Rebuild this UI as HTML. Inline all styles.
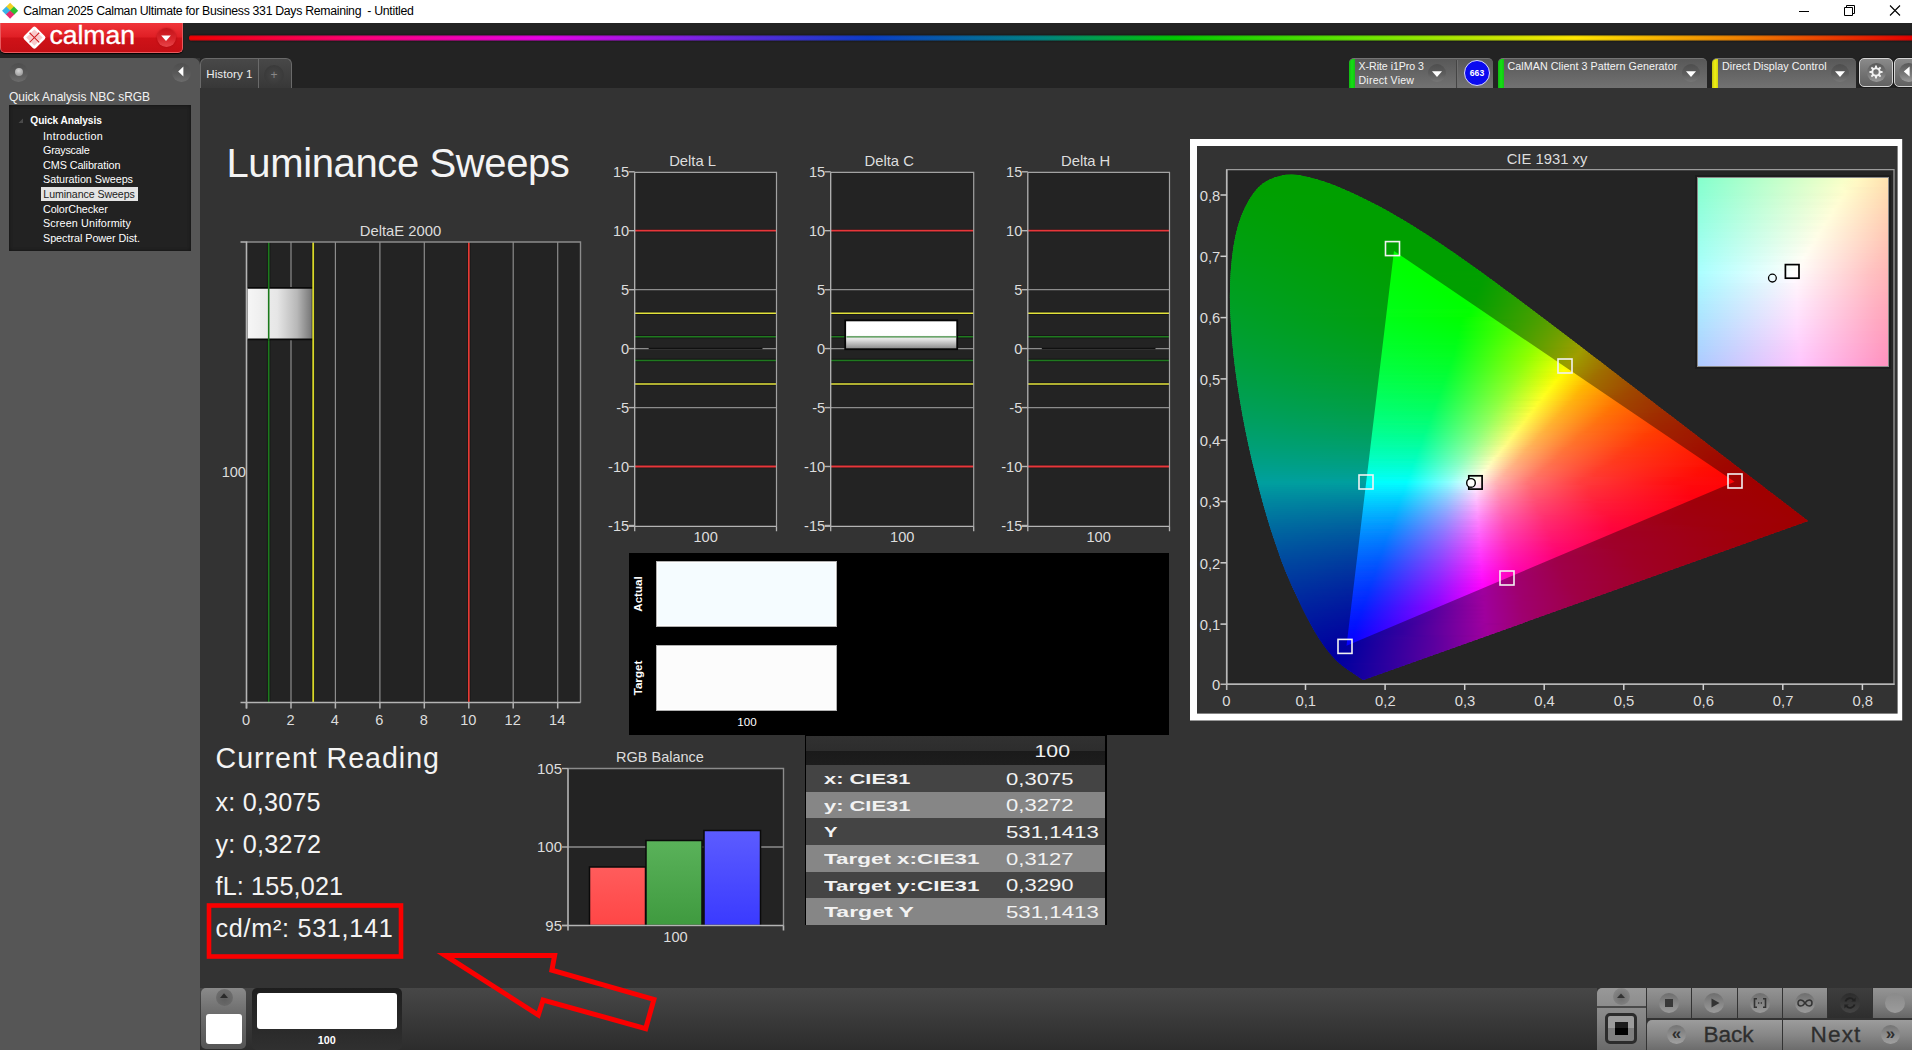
<!DOCTYPE html><html><head><meta charset="utf-8"><title>Calman</title><style>html,body{margin:0;padding:0;background:#333;overflow:hidden}
body{width:1912px;height:1050px;position:relative;font-family:"Liberation Sans",sans-serif;color:#eee}
.abs{position:absolute;box-sizing:border-box}
.t{position:absolute;white-space:pre;font-family:"Liberation Sans",sans-serif}
.ct{font-family:"Liberation Sans",sans-serif;font-size:14.8px;fill:#ddd}
svg text{font-family:"Liberation Sans",sans-serif}
</style></head><body>
<div class="abs" style="left:0px;top:23px;width:1912px;height:35px;background:#232323"></div><div class="abs" style="left:0px;top:0px;width:1912px;height:23px;background:#fff"></div><svg class="abs" style="left:0px;top:1px" width="20" height="20" viewBox="0 0 20 20"><g transform="translate(10.1 9.8) rotate(45)"><rect x="-5.7" y="-5.7" width="6" height="6" fill="#f2d024"/><rect x="-0.3" y="-5.7" width="6" height="6" fill="#30c030"/><rect x="-5.7" y="-0.3" width="6" height="6" fill="#3ab4e8"/><rect x="-0.3" y="-0.3" width="6" height="6" fill="#e82a6e"/></g></svg><div class="t" style="left:23.3px;top:4.2px;font-size:12.3px;line-height:15px;color:#000;letter-spacing:-0.309px;">Calman 2025 Calman Ultimate for Business 331 Days Remaining  - Untitled</div><svg class="abs" style="left:1790px;top:0" width="122" height="23" viewBox="0 0 122 23"><path d="M9 11.5H19" stroke="#000" stroke-width="1"/><path d="M54.5 7.5H62.5V15.5H54.5Z M56.5 7.5V5.5H64.5V13.5H62.5" fill="none" stroke="#000" stroke-width="1"/><path d="M100 5.5L110 15.5M110 5.5L100 15.5" stroke="#000" stroke-width="1.1"/></svg><div class="abs" style="left:189px;top:35px;width:1723px;height:6px;border-radius:3px 0 0 3px;background:linear-gradient(90deg,#f00000 0,#ff0078 172px,#e600e6 353px,#8220e6 498px,#0a3cc8 679px,#008282 851px,#00c800 987px,#64e600 1168px,#ffe600 1386px,#f08200 1549px,#e60000 1723px);box-shadow:0 0 2px rgba(0,0,0,.6)"></div><div class="abs" style="left:189px;top:35px;width:1723px;height:6px;border-radius:3px 0 0 3px;background:linear-gradient(180deg,rgba(30,30,30,.75) 0,rgba(30,30,30,0) 28%,rgba(30,30,30,0) 72%,rgba(30,30,30,.75) 100%)"></div><div class="abs" style="left:0px;top:23px;width:183px;height:29.7px;border-radius:0 0 5px 5px;background:linear-gradient(180deg,#f0353a 0,#e01f25 48%,#cf1218 52%,#c40f15 100%);border:1px solid #e85a5e;border-top:none;box-shadow:0 1px 1px #000"></div><svg class="abs" style="left:20px;top:23px" width="30" height="30" viewBox="0 0 30 30"><g transform="translate(14.4 14.6) rotate(45)"><rect x="-8.4" y="-8.4" width="16.8" height="16.8" rx="2.2" fill="#fff"/><g fill="#f9c9cb"><rect x="-5.8" y="-5.8" width="4.9" height="4.9"/><rect x="0.9" y="-5.8" width="4.9" height="4.9"/><rect x="-5.8" y="0.9" width="4.9" height="4.9"/><rect x="0.9" y="0.9" width="4.9" height="4.9"/></g><path d="M0 -6.8V6.8M-6.800 0H6.800" stroke="#d4262b" stroke-width="1.3"/></g></svg><div class="t" style="left:49.4px;top:19.2px;font-size:26.6px;line-height:32px;color:#fff;letter-spacing:-0.025px;-webkit-text-stroke:0.35px #fff;">calman</div><div class="abs" style="left:156.5px;top:28px;width:19px;height:19px;border-radius:50%;background:linear-gradient(180deg,#c4141a 0,#d8242a 55%,#e8454a 100%);box-shadow:0 0 2px rgba(120,0,0,.5)"></div><svg class="abs" style="left:160px;top:34px" width="12" height="8"><path d="M1.2 1.5H10.8L6 7Z" fill="#fff"/></svg><div class="abs" style="left:0px;top:58px;width:200px;height:992px;background:#565656;border-radius:0 7px 0 0"></div><div class="abs" style="left:9px;top:63px;width:19px;height:19px;border-radius:50%;background:linear-gradient(180deg,#4e4e4e,#595959 55%,#6c6c6c)"></div><div class="abs" style="left:14.5px;top:67.5px;width:8px;height:8px;border-radius:50%;background:radial-gradient(circle at 45% 35%,#d4d4d4,#8a8a8a)"></div><div class="abs" style="left:171.5px;top:62.5px;width:19px;height:19px;border-radius:50%;background:linear-gradient(180deg,#4e4e4e,#595959 55%,#6c6c6c)"></div><svg class="abs" style="left:177px;top:66px" width="8" height="11"><path d="M6.4 0.5V10.5L1.2 5.5Z" fill="#fff"/></svg><div class="t" style="left:9.0px;top:89.9px;font-size:12px;line-height:14px;color:#f2f2f2;letter-spacing:-0.045px;">Quick Analysis NBC sRGB</div><div class="abs" style="left:9px;top:105px;width:182px;height:146px;background:#222;box-shadow:inset 0 0 3px 1px #171717"></div><svg class="abs" style="left:17px;top:117px" width="8" height="8"><path d="M6 1.5V6H1.5Z" fill="#4a4a4a"/></svg><div class="t" style="left:30.3px;top:114.9px;font-size:10.2px;line-height:12px;color:#fff;font-weight:bold;letter-spacing:-0.090px;">Quick Analysis</div><div class="t" style="left:43.0px;top:129.6px;font-size:10.8px;line-height:13px;color:#fff;letter-spacing:0.314px;">Introduction</div><div class="t" style="left:43.0px;top:144.1px;font-size:10.8px;line-height:13px;color:#fff;letter-spacing:-0.246px;">Grayscale</div><div class="t" style="left:43.0px;top:158.6px;font-size:10.8px;line-height:13px;color:#fff;letter-spacing:-0.082px;">CMS Calibration</div><div class="t" style="left:43.0px;top:173.1px;font-size:10.8px;line-height:13px;color:#fff;letter-spacing:-0.039px;">Saturation Sweeps</div><div class="abs" style="left:41px;top:187px;width:97px;height:14px;background:#e4e4e4"></div><div class="t" style="left:43.3px;top:187.6px;font-size:10.6px;line-height:13px;color:#222;letter-spacing:-0.063px;">Luminance Sweeps</div><div class="t" style="left:43.0px;top:202.6px;font-size:10.8px;line-height:13px;color:#fff;letter-spacing:-0.110px;">ColorChecker</div><div class="t" style="left:43.0px;top:216.6px;font-size:10.8px;line-height:13px;color:#fff;letter-spacing:0.128px;">Screen Uniformity</div><div class="t" style="left:43.0px;top:231.6px;font-size:10.8px;line-height:13px;color:#fff;letter-spacing:-0.042px;">Spectral Power Dist.</div><div class="abs" style="left:200px;top:58px;width:1712px;height:30px;background:#232323"></div><div class="abs" style="left:200px;top:58px;width:92px;height:30px;background:linear-gradient(180deg,#484848,#383838);border:1px solid #6a6a6a;border-bottom:none;border-radius:6px 6px 0 0"></div><div class="abs" style="left:258px;top:59px;width:1px;height:29px;background:#6a6a6a"></div><div class="t" style="left:206.3px;top:66.9px;font-size:11.6px;line-height:14px;color:#eee;letter-spacing:0.059px;">History 1</div><div class="abs" style="left:264px;top:65px;width:20px;height:20px;border-radius:50%;background:radial-gradient(circle,#464646 0,#3a3a3a 70%,rgba(60,60,60,0) 100%)"></div><div class="t" style="left:74.0px;width:400px;top:68.1px;font-size:12px;line-height:14px;color:#888;text-align:center;">+</div><div class="abs" style="left:1349px;top:58px;width:144px;height:30px;background:linear-gradient(180deg,#585858,#727272);border-radius:5px 5px 0 0;border-top:1px solid #747474;overflow:hidden"><div style="position:absolute;left:0;top:-1px;width:6px;height:31px;background:linear-gradient(90deg,#12b812,#14e014 50%,#12c412)"></div></div><div class="abs" style="left:1456px;top:60px;width:1px;height:28px;background:#444;box-shadow:1px 0 0 #6e6e6e"></div><div class="t" style="left:1358.5px;top:59.9px;font-size:10.6px;line-height:13px;color:#f4f4f4;letter-spacing:-0.035px;">X-Rite i1Pro 3</div><div class="t" style="left:1358.5px;top:73.8px;font-size:10.6px;line-height:13px;color:#f4f4f4;letter-spacing:0.208px;">Direct View</div><div class="abs" style="left:1428px;top:64px;width:18px;height:18px;border-radius:50%;background:linear-gradient(180deg,#4c4c4c 0,#5c5c5c 55%,#787878 100%);opacity:.9"></div><svg class="abs" style="left:1431px;top:70.3px" width="12" height="8"><path d="M1 1.2H11L6 7Z" fill="#fff"/></svg><div class="abs" style="left:1464px;top:60px;width:26px;height:26px;border-radius:50%;background:#0a0af0;border:1.3px solid #d8d8ff"></div><div class="t" style="left:1277.0px;width:400px;top:68.3px;font-size:8.6px;line-height:10px;color:#fff;text-align:center;font-weight:bold;">663</div><div class="abs" style="left:1498px;top:58px;width:209px;height:30px;background:linear-gradient(180deg,#585858,#727272);border-radius:5px 5px 0 0;border-top:1px solid #747474;overflow:hidden"><div style="position:absolute;left:0;top:-1px;width:6px;height:31px;background:linear-gradient(90deg,#12b812,#14e014 50%,#12c412)"></div></div><div class="t" style="left:1507.5px;top:59.9px;font-size:10.7px;line-height:13px;color:#f4f4f4;letter-spacing:0.069px;">CalMAN Client 3 Pattern Generator</div><div class="abs" style="left:1681.5px;top:64px;width:18px;height:18px;border-radius:50%;background:linear-gradient(180deg,#4c4c4c 0,#5c5c5c 55%,#787878 100%);opacity:.9"></div><svg class="abs" style="left:1684.5px;top:70.3px" width="12" height="8"><path d="M1 1.2H11L6 7Z" fill="#fff"/></svg><div class="abs" style="left:1712px;top:58px;width:144px;height:30px;background:linear-gradient(180deg,#585858,#727272);border-radius:5px 5px 0 0;border-top:1px solid #747474;overflow:hidden"><div style="position:absolute;left:0;top:-1px;width:6px;height:31px;background:linear-gradient(90deg,#c8c810,#f0f014 50%,#d4d412)"></div></div><div class="t" style="left:1722.0px;top:59.9px;font-size:10.7px;line-height:13px;color:#f4f4f4;letter-spacing:0.056px;">Direct Display Control</div><div class="abs" style="left:1831px;top:64px;width:18px;height:18px;border-radius:50%;background:linear-gradient(180deg,#4c4c4c 0,#5c5c5c 55%,#787878 100%);opacity:.9"></div><svg class="abs" style="left:1834px;top:70.3px" width="12" height="8"><path d="M1 1.2H11L6 7Z" fill="#fff"/></svg><div class="abs" style="left:1859px;top:58px;width:33.5px;height:28.5px;border-radius:5px;background:linear-gradient(180deg,#8a8a8a,#747474 50%,#626262);border:1.2px solid #d4d4d4;box-shadow:0 0 0 1px #1a1a1a"></div><div class="abs" style="left:1866.5px;top:62.5px;width:19px;height:19px;border-radius:50%;background:linear-gradient(180deg,#585858,#7a7a7a 60%,#9a9a9a)"></div><svg class="abs" style="left:1866px;top:62px" width="20" height="20" viewBox="-10 -10 20 20"><path d="M-0.88 -6.54 L0.88 -6.54 L1.10 -4.57 L2.46 -4.01 L4.00 -5.25 L5.25 -4.00 L4.01 -2.46 L4.57 -1.10 L6.54 -0.88 L6.54 0.88 L4.57 1.10 L4.01 2.46 L5.25 4.00 L4.00 5.25 L2.46 4.01 L1.10 4.57 L0.88 6.54 L-0.88 6.54 L-1.10 4.57 L-2.46 4.01 L-4.00 5.25 L-5.25 4.00 L-4.01 2.46 L-4.57 1.10 L-6.54 0.88 L-6.54 -0.88 L-4.57 -1.10 L-4.01 -2.46 L-5.25 -4.00 L-4.00 -5.25 L-2.46 -4.01 L-1.10 -4.57Z M2.70 0 A2.70 2.70 0 1 0 -2.70 0 A2.70 2.70 0 1 0 2.70 0Z" fill="#f0f0f0" fill-rule="evenodd"/></svg><div class="abs" style="left:1894px;top:58px;width:33.5px;height:28.5px;border-radius:5px;background:linear-gradient(180deg,#8a8a8a,#747474 50%,#626262);border:1.2px solid #d4d4d4;box-shadow:0 0 0 1px #1a1a1a"></div><div class="abs" style="left:1898.5px;top:62.5px;width:19px;height:19px;border-radius:50%;background:linear-gradient(180deg,#585858,#7a7a7a 60%,#9a9a9a)"></div><svg class="abs" style="left:1903px;top:66px" width="8" height="11"><path d="M6.6 0.6V10.4L0.8 5.5Z" fill="#fff"/></svg><div class="abs" style="left:200px;top:988px;width:1397px;height:62px;background:linear-gradient(180deg,#474747,#2c2c2c)"></div><div class="abs" style="left:201px;top:988px;width:45px;height:61px;border-radius:5px;background:linear-gradient(180deg,#8a8a8a 0,#6a6a6a 45%,#555 100%)"></div><div class="abs" style="left:215.5px;top:989px;width:17px;height:17px;border-radius:50%;background:radial-gradient(circle at 50% 60%,#5e5e5e,#6c6c6c 70%,rgba(120,120,120,0))"></div><svg class="abs" style="left:219px;top:992px" width="10" height="7"><path d="M1 6L5 1.2L9 6Z" fill="#2a2a2a"/></svg><div class="abs" style="left:206px;top:1014px;width:35.5px;height:30px;background:#fff;border-radius:3px"></div><div class="abs" style="left:251.5px;top:988px;width:150.5px;height:62px;border-radius:5px;background:linear-gradient(180deg,#1e1e1e,#303030)"></div><div class="abs" style="left:257px;top:993px;width:140px;height:36px;background:#fff;border-radius:3px"></div><div class="t" style="left:126.8px;width:400px;top:1033.8px;font-size:10.8px;line-height:13px;color:#fff;text-align:center;font-weight:bold;">100</div>
<svg class="abs" style="left:0;top:0" width="1190" height="1050" viewBox="0 0 1190 1050"><defs><linearGradient id="gde" x1="0" x2="1" y1="0" y2="0"><stop offset="0" stop-color="#f6f6f6"/><stop offset=".45" stop-color="#e6e6e6"/><stop offset=".75" stop-color="#b8b8b8"/><stop offset="1" stop-color="#6e6e6e"/></linearGradient><linearGradient id="gdc" x1="0" x2="0" y1="0" y2="1"><stop offset="0" stop-color="#fff"/><stop offset=".5" stop-color="#fefefe"/><stop offset=".68" stop-color="#dedede"/><stop offset="1" stop-color="#858585"/></linearGradient><linearGradient id="gr" x1="0" x2="0" y1="0" y2="1"><stop offset="0" stop-color="#ff5c5c"/><stop offset="1" stop-color="#ff4646"/></linearGradient><linearGradient id="gg" x1="0" x2="0" y1="0" y2="1"><stop offset="0" stop-color="#5ab25a"/><stop offset="1" stop-color="#3f9a3f"/></linearGradient><linearGradient id="gb" x1="0" x2="0" y1="0" y2="1"><stop offset="0" stop-color="#5c5cff"/><stop offset="1" stop-color="#3a3aff"/></linearGradient></defs><rect x="246.5" y="242" width="334" height="460.5" fill="#232323"/><path d="M291.0 242 V702.5" stroke="#8c8c8c" stroke-width="1.2"/><path d="M335.4 242 V702.5" stroke="#8c8c8c" stroke-width="1.2"/><path d="M379.9 242 V702.5" stroke="#8c8c8c" stroke-width="1.2"/><path d="M424.3 242 V702.5" stroke="#8c8c8c" stroke-width="1.2"/><path d="M513.2 242 V702.5" stroke="#8c8c8c" stroke-width="1.2"/><path d="M557.7 242 V702.5" stroke="#8c8c8c" stroke-width="1.2"/><path d="M268.7 242 V702.5" stroke="#000" stroke-opacity=".3" stroke-width="3.6"/><path d="M468.8 242 V702.5" stroke="#000" stroke-opacity=".3" stroke-width="3.6"/><path d="M268.7 242 V702.5" stroke="#1c7a1c" stroke-width="1.6"/><path d="M468.8 242 V702.5" stroke="#e83a34" stroke-width="1.7"/><rect x="247.5" y="287.8" width="66" height="51.6" fill="url(#gde)"/><path d="M247.5 287.8 H313.5 M247.5 339.400 H313.5" stroke="#080808" stroke-width="1.7"/><path d="M268.7 287 V340.2" stroke="#1c7a1c" stroke-width="1.6"/><path d="M313.2 242 V702.5" stroke="#000" stroke-opacity=".3" stroke-width="3.6"/><path d="M313.2 242 V702.5" stroke="#d8d828" stroke-width="1.8"/><path d="M246.5 242 H580.5 V702.5" fill="none" stroke="#8c8c8c" stroke-width="1.4"/><path d="M240.5 242 H246.5 V708.5 H246.5 M240.5 702.5 H580.5" fill="none" stroke="#b4b4b4" stroke-width="1.6"/><path d="M246.5 702.5 V708.5" stroke="#b4b4b4" stroke-width="1.5"/><text x="246.0" y="724.5" text-anchor="middle" font-size="14.6" fill="#ddd">0</text><path d="M291.0 702.5 V708.5" stroke="#b4b4b4" stroke-width="1.5"/><text x="290.5" y="724.5" text-anchor="middle" font-size="14.6" fill="#ddd">2</text><path d="M335.4 702.5 V708.5" stroke="#b4b4b4" stroke-width="1.5"/><text x="334.9" y="724.5" text-anchor="middle" font-size="14.6" fill="#ddd">4</text><path d="M379.9 702.5 V708.5" stroke="#b4b4b4" stroke-width="1.5"/><text x="379.4" y="724.5" text-anchor="middle" font-size="14.6" fill="#ddd">6</text><path d="M424.3 702.5 V708.5" stroke="#b4b4b4" stroke-width="1.5"/><text x="423.8" y="724.5" text-anchor="middle" font-size="14.6" fill="#ddd">8</text><path d="M468.8 702.5 V708.5" stroke="#b4b4b4" stroke-width="1.5"/><text x="468.3" y="724.5" text-anchor="middle" font-size="14.6" fill="#ddd">10</text><path d="M513.2 702.5 V708.5" stroke="#b4b4b4" stroke-width="1.5"/><text x="512.7" y="724.5" text-anchor="middle" font-size="14.6" fill="#ddd">12</text><path d="M557.7 702.5 V708.5" stroke="#b4b4b4" stroke-width="1.5"/><text x="557.2" y="724.5" text-anchor="middle" font-size="14.6" fill="#ddd">14</text><text x="400.5" y="235.7" text-anchor="middle" font-size="14.8" fill="#ddd">DeltaE 2000</text><text x="246" y="477" text-anchor="end" font-size="14.6" fill="#ddd">100</text><rect x="634.7" y="172.3" width="141.8" height="354" fill="#232323"/><path d="M634.7 289.7 H776.5" stroke="#8c8c8c" stroke-width="1.3"/><path d="M634.7 348.6 H776.5" stroke="#8c8c8c" stroke-width="1.3"/><path d="M634.7 407.6 H776.5" stroke="#8c8c8c" stroke-width="1.3"/><path d="M634.7 230.7 H776.5" stroke="#000" stroke-opacity=".3" stroke-width="3.6"/><path d="M634.7 466.5 H776.5" stroke="#000" stroke-opacity=".3" stroke-width="3.6"/><path d="M634.7 313.2 H776.5" stroke="#000" stroke-opacity=".3" stroke-width="3.6"/><path d="M634.7 384.0 H776.5" stroke="#000" stroke-opacity=".3" stroke-width="3.6"/><path d="M634.7 336.8 H776.5" stroke="#000" stroke-opacity=".3" stroke-width="3.6"/><path d="M634.7 360.4 H776.5" stroke="#000" stroke-opacity=".3" stroke-width="3.6"/><path d="M634.7 230.7 H776.5" stroke="#e8363a" stroke-width="1.8"/><path d="M634.7 466.5 H776.5" stroke="#e8363a" stroke-width="1.8"/><path d="M634.7 313.2 H776.5" stroke="#e2e23a" stroke-width="1.5"/><path d="M634.7 384.0 H776.5" stroke="#e2e23a" stroke-width="1.5"/><path d="M634.7 336.8 H776.5" stroke="#1f7a1f" stroke-width="1.5"/><path d="M634.7 360.4 H776.5" stroke="#1f7a1f" stroke-width="1.5"/><path d="M648.7 348.6 H762.5" stroke="#101010" stroke-width="1.5"/><path d="M634.7 172.3 H776.5 V526.3" fill="none" stroke="#a2a2a2" stroke-width="1.2"/><path d="M634.7 172.3 V531.3 M628.7 526.3 H776.5 M776.5 526.3 V531.3" fill="none" stroke="#b4b4b4" stroke-width="1.3"/><path d="M628.7 171.8 H634.7" stroke="#b4b4b4" stroke-width="1.4"/><text x="629.2" y="176.8" text-anchor="end" font-size="14.6" fill="#ddd">15</text><path d="M628.7 230.7 H634.7" stroke="#b4b4b4" stroke-width="1.4"/><text x="629.2" y="235.7" text-anchor="end" font-size="14.6" fill="#ddd">10</text><path d="M628.7 289.7 H634.7" stroke="#b4b4b4" stroke-width="1.4"/><text x="629.2" y="294.7" text-anchor="end" font-size="14.6" fill="#ddd">5</text><path d="M628.7 348.6 H634.7" stroke="#b4b4b4" stroke-width="1.4"/><text x="629.2" y="353.6" text-anchor="end" font-size="14.6" fill="#ddd">0</text><path d="M628.7 407.6 H634.7" stroke="#b4b4b4" stroke-width="1.4"/><text x="629.2" y="412.6" text-anchor="end" font-size="14.6" fill="#ddd">-5</text><path d="M628.7 466.5 H634.7" stroke="#b4b4b4" stroke-width="1.4"/><text x="629.2" y="471.5" text-anchor="end" font-size="14.6" fill="#ddd">-10</text><path d="M628.7 525.5 H634.7" stroke="#b4b4b4" stroke-width="1.4"/><text x="629.2" y="530.5" text-anchor="end" font-size="14.6" fill="#ddd">-15</text><text x="692.6" y="166" text-anchor="middle" font-size="14.8" fill="#ddd">Delta L</text><text x="705.6" y="542" text-anchor="middle" font-size="14.6" fill="#ddd">100</text><rect x="830.7" y="172.3" width="143" height="354" fill="#232323"/><path d="M830.7 289.7 H973.7" stroke="#8c8c8c" stroke-width="1.3"/><path d="M830.7 348.6 H973.7" stroke="#8c8c8c" stroke-width="1.3"/><path d="M830.7 407.6 H973.7" stroke="#8c8c8c" stroke-width="1.3"/><path d="M830.7 230.7 H973.7" stroke="#000" stroke-opacity=".3" stroke-width="3.6"/><path d="M830.7 466.5 H973.7" stroke="#000" stroke-opacity=".3" stroke-width="3.6"/><path d="M830.7 313.2 H973.7" stroke="#000" stroke-opacity=".3" stroke-width="3.6"/><path d="M830.7 384.0 H973.7" stroke="#000" stroke-opacity=".3" stroke-width="3.6"/><path d="M830.7 336.8 H973.7" stroke="#000" stroke-opacity=".3" stroke-width="3.6"/><path d="M830.7 360.4 H973.7" stroke="#000" stroke-opacity=".3" stroke-width="3.6"/><path d="M830.7 230.7 H973.7" stroke="#e8363a" stroke-width="1.8"/><path d="M830.7 466.5 H973.7" stroke="#e8363a" stroke-width="1.8"/><path d="M830.7 313.2 H973.7" stroke="#e2e23a" stroke-width="1.5"/><path d="M830.7 384.0 H973.7" stroke="#e2e23a" stroke-width="1.5"/><path d="M830.7 336.8 H973.7" stroke="#1f7a1f" stroke-width="1.5"/><path d="M830.7 360.4 H973.7" stroke="#1f7a1f" stroke-width="1.5"/><rect x="845.2" y="320.4" width="112" height="28.8" fill="url(#gdc)" stroke="#060606" stroke-width="1.8"/><path d="M846.5 336.8 H957" stroke="#1f7a1f" stroke-width="1.2" opacity=".85"/><path d="M830.7 172.3 H973.7 V526.3" fill="none" stroke="#a2a2a2" stroke-width="1.2"/><path d="M830.7 172.3 V531.3 M824.7 526.3 H973.7 M973.7 526.3 V531.3" fill="none" stroke="#b4b4b4" stroke-width="1.3"/><path d="M824.7 171.8 H830.7" stroke="#b4b4b4" stroke-width="1.4"/><text x="825.2" y="176.8" text-anchor="end" font-size="14.6" fill="#ddd">15</text><path d="M824.7 230.7 H830.7" stroke="#b4b4b4" stroke-width="1.4"/><text x="825.2" y="235.7" text-anchor="end" font-size="14.6" fill="#ddd">10</text><path d="M824.7 289.7 H830.7" stroke="#b4b4b4" stroke-width="1.4"/><text x="825.2" y="294.7" text-anchor="end" font-size="14.6" fill="#ddd">5</text><path d="M824.7 348.6 H830.7" stroke="#b4b4b4" stroke-width="1.4"/><text x="825.2" y="353.6" text-anchor="end" font-size="14.6" fill="#ddd">0</text><path d="M824.7 407.6 H830.7" stroke="#b4b4b4" stroke-width="1.4"/><text x="825.2" y="412.6" text-anchor="end" font-size="14.6" fill="#ddd">-5</text><path d="M824.7 466.5 H830.7" stroke="#b4b4b4" stroke-width="1.4"/><text x="825.2" y="471.5" text-anchor="end" font-size="14.6" fill="#ddd">-10</text><path d="M824.7 525.5 H830.7" stroke="#b4b4b4" stroke-width="1.4"/><text x="825.2" y="530.5" text-anchor="end" font-size="14.6" fill="#ddd">-15</text><text x="889.2" y="166" text-anchor="middle" font-size="14.8" fill="#ddd">Delta C</text><text x="902.2" y="542" text-anchor="middle" font-size="14.6" fill="#ddd">100</text><rect x="1027.8" y="172.3" width="141.7" height="354" fill="#232323"/><path d="M1027.8 289.7 H1169.5" stroke="#8c8c8c" stroke-width="1.3"/><path d="M1027.8 348.6 H1169.5" stroke="#8c8c8c" stroke-width="1.3"/><path d="M1027.8 407.6 H1169.5" stroke="#8c8c8c" stroke-width="1.3"/><path d="M1027.8 230.7 H1169.5" stroke="#000" stroke-opacity=".3" stroke-width="3.6"/><path d="M1027.8 466.5 H1169.5" stroke="#000" stroke-opacity=".3" stroke-width="3.6"/><path d="M1027.8 313.2 H1169.5" stroke="#000" stroke-opacity=".3" stroke-width="3.6"/><path d="M1027.8 384.0 H1169.5" stroke="#000" stroke-opacity=".3" stroke-width="3.6"/><path d="M1027.8 336.8 H1169.5" stroke="#000" stroke-opacity=".3" stroke-width="3.6"/><path d="M1027.8 360.4 H1169.5" stroke="#000" stroke-opacity=".3" stroke-width="3.6"/><path d="M1027.8 230.7 H1169.5" stroke="#e8363a" stroke-width="1.8"/><path d="M1027.8 466.5 H1169.5" stroke="#e8363a" stroke-width="1.8"/><path d="M1027.8 313.2 H1169.5" stroke="#e2e23a" stroke-width="1.5"/><path d="M1027.8 384.0 H1169.5" stroke="#e2e23a" stroke-width="1.5"/><path d="M1027.8 336.8 H1169.5" stroke="#1f7a1f" stroke-width="1.5"/><path d="M1027.8 360.4 H1169.5" stroke="#1f7a1f" stroke-width="1.5"/><path d="M1041.8 348.6 H1155.5" stroke="#101010" stroke-width="1.5"/><path d="M1027.8 172.3 H1169.5 V526.3" fill="none" stroke="#a2a2a2" stroke-width="1.2"/><path d="M1027.8 172.3 V531.3 M1021.8 526.3 H1169.5 M1169.5 526.3 V531.3" fill="none" stroke="#b4b4b4" stroke-width="1.3"/><path d="M1021.8 171.8 H1027.8" stroke="#b4b4b4" stroke-width="1.4"/><text x="1022.3" y="176.8" text-anchor="end" font-size="14.6" fill="#ddd">15</text><path d="M1021.8 230.7 H1027.8" stroke="#b4b4b4" stroke-width="1.4"/><text x="1022.3" y="235.7" text-anchor="end" font-size="14.6" fill="#ddd">10</text><path d="M1021.8 289.7 H1027.8" stroke="#b4b4b4" stroke-width="1.4"/><text x="1022.3" y="294.7" text-anchor="end" font-size="14.6" fill="#ddd">5</text><path d="M1021.8 348.6 H1027.8" stroke="#b4b4b4" stroke-width="1.4"/><text x="1022.3" y="353.6" text-anchor="end" font-size="14.6" fill="#ddd">0</text><path d="M1021.8 407.6 H1027.8" stroke="#b4b4b4" stroke-width="1.4"/><text x="1022.3" y="412.6" text-anchor="end" font-size="14.6" fill="#ddd">-5</text><path d="M1021.8 466.5 H1027.8" stroke="#b4b4b4" stroke-width="1.4"/><text x="1022.3" y="471.5" text-anchor="end" font-size="14.6" fill="#ddd">-10</text><path d="M1021.8 525.5 H1027.8" stroke="#b4b4b4" stroke-width="1.4"/><text x="1022.3" y="530.5" text-anchor="end" font-size="14.6" fill="#ddd">-15</text><text x="1085.65" y="166" text-anchor="middle" font-size="14.8" fill="#ddd">Delta H</text><text x="1098.65" y="542" text-anchor="middle" font-size="14.6" fill="#ddd">100</text><rect x="568" y="768.5" width="215.5" height="157" fill="#232323"/><path d="M568 847 H783.5" stroke="#8c8c8c" stroke-width="1.3"/><rect x="589.5" y="867" width="56" height="58.5" fill="url(#gr)" stroke="#0a0a0a" stroke-width="1.5"/><rect x="646" y="840.5" width="56" height="85" fill="url(#gg)" stroke="#0a0a0a" stroke-width="1.5"/><rect x="704" y="830.5" width="56.5" height="95" fill="url(#gb)" stroke="#0a0a0a" stroke-width="1.5"/><path d="M568 768.5 H783.5 V925.5" fill="none" stroke="#8c8c8c" stroke-width="1.4"/><path d="M568 768.5 V930.5 M562 925.5 H783.5 M783.5 925.5 V930.5" fill="none" stroke="#b4b4b4" stroke-width="1.6"/><path d="M562 768.5 H568" stroke="#b4b4b4" stroke-width="1.4"/><text x="562" y="773.7" text-anchor="end" font-size="15" fill="#ddd">105</text><path d="M562 847.0 H568" stroke="#b4b4b4" stroke-width="1.4"/><text x="562" y="852.2" text-anchor="end" font-size="15" fill="#ddd">100</text><path d="M562 925.5 H568" stroke="#b4b4b4" stroke-width="1.4"/><text x="562" y="930.7" text-anchor="end" font-size="15" fill="#ddd">95</text><text x="660" y="761.5" text-anchor="middle" font-size="14.5" fill="#ddd">RGB Balance</text><text x="675.5" y="942" text-anchor="middle" font-size="14.6" fill="#ddd">100</text></svg><div class="t" style="left:226.5px;top:139.2px;font-size:40px;line-height:48px;color:#f4f4f4;letter-spacing:-0.382px;">Luminance Sweeps</div><div class="abs" style="left:629px;top:553px;width:540px;height:181.5px;background:#000"></div><div class="abs" style="left:656px;top:561px;width:181px;height:66px;background:#f5fcff;border:1px solid #b0b0b0;box-shadow:inset 0 0 0 1px #fff"></div><div class="abs" style="left:656px;top:644.5px;width:181px;height:66.5px;background:#fcfcfc;border:1px solid #b0b0b0;box-shadow:inset 0 0 0 1px #fff"></div><div class="t" style="left:587.5px;top:587px;width:100px;height:14px;line-height:14px;font-size:11.6px;font-weight:bold;color:#fff;text-align:center;transform:rotate(-90deg)">Actual</div><div class="t" style="left:587.5px;top:670.5px;width:100px;height:14px;line-height:14px;font-size:11.6px;font-weight:bold;color:#fff;text-align:center;transform:rotate(-90deg)">Target</div><div class="t" style="left:547.0px;width:400px;top:715.1px;font-size:11.6px;line-height:14px;color:#fff;text-align:center;">100</div><div class="t" style="left:215.5px;top:740.7px;font-size:28.6px;line-height:34px;color:#f4f4f4;letter-spacing:0.976px;">Current Reading</div><div class="t" style="left:215.5px;top:786.9px;font-size:25.2px;line-height:30px;color:#f4f4f4;letter-spacing:0.180px;">x: 0,3075</div><div class="t" style="left:215.5px;top:828.7px;font-size:25.2px;line-height:30px;color:#f4f4f4;letter-spacing:0.236px;">y: 0,3272</div><div class="t" style="left:215.5px;top:870.7px;font-size:25.2px;line-height:30px;color:#f4f4f4;letter-spacing:0.153px;">fL: 155,021</div><div class="t" style="left:215.5px;top:912.7px;font-size:25.2px;line-height:30px;color:#f4f4f4;letter-spacing:0.707px;">cd/m²: 531,141</div><div class="abs" style="left:804.5px;top:735px;width:302.5px;height:190px;background:#000"></div><div class="abs" style="left:806px;top:736px;width:299px;height:29px;background:linear-gradient(180deg,#313131 0,#2d2d2d 50%,#1a1a1a 50%,#1d1d1d 100%)"></div><div class="t" style="right:841.5px;top:741.7px;font-size:15.6px;line-height:19px;color:#f0f0f0;text-align:right;transform:scaleX(1.364);transform-origin:right center;">100</div><div class="abs" style="left:806px;top:765px;width:299px;height:27px;background:#444"></div><div class="t" style="left:824.0px;top:770.4px;font-size:15.4px;line-height:18px;color:#f2f2f2;font-weight:bold;transform:scaleX(1.423);transform-origin:left center;">x: CIE31</div><div class="t" style="left:1005.5px;top:769.9px;font-size:15.6px;line-height:19px;color:#f2f2f2;transform:scaleX(1.413);transform-origin:left center;">0,3075</div><div class="abs" style="left:806px;top:792px;width:299px;height:26px;background:#868686"></div><div class="t" style="left:824.0px;top:796.9px;font-size:15.4px;line-height:18px;color:#f2f2f2;font-weight:bold;transform:scaleX(1.423);transform-origin:left center;">y: CIE31</div><div class="t" style="left:1005.5px;top:796.4px;font-size:15.6px;line-height:19px;color:#f2f2f2;transform:scaleX(1.413);transform-origin:left center;">0,3272</div><div class="abs" style="left:806px;top:818px;width:299px;height:27px;background:#444"></div><div class="t" style="left:824.0px;top:823.4px;font-size:15.4px;line-height:18px;color:#f2f2f2;font-weight:bold;transform:scaleX(1.314);transform-origin:left center;">Y</div><div class="t" style="left:1005.5px;top:822.9px;font-size:15.6px;line-height:19px;color:#f2f2f2;transform:scaleX(1.426);transform-origin:left center;">531,1413</div><div class="abs" style="left:806px;top:845px;width:299px;height:27px;background:#868686"></div><div class="t" style="left:824.0px;top:850.4px;font-size:15.4px;line-height:18px;color:#f2f2f2;font-weight:bold;transform:scaleX(1.457);transform-origin:left center;">Target x:CIE31</div><div class="t" style="left:1005.5px;top:849.9px;font-size:15.6px;line-height:19px;color:#f2f2f2;transform:scaleX(1.413);transform-origin:left center;">0,3127</div><div class="abs" style="left:806px;top:872px;width:299px;height:26px;background:#444"></div><div class="t" style="left:824.0px;top:876.9px;font-size:15.4px;line-height:18px;color:#f2f2f2;font-weight:bold;transform:scaleX(1.457);transform-origin:left center;">Target y:CIE31</div><div class="t" style="left:1005.5px;top:876.4px;font-size:15.6px;line-height:19px;color:#f2f2f2;transform:scaleX(1.413);transform-origin:left center;">0,3290</div><div class="abs" style="left:806px;top:898px;width:299px;height:27px;background:#868686"></div><div class="t" style="left:824.0px;top:903.4px;font-size:15.4px;line-height:18px;color:#f2f2f2;font-weight:bold;transform:scaleX(1.495);transform-origin:left center;">Target Y</div><div class="t" style="left:1005.5px;top:902.9px;font-size:15.6px;line-height:19px;color:#f2f2f2;transform:scaleX(1.426);transform-origin:left center;">531,1413</div>
<svg class="abs" style="left:0;top:0" width="1912" height="1050" viewBox="0 0 1912 1050"><defs><clipPath id="loc"><polygon points="1364.7,679.6 1364.7,679.6 1364.6,679.6 1364.6,679.6 1364.5,679.6 1364.5,679.6 1364.4,679.6 1364.3,679.6 1364.3,679.7 1364.2,679.7 1364.1,679.7 1364.0,679.7 1363.9,679.7 1363.8,679.7 1363.7,679.7 1363.5,679.7 1363.4,679.7 1363.2,679.6 1363.0,679.6 1362.8,679.5 1362.6,679.5 1362.4,679.4 1362.2,679.4 1362.1,679.3 1361.9,679.2 1361.7,679.1 1361.5,679.0 1361.3,678.8 1361.1,678.7 1360.9,678.6 1360.6,678.4 1360.3,678.2 1360.0,678.0 1359.7,677.8 1359.4,677.6 1359.0,677.4 1358.7,677.1 1358.3,676.8 1357.9,676.6 1357.5,676.3 1357.0,676.0 1356.6,675.6 1356.1,675.3 1355.6,675.0 1355.0,674.6 1354.4,674.2 1353.8,673.8 1353.1,673.3 1352.4,672.8 1351.7,672.3 1350.9,671.8 1350.1,671.3 1349.2,670.7 1348.3,670.1 1347.4,669.5 1346.4,668.8 1345.4,668.0 1344.4,667.3 1343.3,666.4 1342.1,665.5 1340.9,664.5 1339.7,663.5 1338.4,662.4 1337.1,661.2 1335.7,659.9 1334.2,658.3 1332.6,656.5 1330.9,654.6 1329.1,652.5 1327.2,650.1 1325.2,647.4 1323.1,644.5 1320.9,641.3 1318.6,637.9 1316.2,634.0 1313.7,629.7 1311.0,625.0 1308.3,619.9 1305.4,614.4 1302.4,608.4 1299.2,601.8 1295.9,594.6 1292.3,587.0 1288.7,578.7 1285.0,569.9 1281.3,560.4 1277.7,550.1 1274.0,539.2 1270.2,527.7 1266.5,515.6 1262.9,502.9 1259.3,489.6 1255.7,475.5 1252.1,461.0 1248.7,446.1 1245.6,431.3 1242.7,416.2 1240.0,400.7 1237.5,385.2 1235.3,369.7 1233.5,354.7 1232.1,340.0 1231.0,325.3 1230.2,311.0 1229.9,297.1 1230.1,283.8 1230.8,271.1 1231.9,258.7 1233.4,246.9 1235.5,235.8 1238.0,225.7 1241.1,216.5 1244.7,208.0 1248.7,200.4 1253.1,193.7 1257.8,188.1 1262.8,183.6 1268.2,180.2 1273.9,177.7 1279.8,175.9 1285.8,174.8 1291.8,174.5 1298.1,175.0 1304.5,176.2 1310.9,177.7 1317.3,179.4 1323.7,181.4 1330.2,183.7 1336.7,186.3 1343.1,189.1 1349.4,191.8 1355.5,194.6 1361.6,197.5 1367.7,200.4 1373.6,203.5 1379.6,206.6 1385.5,209.8 1391.3,213.0 1397.1,216.4 1402.9,219.8 1408.6,223.2 1414.4,226.8 1420.1,230.4 1425.8,234.0 1431.5,237.7 1437.2,241.5 1442.9,245.3 1448.6,249.2 1454.3,253.1 1459.9,257.0 1465.6,261.0 1471.2,265.0 1476.9,269.0 1482.5,273.1 1488.2,277.2 1493.8,281.3 1499.5,285.5 1505.1,289.7 1510.8,293.8 1516.5,298.1 1522.1,302.3 1527.8,306.5 1533.4,310.8 1539.0,315.0 1544.7,319.3 1550.3,323.5 1555.9,327.8 1561.5,332.0 1567.1,336.3 1572.7,340.6 1578.3,344.8 1583.8,349.0 1589.3,353.2 1594.8,357.4 1600.3,361.6 1605.7,365.8 1611.1,369.9 1616.5,374.1 1621.8,378.2 1627.1,382.2 1632.4,386.3 1637.6,390.3 1642.8,394.2 1647.9,398.2 1652.9,402.0 1657.9,405.9 1662.9,409.7 1667.8,413.4 1672.6,417.1 1677.3,420.7 1682.0,424.3 1686.5,427.8 1691.0,431.2 1695.4,434.6 1699.7,437.9 1703.9,441.1 1707.9,444.2 1711.8,447.2 1715.6,450.1 1719.3,453.0 1723.0,455.7 1726.5,458.5 1730.0,461.1 1733.3,463.7 1736.6,466.2 1739.7,468.6 1742.7,470.9 1745.6,473.1 1748.4,475.2 1751.1,477.2 1753.6,479.2 1756.1,481.1 1758.5,482.9 1760.7,484.6 1762.9,486.3 1765.0,487.9 1766.9,489.4 1768.8,490.9 1770.6,492.3 1772.3,493.6 1774.0,494.8 1775.6,496.1 1777.1,497.2 1778.5,498.3 1779.9,499.3 1781.2,500.3 1782.4,501.3 1783.6,502.2 1784.8,503.1 1785.9,503.9 1786.9,504.8 1788.0,505.6 1789.0,506.3 1790.0,507.1 1790.9,507.8 1791.8,508.5 1792.6,509.1 1793.5,509.8 1794.2,510.4 1795.0,511.0 1795.7,511.5 1796.4,512.1 1797.1,512.6 1797.7,513.0 1798.3,513.5 1798.9,513.9 1799.4,514.3 1799.9,514.7 1800.4,515.1 1800.8,515.4 1801.3,515.7 1801.7,516.0 1802.1,516.3 1802.4,516.6 1802.8,516.9 1803.1,517.1 1803.3,517.3 1803.5,517.5 1803.7,517.6 1804.0,517.9 1804.4,518.2 1805.1,518.7 1805.9,519.3 1806.8,520.0 1807.6,520.6 1808.1,521.0"/></clipPath><linearGradient id="c0" gradientUnits="userSpaceOnUse" x1="1283" x2="1300" y1="0" y2="0"><stop offset="0" stop-color="#00ff00"/><stop offset="1" stop-color="#00ff00"/></linearGradient><linearGradient id="c1" gradientUnits="userSpaceOnUse" x1="1275" x2="1309" y1="0" y2="0"><stop offset="0" stop-color="#00ff00"/><stop offset="1" stop-color="#00ff00"/></linearGradient><linearGradient id="c2" gradientUnits="userSpaceOnUse" x1="1269" x2="1317" y1="0" y2="0"><stop offset="0" stop-color="#00ff00"/><stop offset="1" stop-color="#00ff00"/></linearGradient><linearGradient id="c3" gradientUnits="userSpaceOnUse" x1="1265" x2="1324" y1="0" y2="0"><stop offset="0" stop-color="#00ff00"/><stop offset="1" stop-color="#00ff00"/></linearGradient><linearGradient id="c4" gradientUnits="userSpaceOnUse" x1="1262" x2="1330" y1="0" y2="0"><stop offset="0" stop-color="#00ff00"/><stop offset="1" stop-color="#00ff00"/></linearGradient><linearGradient id="c5" gradientUnits="userSpaceOnUse" x1="1260" x2="1335" y1="0" y2="0"><stop offset="0" stop-color="#00ff00"/><stop offset="1" stop-color="#00ff00"/></linearGradient><linearGradient id="c6" gradientUnits="userSpaceOnUse" x1="1257" x2="1340" y1="0" y2="0"><stop offset="0" stop-color="#00ff00"/><stop offset="1" stop-color="#00ff00"/></linearGradient><linearGradient id="c7" gradientUnits="userSpaceOnUse" x1="1256" x2="1344" y1="0" y2="0"><stop offset="0" stop-color="#00ff00"/><stop offset="1" stop-color="#00ff00"/></linearGradient><linearGradient id="c8" gradientUnits="userSpaceOnUse" x1="1254" x2="1349" y1="0" y2="0"><stop offset="0" stop-color="#00ff00"/><stop offset="1" stop-color="#00ff00"/></linearGradient><linearGradient id="c9" gradientUnits="userSpaceOnUse" x1="1252" x2="1354" y1="0" y2="0"><stop offset="0" stop-color="#00ff01"/><stop offset="1" stop-color="#00ff00"/></linearGradient><linearGradient id="c10" gradientUnits="userSpaceOnUse" x1="1251" x2="1358" y1="0" y2="0"><stop offset="0" stop-color="#00ff02"/><stop offset="1" stop-color="#00ff00"/></linearGradient><linearGradient id="c11" gradientUnits="userSpaceOnUse" x1="1249" x2="1362" y1="0" y2="0"><stop offset="0" stop-color="#00ff04"/><stop offset="1" stop-color="#00ff00"/></linearGradient><linearGradient id="c12" gradientUnits="userSpaceOnUse" x1="1248" x2="1366" y1="0" y2="0"><stop offset="0" stop-color="#00ff05"/><stop offset="1" stop-color="#00ff00"/></linearGradient><linearGradient id="c13" gradientUnits="userSpaceOnUse" x1="1247" x2="1370" y1="0" y2="0"><stop offset="0" stop-color="#00ff05"/><stop offset="1" stop-color="#00ff00"/></linearGradient><linearGradient id="c14" gradientUnits="userSpaceOnUse" x1="1246" x2="1374" y1="0" y2="0"><stop offset="0" stop-color="#00ff06"/><stop offset="1" stop-color="#00ff00"/></linearGradient><linearGradient id="c15" gradientUnits="userSpaceOnUse" x1="1245" x2="1378" y1="0" y2="0"><stop offset="0" stop-color="#00ff07"/><stop offset="0.782" stop-color="#00ff00"/><stop offset="1" stop-color="#00ff00"/></linearGradient><linearGradient id="c16" gradientUnits="userSpaceOnUse" x1="1244" x2="1382" y1="0" y2="0"><stop offset="0" stop-color="#00ff08"/><stop offset="0.681" stop-color="#00ff00"/><stop offset="1" stop-color="#00ff00"/></linearGradient><linearGradient id="c17" gradientUnits="userSpaceOnUse" x1="1243" x2="1386" y1="0" y2="0"><stop offset="0" stop-color="#00ff09"/><stop offset="0.629" stop-color="#00ff00"/><stop offset="1" stop-color="#00ff00"/></linearGradient><linearGradient id="c18" gradientUnits="userSpaceOnUse" x1="1242" x2="1389" y1="0" y2="0"><stop offset="0" stop-color="#00ff0a"/><stop offset="0.612" stop-color="#00ff00"/><stop offset="1" stop-color="#00ff00"/></linearGradient><linearGradient id="c19" gradientUnits="userSpaceOnUse" x1="1241" x2="1393" y1="0" y2="0"><stop offset="0" stop-color="#00ff0b"/><stop offset="0.592" stop-color="#00ff00"/><stop offset="1" stop-color="#00ff00"/></linearGradient><linearGradient id="c20" gradientUnits="userSpaceOnUse" x1="1240" x2="1396" y1="0" y2="0"><stop offset="0" stop-color="#00ff0c"/><stop offset="0.59" stop-color="#00ff00"/><stop offset="1" stop-color="#00ff00"/></linearGradient><linearGradient id="c21" gradientUnits="userSpaceOnUse" x1="1239" x2="1400" y1="0" y2="0"><stop offset="0" stop-color="#00ff0d"/><stop offset="0.596" stop-color="#00ff00"/><stop offset="1" stop-color="#00ff00"/></linearGradient><linearGradient id="c22" gradientUnits="userSpaceOnUse" x1="1239" x2="1403" y1="0" y2="0"><stop offset="0" stop-color="#00ff0e"/><stop offset="0.585" stop-color="#00ff00"/><stop offset="1" stop-color="#00ff00"/></linearGradient><linearGradient id="c23" gradientUnits="userSpaceOnUse" x1="1238" x2="1406" y1="0" y2="0"><stop offset="0" stop-color="#00ff0f"/><stop offset="0.595" stop-color="#00ff00"/><stop offset="1" stop-color="#00ff00"/></linearGradient><linearGradient id="c24" gradientUnits="userSpaceOnUse" x1="1237" x2="1410" y1="0" y2="0"><stop offset="0" stop-color="#00ff10"/><stop offset="0.59" stop-color="#00ff00"/><stop offset="1" stop-color="#00ff00"/></linearGradient><linearGradient id="c25" gradientUnits="userSpaceOnUse" x1="1237" x2="1413" y1="0" y2="0"><stop offset="0" stop-color="#00ff11"/><stop offset="0.591" stop-color="#00ff00"/><stop offset="1" stop-color="#00ff00"/></linearGradient><linearGradient id="c26" gradientUnits="userSpaceOnUse" x1="1236" x2="1416" y1="0" y2="0"><stop offset="0" stop-color="#00ff12"/><stop offset="0.6" stop-color="#00ff00"/><stop offset="1" stop-color="#00ff00"/></linearGradient><linearGradient id="c27" gradientUnits="userSpaceOnUse" x1="1236" x2="1419" y1="0" y2="0"><stop offset="0" stop-color="#00ff13"/><stop offset="0.601" stop-color="#00ff00"/><stop offset="1" stop-color="#00ff00"/></linearGradient><linearGradient id="c28" gradientUnits="userSpaceOnUse" x1="1235" x2="1423" y1="0" y2="0"><stop offset="0" stop-color="#00ff14"/><stop offset="0.606" stop-color="#00ff00"/><stop offset="1" stop-color="#00ff00"/></linearGradient><linearGradient id="c29" gradientUnits="userSpaceOnUse" x1="1235" x2="1426" y1="0" y2="0"><stop offset="0" stop-color="#00ff15"/><stop offset="0.618" stop-color="#00ff00"/><stop offset="1" stop-color="#00ff00"/></linearGradient><linearGradient id="c30" gradientUnits="userSpaceOnUse" x1="1234" x2="1429" y1="0" y2="0"><stop offset="0" stop-color="#00ff16"/><stop offset="0.615" stop-color="#00ff00"/><stop offset="1" stop-color="#00ff00"/></linearGradient><linearGradient id="c31" gradientUnits="userSpaceOnUse" x1="1234" x2="1432" y1="0" y2="0"><stop offset="0" stop-color="#00ff17"/><stop offset="0.626" stop-color="#00ff00"/><stop offset="1" stop-color="#00ff00"/></linearGradient><linearGradient id="c32" gradientUnits="userSpaceOnUse" x1="1233" x2="1435" y1="0" y2="0"><stop offset="0" stop-color="#00ff18"/><stop offset="0.634" stop-color="#00ff00"/><stop offset="1" stop-color="#00ff00"/></linearGradient><linearGradient id="c33" gradientUnits="userSpaceOnUse" x1="1233" x2="1438" y1="0" y2="0"><stop offset="0" stop-color="#00ff19"/><stop offset="0.634" stop-color="#00ff00"/><stop offset="1" stop-color="#00ff00"/></linearGradient><linearGradient id="c34" gradientUnits="userSpaceOnUse" x1="1233" x2="1441" y1="0" y2="0"><stop offset="0" stop-color="#00ff1a"/><stop offset="0.644" stop-color="#00ff00"/><stop offset="1" stop-color="#00ff00"/></linearGradient><linearGradient id="c35" gradientUnits="userSpaceOnUse" x1="1232" x2="1444" y1="0" y2="0"><stop offset="0" stop-color="#00ff1b"/><stop offset="0.651" stop-color="#00ff00"/><stop offset="1" stop-color="#00ff00"/></linearGradient><linearGradient id="c36" gradientUnits="userSpaceOnUse" x1="1232" x2="1447" y1="0" y2="0"><stop offset="0" stop-color="#00ff1c"/><stop offset="0.651" stop-color="#00ff00"/><stop offset="1" stop-color="#00ff00"/></linearGradient><linearGradient id="c37" gradientUnits="userSpaceOnUse" x1="1232" x2="1450" y1="0" y2="0"><stop offset="0" stop-color="#00ff1c"/><stop offset="0.661" stop-color="#00ff00"/><stop offset="1" stop-color="#00ff00"/></linearGradient><linearGradient id="c38" gradientUnits="userSpaceOnUse" x1="1231" x2="1453" y1="0" y2="0"><stop offset="0" stop-color="#00ff1e"/><stop offset="0.667" stop-color="#00ff00"/><stop offset="1" stop-color="#00ff00"/></linearGradient><linearGradient id="c39" gradientUnits="userSpaceOnUse" x1="1231" x2="1456" y1="0" y2="0"><stop offset="0" stop-color="#00ff1e"/><stop offset="0.667" stop-color="#00ff00"/><stop offset="1" stop-color="#00ff00"/></linearGradient><linearGradient id="c40" gradientUnits="userSpaceOnUse" x1="1231" x2="1459" y1="0" y2="0"><stop offset="0" stop-color="#00ff1f"/><stop offset="0.675" stop-color="#00ff00"/><stop offset="1" stop-color="#00ff00"/></linearGradient><linearGradient id="c41" gradientUnits="userSpaceOnUse" x1="1231" x2="1461" y1="0" y2="0"><stop offset="0" stop-color="#00ff20"/><stop offset="0.678" stop-color="#00ff00"/><stop offset="1" stop-color="#00ff00"/></linearGradient><linearGradient id="c42" gradientUnits="userSpaceOnUse" x1="1230" x2="1464" y1="0" y2="0"><stop offset="0" stop-color="#00ff22"/><stop offset="0.684" stop-color="#00ff00"/><stop offset="1" stop-color="#00ff00"/></linearGradient><linearGradient id="c43" gradientUnits="userSpaceOnUse" x1="1230" x2="1467" y1="0" y2="0"><stop offset="0" stop-color="#00ff22"/><stop offset="0.692" stop-color="#00ff00"/><stop offset="1" stop-color="#00ff00"/></linearGradient><linearGradient id="c44" gradientUnits="userSpaceOnUse" x1="1230" x2="1470" y1="0" y2="0"><stop offset="0" stop-color="#00ff23"/><stop offset="0.692" stop-color="#00ff00"/><stop offset="1" stop-color="#00ff00"/></linearGradient><linearGradient id="c45" gradientUnits="userSpaceOnUse" x1="1230" x2="1473" y1="0" y2="0"><stop offset="0" stop-color="#00ff24"/><stop offset="0.7" stop-color="#00ff00"/><stop offset="1" stop-color="#00ff00"/></linearGradient><linearGradient id="c46" gradientUnits="userSpaceOnUse" x1="1230" x2="1476" y1="0" y2="0"><stop offset="0" stop-color="#00ff25"/><stop offset="0.699" stop-color="#00ff00"/><stop offset="1" stop-color="#00ff00"/></linearGradient><linearGradient id="c47" gradientUnits="userSpaceOnUse" x1="1229" x2="1478" y1="0" y2="0"><stop offset="0" stop-color="#00ff27"/><stop offset="0.707" stop-color="#00ff00"/><stop offset="1" stop-color="#00ff00"/></linearGradient><linearGradient id="c48" gradientUnits="userSpaceOnUse" x1="1229" x2="1481" y1="0" y2="0"><stop offset="0" stop-color="#00ff28"/><stop offset="0.714" stop-color="#00ff00"/><stop offset="1" stop-color="#00ff00"/></linearGradient><linearGradient id="c49" gradientUnits="userSpaceOnUse" x1="1229" x2="1484" y1="0" y2="0"><stop offset="0" stop-color="#00ff29"/><stop offset="0.722" stop-color="#00ff00"/><stop offset="1" stop-color="#03ff00"/></linearGradient><linearGradient id="c50" gradientUnits="userSpaceOnUse" x1="1229" x2="1487" y1="0" y2="0"><stop offset="0" stop-color="#00ff2a"/><stop offset="0.721" stop-color="#00ff00"/><stop offset="0.992" stop-color="#05ff00"/><stop offset="1" stop-color="#07ff00"/></linearGradient><linearGradient id="c51" gradientUnits="userSpaceOnUse" x1="1229" x2="1489" y1="0" y2="0"><stop offset="0" stop-color="#00ff2b"/><stop offset="0.731" stop-color="#00ff00"/><stop offset="0.977" stop-color="#03ff00"/><stop offset="1" stop-color="#0bff00"/></linearGradient><linearGradient id="c52" gradientUnits="userSpaceOnUse" x1="1229" x2="1492" y1="0" y2="0"><stop offset="0" stop-color="#00ff2c"/><stop offset="0.73" stop-color="#00ff00"/><stop offset="0.966" stop-color="#04ff00"/><stop offset="1" stop-color="#10ff00"/></linearGradient><linearGradient id="c53" gradientUnits="userSpaceOnUse" x1="1229" x2="1495" y1="0" y2="0"><stop offset="0" stop-color="#00ff2d"/><stop offset="0.737" stop-color="#00ff00"/><stop offset="0.955" stop-color="#05ff00"/><stop offset="1" stop-color="#15ff00"/></linearGradient><linearGradient id="c54" gradientUnits="userSpaceOnUse" x1="1229" x2="1498" y1="0" y2="0"><stop offset="0" stop-color="#00ff2e"/><stop offset="0.736" stop-color="#00ff00"/><stop offset="0.937" stop-color="#04ff00"/><stop offset="1" stop-color="#1aff00"/></linearGradient><linearGradient id="c55" gradientUnits="userSpaceOnUse" x1="1229" x2="1500" y1="0" y2="0"><stop offset="0" stop-color="#00ff2f"/><stop offset="0.745" stop-color="#00ff00"/><stop offset="0.93" stop-color="#04ff00"/><stop offset="1" stop-color="#1eff00"/></linearGradient><linearGradient id="c56" gradientUnits="userSpaceOnUse" x1="1229" x2="1503" y1="0" y2="0"><stop offset="0" stop-color="#00ff30"/><stop offset="0.745" stop-color="#00ff00"/><stop offset="0.92" stop-color="#05ff00"/><stop offset="1" stop-color="#24ff00"/></linearGradient><linearGradient id="c57" gradientUnits="userSpaceOnUse" x1="1229" x2="1506" y1="0" y2="0"><stop offset="0" stop-color="#00ff31"/><stop offset="0.751" stop-color="#00ff00"/><stop offset="0.903" stop-color="#04ff00"/><stop offset="1" stop-color="#29ff00"/></linearGradient><linearGradient id="c58" gradientUnits="userSpaceOnUse" x1="1228" x2="1508" y1="0" y2="0"><stop offset="0" stop-color="#00ff32"/><stop offset="0.757" stop-color="#00ff00"/><stop offset="0.893" stop-color="#03ff00"/><stop offset="1" stop-color="#2dff00"/></linearGradient><linearGradient id="c59" gradientUnits="userSpaceOnUse" x1="1228" x2="1511" y1="0" y2="0"><stop offset="0" stop-color="#00ff34"/><stop offset="0.763" stop-color="#00ff00"/><stop offset="0.883" stop-color="#04ff00"/><stop offset="1" stop-color="#33ff00"/></linearGradient><linearGradient id="c60" gradientUnits="userSpaceOnUse" x1="1228" x2="1514" y1="0" y2="0"><stop offset="0" stop-color="#00ff35"/><stop offset="0.762" stop-color="#00ff00"/><stop offset="0.874" stop-color="#05ff00"/><stop offset="1" stop-color="#39ff00"/></linearGradient><linearGradient id="c61" gradientUnits="userSpaceOnUse" x1="1228" x2="1517" y1="0" y2="0"><stop offset="0" stop-color="#00ff36"/><stop offset="0.768" stop-color="#00ff00"/><stop offset="0.858" stop-color="#04ff00"/><stop offset="1" stop-color="#3fff00"/></linearGradient><linearGradient id="c62" gradientUnits="userSpaceOnUse" x1="1228" x2="1519" y1="0" y2="0"><stop offset="0" stop-color="#00ff37"/><stop offset="0.77" stop-color="#00ff00"/><stop offset="0.852" stop-color="#05ff00"/><stop offset="1" stop-color="#43ff00"/></linearGradient><linearGradient id="c63" gradientUnits="userSpaceOnUse" x1="1228" x2="1522" y1="0" y2="0"><stop offset="0" stop-color="#00ff38"/><stop offset="0.776" stop-color="#00ff00"/><stop offset="0.844" stop-color="#06ff00"/><stop offset="1" stop-color="#4aff00"/></linearGradient><linearGradient id="c64" gradientUnits="userSpaceOnUse" x1="1228" x2="1525" y1="0" y2="0"><stop offset="0" stop-color="#00ff39"/><stop offset="0.781" stop-color="#00ff00"/><stop offset="0.835" stop-color="#07ff00"/><stop offset="1" stop-color="#50ff00"/></linearGradient><linearGradient id="c65" gradientUnits="userSpaceOnUse" x1="1229" x2="1527" y1="0" y2="0"><stop offset="0" stop-color="#00ff3a"/><stop offset="0.785" stop-color="#00ff00"/><stop offset="0.832" stop-color="#09ff00"/><stop offset="1" stop-color="#55ff00"/></linearGradient><linearGradient id="c66" gradientUnits="userSpaceOnUse" x1="1229" x2="1530" y1="0" y2="0"><stop offset="0" stop-color="#00ff3b"/><stop offset="0.784" stop-color="#00ff00"/><stop offset="0.864" stop-color="#1cff00"/><stop offset="1" stop-color="#5cff00"/></linearGradient><linearGradient id="c67" gradientUnits="userSpaceOnUse" x1="1229" x2="1533" y1="0" y2="0"><stop offset="0" stop-color="#00ff3d"/><stop offset="0.789" stop-color="#00ff00"/><stop offset="1" stop-color="#63ff00"/></linearGradient><linearGradient id="c68" gradientUnits="userSpaceOnUse" x1="1229" x2="1535" y1="0" y2="0"><stop offset="0" stop-color="#00ff3e"/><stop offset="0.791" stop-color="#04ff00"/><stop offset="1" stop-color="#68ff00"/></linearGradient><linearGradient id="c69" gradientUnits="userSpaceOnUse" x1="1229" x2="1538" y1="0" y2="0"><stop offset="0" stop-color="#00ff3f"/><stop offset="0.783" stop-color="#05ff00"/><stop offset="1" stop-color="#6fff00"/></linearGradient><linearGradient id="c70" gradientUnits="userSpaceOnUse" x1="1229" x2="1541" y1="0" y2="0"><stop offset="0" stop-color="#00ff40"/><stop offset="0.769" stop-color="#03ff00"/><stop offset="1" stop-color="#77ff00"/></linearGradient><linearGradient id="c71" gradientUnits="userSpaceOnUse" x1="1229" x2="1543" y1="0" y2="0"><stop offset="0" stop-color="#00ff42"/><stop offset="0.764" stop-color="#04ff00"/><stop offset="1" stop-color="#7cff00"/></linearGradient><linearGradient id="c72" gradientUnits="userSpaceOnUse" x1="1229" x2="1546" y1="0" y2="0"><stop offset="0" stop-color="#00ff43"/><stop offset="0.738" stop-color="#00ff01"/><stop offset="0.959" stop-color="#6cff00"/><stop offset="1" stop-color="#84ff00"/></linearGradient><linearGradient id="c73" gradientUnits="userSpaceOnUse" x1="1229" x2="1548" y1="0" y2="0"><stop offset="0" stop-color="#00ff44"/><stop offset="0.727" stop-color="#00ff03"/><stop offset="0.865" stop-color="#3eff00"/><stop offset="1" stop-color="#8aff00"/></linearGradient><linearGradient id="c74" gradientUnits="userSpaceOnUse" x1="1229" x2="1551" y1="0" y2="0"><stop offset="0" stop-color="#00ff46"/><stop offset="0.72" stop-color="#00ff04"/><stop offset="0.913" stop-color="#5fff00"/><stop offset="1" stop-color="#92ff00"/></linearGradient><linearGradient id="c75" gradientUnits="userSpaceOnUse" x1="1229" x2="1554" y1="0" y2="0"><stop offset="0" stop-color="#00ff47"/><stop offset="0.714" stop-color="#00ff06"/><stop offset="0.929" stop-color="#6fff00"/><stop offset="1" stop-color="#9bff00"/></linearGradient><linearGradient id="c76" gradientUnits="userSpaceOnUse" x1="1229" x2="1556" y1="0" y2="0"><stop offset="0" stop-color="#00ff48"/><stop offset="0.703" stop-color="#00ff08"/><stop offset="0.856" stop-color="#4aff00"/><stop offset="1" stop-color="#a1ff00"/></linearGradient><linearGradient id="c77" gradientUnits="userSpaceOnUse" x1="1230" x2="1559" y1="0" y2="0"><stop offset="0" stop-color="#00ff49"/><stop offset="0.699" stop-color="#00ff09"/><stop offset="0.857" stop-color="#51ff00"/><stop offset="1" stop-color="#aaff00"/></linearGradient><linearGradient id="c78" gradientUnits="userSpaceOnUse" x1="1230" x2="1562" y1="0" y2="0"><stop offset="0" stop-color="#00ff4b"/><stop offset="0.693" stop-color="#00ff0a"/><stop offset="0.843" stop-color="#4fff00"/><stop offset="1" stop-color="#b3ff00"/></linearGradient><linearGradient id="c79" gradientUnits="userSpaceOnUse" x1="1230" x2="1564" y1="0" y2="0"><stop offset="0" stop-color="#00ff4c"/><stop offset="0.683" stop-color="#00ff0c"/><stop offset="0.838" stop-color="#51ff00"/><stop offset="1" stop-color="#bbff00"/></linearGradient><linearGradient id="c80" gradientUnits="userSpaceOnUse" x1="1230" x2="1567" y1="0" y2="0"><stop offset="0" stop-color="#00ff4d"/><stop offset="0.677" stop-color="#00ff0e"/><stop offset="0.831" stop-color="#53ff00"/><stop offset="1" stop-color="#c4ff00"/></linearGradient><linearGradient id="c81" gradientUnits="userSpaceOnUse" x1="1230" x2="1570" y1="0" y2="0"><stop offset="0" stop-color="#00ff4f"/><stop offset="0.671" stop-color="#00ff0f"/><stop offset="0.835" stop-color="#5cff00"/><stop offset="1" stop-color="#ceff00"/></linearGradient><linearGradient id="c82" gradientUnits="userSpaceOnUse" x1="1230" x2="1572" y1="0" y2="0"><stop offset="0" stop-color="#00ff50"/><stop offset="0.667" stop-color="#00ff11"/><stop offset="0.836" stop-color="#62ff00"/><stop offset="1" stop-color="#d6ff00"/></linearGradient><linearGradient id="c83" gradientUnits="userSpaceOnUse" x1="1230" x2="1575" y1="0" y2="0"><stop offset="0" stop-color="#00ff52"/><stop offset="0.655" stop-color="#00ff13"/><stop offset="0.835" stop-color="#68ff00"/><stop offset="1" stop-color="#e0ff00"/></linearGradient><linearGradient id="c84" gradientUnits="userSpaceOnUse" x1="1231" x2="1577" y1="0" y2="0"><stop offset="0" stop-color="#00ff53"/><stop offset="0.653" stop-color="#01ff14"/><stop offset="0.838" stop-color="#70ff00"/><stop offset="1" stop-color="#e9ff00"/></linearGradient><linearGradient id="c85" gradientUnits="userSpaceOnUse" x1="1231" x2="1580" y1="0" y2="0"><stop offset="0" stop-color="#00ff54"/><stop offset="0.648" stop-color="#02ff16"/><stop offset="0.837" stop-color="#76ff00"/><stop offset="1" stop-color="#f4ff00"/></linearGradient><linearGradient id="c86" gradientUnits="userSpaceOnUse" x1="1231" x2="1583" y1="0" y2="0"><stop offset="0" stop-color="#00ff56"/><stop offset="0.636" stop-color="#00ff18"/><stop offset="0.841" stop-color="#80ff00"/><stop offset="1" stop-color="#ffff00"/></linearGradient><linearGradient id="c87" gradientUnits="userSpaceOnUse" x1="1231" x2="1585" y1="0" y2="0"><stop offset="0" stop-color="#00ff57"/><stop offset="0.633" stop-color="#01ff19"/><stop offset="0.842" stop-color="#87ff00"/><stop offset="0.994" stop-color="#fffb00"/><stop offset="1" stop-color="#fff600"/></linearGradient><linearGradient id="c88" gradientUnits="userSpaceOnUse" x1="1231" x2="1588" y1="0" y2="0"><stop offset="0" stop-color="#00ff59"/><stop offset="0.627" stop-color="#02ff1b"/><stop offset="0.84" stop-color="#8eff00"/><stop offset="0.98" stop-color="#fffc00"/><stop offset="1" stop-color="#ffeb00"/></linearGradient><linearGradient id="c89" gradientUnits="userSpaceOnUse" x1="1232" x2="1591" y1="0" y2="0"><stop offset="0" stop-color="#00ff5a"/><stop offset="0.618" stop-color="#02ff1d"/><stop offset="0.83" stop-color="#8eff00"/><stop offset="0.969" stop-color="#fffb00"/><stop offset="1" stop-color="#ffe100"/></linearGradient><linearGradient id="c90" gradientUnits="userSpaceOnUse" x1="1232" x2="1593" y1="0" y2="0"><stop offset="0" stop-color="#00ff5c"/><stop offset="0.615" stop-color="#03ff1f"/><stop offset="0.825" stop-color="#91ff00"/><stop offset="0.958" stop-color="#fffc00"/><stop offset="1" stop-color="#ffd900"/></linearGradient><linearGradient id="c91" gradientUnits="userSpaceOnUse" x1="1232" x2="1596" y1="0" y2="0"><stop offset="0" stop-color="#00ff5d"/><stop offset="0.61" stop-color="#04ff20"/><stop offset="0.813" stop-color="#8fff00"/><stop offset="0.945" stop-color="#fffd00"/><stop offset="1" stop-color="#ffd000"/></linearGradient><linearGradient id="c92" gradientUnits="userSpaceOnUse" x1="1232" x2="1598" y1="0" y2="0"><stop offset="0" stop-color="#00ff5f"/><stop offset="0.601" stop-color="#02ff23"/><stop offset="0.803" stop-color="#8eff03"/><stop offset="0.934" stop-color="#fffe00"/><stop offset="1" stop-color="#ffc900"/></linearGradient><linearGradient id="c93" gradientUnits="userSpaceOnUse" x1="1232" x2="1601" y1="0" y2="0"><stop offset="0" stop-color="#00ff61"/><stop offset="0.596" stop-color="#03ff25"/><stop offset="0.797" stop-color="#90ff04"/><stop offset="0.927" stop-color="#fffa00"/><stop offset="1" stop-color="#ffc100"/></linearGradient><linearGradient id="c94" gradientUnits="userSpaceOnUse" x1="1233" x2="1604" y1="0" y2="0"><stop offset="0" stop-color="#00ff62"/><stop offset="0.588" stop-color="#03ff27"/><stop offset="0.787" stop-color="#91ff07"/><stop offset="0.911" stop-color="#fffd00"/><stop offset="1" stop-color="#ffb900"/></linearGradient><linearGradient id="c95" gradientUnits="userSpaceOnUse" x1="1233" x2="1606" y1="0" y2="0"><stop offset="0" stop-color="#00ff64"/><stop offset="0.584" stop-color="#04ff29"/><stop offset="0.777" stop-color="#8fff09"/><stop offset="0.879" stop-color="#eaff00"/><stop offset="0.906" stop-color="#fff900"/><stop offset="1" stop-color="#ffb200"/></linearGradient><linearGradient id="c96" gradientUnits="userSpaceOnUse" x1="1233" x2="1609" y1="0" y2="0"><stop offset="0" stop-color="#00ff65"/><stop offset="0.574" stop-color="#02ff2b"/><stop offset="0.766" stop-color="#8dff0c"/><stop offset="0.872" stop-color="#eeff00"/><stop offset="0.894" stop-color="#fffa00"/><stop offset="0.989" stop-color="#ffb100"/><stop offset="1" stop-color="#ffab00"/></linearGradient><linearGradient id="c97" gradientUnits="userSpaceOnUse" x1="1233" x2="1611" y1="0" y2="0"><stop offset="0" stop-color="#00ff67"/><stop offset="0.571" stop-color="#03ff2d"/><stop offset="0.762" stop-color="#90ff0e"/><stop offset="0.873" stop-color="#f8ff00"/><stop offset="0.905" stop-color="#ffe700"/><stop offset="1" stop-color="#ffa500"/></linearGradient><linearGradient id="c98" gradientUnits="userSpaceOnUse" x1="1234" x2="1614" y1="0" y2="0"><stop offset="0" stop-color="#00ff69"/><stop offset="0.563" stop-color="#03ff2f"/><stop offset="0.753" stop-color="#91ff10"/><stop offset="0.868" stop-color="#ffff00"/><stop offset="0.963" stop-color="#ffb300"/><stop offset="1" stop-color="#ff9e00"/></linearGradient><linearGradient id="c99" gradientUnits="userSpaceOnUse" x1="1234" x2="1617" y1="0" y2="0"><stop offset="0" stop-color="#00ff6a"/><stop offset="0.559" stop-color="#04ff31"/><stop offset="0.742" stop-color="#8fff13"/><stop offset="0.862" stop-color="#fffb00"/><stop offset="0.956" stop-color="#ffb000"/><stop offset="1" stop-color="#ff9800"/></linearGradient><linearGradient id="c100" gradientUnits="userSpaceOnUse" x1="1234" x2="1619" y1="0" y2="0"><stop offset="0" stop-color="#00ff6c"/><stop offset="0.551" stop-color="#02ff34"/><stop offset="0.732" stop-color="#8dff16"/><stop offset="0.852" stop-color="#fffc00"/><stop offset="0.94" stop-color="#ffb400"/><stop offset="1" stop-color="#ff9300"/></linearGradient><linearGradient id="c101" gradientUnits="userSpaceOnUse" x1="1235" x2="1622" y1="0" y2="0"><stop offset="0" stop-color="#00ff6e"/><stop offset="0.548" stop-color="#05ff36"/><stop offset="0.729" stop-color="#93ff18"/><stop offset="0.842" stop-color="#fffa00"/><stop offset="0.93" stop-color="#ffb200"/><stop offset="1" stop-color="#ff8d00"/></linearGradient><linearGradient id="c102" gradientUnits="userSpaceOnUse" x1="1235" x2="1624" y1="0" y2="0"><stop offset="0" stop-color="#00ff70"/><stop offset="0.54" stop-color="#03ff38"/><stop offset="0.72" stop-color="#91ff1b"/><stop offset="0.833" stop-color="#fffb03"/><stop offset="0.92" stop-color="#ffb300"/><stop offset="1" stop-color="#ff8800"/></linearGradient><linearGradient id="c103" gradientUnits="userSpaceOnUse" x1="1235" x2="1627" y1="0" y2="0"><stop offset="0" stop-color="#00ff71"/><stop offset="0.536" stop-color="#04ff3a"/><stop offset="0.709" stop-color="#8fff1e"/><stop offset="0.821" stop-color="#fffd06"/><stop offset="0.908" stop-color="#ffb300"/><stop offset="1" stop-color="#ff8200"/></linearGradient><linearGradient id="c104" gradientUnits="userSpaceOnUse" x1="1235" x2="1630" y1="0" y2="0"><stop offset="0" stop-color="#00ff73"/><stop offset="0.527" stop-color="#02ff3d"/><stop offset="0.699" stop-color="#8dff21"/><stop offset="0.81" stop-color="#fffe0a"/><stop offset="0.891" stop-color="#ffb700"/><stop offset="1" stop-color="#ff7d00"/></linearGradient><linearGradient id="c105" gradientUnits="userSpaceOnUse" x1="1236" x2="1632" y1="0" y2="0"><stop offset="0" stop-color="#00ff75"/><stop offset="0.525" stop-color="#05ff3f"/><stop offset="0.697" stop-color="#93ff23"/><stop offset="0.803" stop-color="#fffc0c"/><stop offset="0.889" stop-color="#ffb200"/><stop offset="1" stop-color="#ff7900"/></linearGradient><linearGradient id="c106" gradientUnits="userSpaceOnUse" x1="1236" x2="1635" y1="0" y2="0"><stop offset="0" stop-color="#00ff77"/><stop offset="0.516" stop-color="#03ff42"/><stop offset="0.687" stop-color="#91ff26"/><stop offset="0.792" stop-color="#fffd10"/><stop offset="0.872" stop-color="#ffb500"/><stop offset="1" stop-color="#ff7400"/></linearGradient><linearGradient id="c107" gradientUnits="userSpaceOnUse" x1="1236" x2="1637" y1="0" y2="0"><stop offset="0" stop-color="#00ff79"/><stop offset="0.514" stop-color="#04ff44"/><stop offset="0.678" stop-color="#8fff29"/><stop offset="0.783" stop-color="#ffff13"/><stop offset="0.863" stop-color="#ffb600"/><stop offset="0.988" stop-color="#ff7400"/><stop offset="1" stop-color="#ff7000"/></linearGradient><linearGradient id="c108" gradientUnits="userSpaceOnUse" x1="1237" x2="1640" y1="0" y2="0"><stop offset="0" stop-color="#00ff7b"/><stop offset="0.506" stop-color="#03ff47"/><stop offset="0.67" stop-color="#90ff2c"/><stop offset="0.774" stop-color="#fffd16"/><stop offset="0.854" stop-color="#ffb401"/><stop offset="0.978" stop-color="#ff7300"/><stop offset="1" stop-color="#ff6b00"/></linearGradient><linearGradient id="c109" gradientUnits="userSpaceOnUse" x1="1237" x2="1643" y1="0" y2="0"><stop offset="0" stop-color="#00ff7d"/><stop offset="0.502" stop-color="#05ff49"/><stop offset="0.665" stop-color="#93ff2e"/><stop offset="0.764" stop-color="#fffe19"/><stop offset="0.842" stop-color="#ffb504"/><stop offset="0.966" stop-color="#ff7300"/><stop offset="1" stop-color="#ff6600"/></linearGradient><linearGradient id="c110" gradientUnits="userSpaceOnUse" x1="1237" x2="1645" y1="0" y2="0"><stop offset="0" stop-color="#00ff7f"/><stop offset="0.495" stop-color="#02ff4c"/><stop offset="0.652" stop-color="#8cff32"/><stop offset="0.755" stop-color="#ffff1d"/><stop offset="0.833" stop-color="#ffb507"/><stop offset="0.951" stop-color="#ff7500"/><stop offset="1" stop-color="#ff6300"/></linearGradient><linearGradient id="c111" gradientUnits="userSpaceOnUse" x1="1238" x2="1648" y1="0" y2="0"><stop offset="0" stop-color="#00ff80"/><stop offset="0.488" stop-color="#02ff4f"/><stop offset="0.644" stop-color="#8dff35"/><stop offset="0.746" stop-color="#fffe20"/><stop offset="0.824" stop-color="#ffb309"/><stop offset="0.922" stop-color="#ff7c00"/><stop offset="1" stop-color="#ff5f00"/></linearGradient><linearGradient id="c112" gradientUnits="userSpaceOnUse" x1="1238" x2="1650" y1="0" y2="0"><stop offset="0" stop-color="#00ff83"/><stop offset="0.485" stop-color="#03ff51"/><stop offset="0.641" stop-color="#90ff38"/><stop offset="0.738" stop-color="#ffff24"/><stop offset="0.816" stop-color="#ffb40b"/><stop offset="0.917" stop-color="#ff7a00"/><stop offset="1" stop-color="#ff5b00"/></linearGradient><linearGradient id="c113" gradientUnits="userSpaceOnUse" x1="1238" x2="1653" y1="0" y2="0"><stop offset="0" stop-color="#00ff85"/><stop offset="0.482" stop-color="#05ff54"/><stop offset="0.636" stop-color="#93ff3a"/><stop offset="0.733" stop-color="#fffa25"/><stop offset="0.81" stop-color="#ffb00d"/><stop offset="0.911" stop-color="#ff7700"/><stop offset="1" stop-color="#ff5700"/></linearGradient><linearGradient id="c114" gradientUnits="userSpaceOnUse" x1="1239" x2="1656" y1="0" y2="0"><stop offset="0" stop-color="#00ff87"/><stop offset="0.475" stop-color="#04ff57"/><stop offset="0.624" stop-color="#8fff3e"/><stop offset="0.719" stop-color="#fffe2a"/><stop offset="0.791" stop-color="#ffb612"/><stop offset="0.902" stop-color="#ff7600"/><stop offset="1" stop-color="#ff5300"/></linearGradient><linearGradient id="c115" gradientUnits="userSpaceOnUse" x1="1239" x2="1658" y1="0" y2="0"><stop offset="0" stop-color="#00ff89"/><stop offset="0.468" stop-color="#02ff5a"/><stop offset="0.616" stop-color="#8dff42"/><stop offset="0.711" stop-color="#feff2e"/><stop offset="0.788" stop-color="#ffb313"/><stop offset="0.902" stop-color="#ff7200"/><stop offset="1" stop-color="#ff5000"/></linearGradient><linearGradient id="c116" gradientUnits="userSpaceOnUse" x1="1239" x2="1661" y1="0" y2="0"><stop offset="0" stop-color="#00ff8b"/><stop offset="0.464" stop-color="#03ff5c"/><stop offset="0.611" stop-color="#90ff45"/><stop offset="0.706" stop-color="#fffb30"/><stop offset="0.777" stop-color="#ffb316"/><stop offset="0.886" stop-color="#ff7400"/><stop offset="1" stop-color="#ff4d00"/></linearGradient><linearGradient id="c117" gradientUnits="userSpaceOnUse" x1="1240" x2="1664" y1="0" y2="0"><stop offset="0" stop-color="#00ff8d"/><stop offset="0.458" stop-color="#03ff5f"/><stop offset="0.604" stop-color="#91ff48"/><stop offset="0.693" stop-color="#ffff36"/><stop offset="0.764" stop-color="#ffb51a"/><stop offset="0.873" stop-color="#ff7401"/><stop offset="1" stop-color="#ff4900"/></linearGradient><linearGradient id="c118" gradientUnits="userSpaceOnUse" x1="1240" x2="1666" y1="0" y2="0"><stop offset="0" stop-color="#00ff8f"/><stop offset="0.455" stop-color="#04ff62"/><stop offset="0.596" stop-color="#8fff4c"/><stop offset="0.69" stop-color="#fffa37"/><stop offset="0.761" stop-color="#ffb21b"/><stop offset="0.869" stop-color="#ff7203"/><stop offset="1" stop-color="#ff4600"/></linearGradient><linearGradient id="c119" gradientUnits="userSpaceOnUse" x1="1240" x2="1669" y1="0" y2="0"><stop offset="0" stop-color="#00ff92"/><stop offset="0.448" stop-color="#02ff66"/><stop offset="0.587" stop-color="#8dff4f"/><stop offset="0.681" stop-color="#fffb3c"/><stop offset="0.751" stop-color="#ffb21e"/><stop offset="0.858" stop-color="#ff7205"/><stop offset="1" stop-color="#ff4300"/></linearGradient><linearGradient id="c120" gradientUnits="userSpaceOnUse" x1="1241" x2="1671" y1="0" y2="0"><stop offset="0" stop-color="#00ff94"/><stop offset="0.442" stop-color="#01ff69"/><stop offset="0.581" stop-color="#8dff53"/><stop offset="0.67" stop-color="#feff41"/><stop offset="0.74" stop-color="#ffb422"/><stop offset="0.842" stop-color="#ff7508"/><stop offset="0.967" stop-color="#ff4800"/><stop offset="1" stop-color="#ff4000"/></linearGradient><linearGradient id="c121" gradientUnits="userSpaceOnUse" x1="1241" x2="1674" y1="0" y2="0"><stop offset="0" stop-color="#00ff96"/><stop offset="0.439" stop-color="#03ff6c"/><stop offset="0.577" stop-color="#91ff56"/><stop offset="0.665" stop-color="#fffb43"/><stop offset="0.734" stop-color="#ffb124"/><stop offset="0.841" stop-color="#ff7008"/><stop offset="0.961" stop-color="#ff4700"/><stop offset="1" stop-color="#ff3d00"/></linearGradient><linearGradient id="c122" gradientUnits="userSpaceOnUse" x1="1241" x2="1677" y1="0" y2="0"><stop offset="0" stop-color="#00ff98"/><stop offset="0.436" stop-color="#04ff6f"/><stop offset="0.569" stop-color="#8fff5a"/><stop offset="0.656" stop-color="#fffc48"/><stop offset="0.72" stop-color="#ffb529"/><stop offset="0.821" stop-color="#ff740c"/><stop offset="0.94" stop-color="#ff4900"/><stop offset="1" stop-color="#ff3a00"/></linearGradient><linearGradient id="c123" gradientUnits="userSpaceOnUse" x1="1242" x2="1679" y1="0" y2="0"><stop offset="0" stop-color="#00ff9b"/><stop offset="0.43" stop-color="#04ff72"/><stop offset="0.563" stop-color="#8fff5d"/><stop offset="0.65" stop-color="#fffa4b"/><stop offset="0.714" stop-color="#ffb32b"/><stop offset="0.815" stop-color="#ff730e"/><stop offset="0.938" stop-color="#ff4700"/><stop offset="1" stop-color="#ff3800"/></linearGradient><linearGradient id="c124" gradientUnits="userSpaceOnUse" x1="1242" x2="1682" y1="0" y2="0"><stop offset="0" stop-color="#00ff9d"/><stop offset="0.423" stop-color="#01ff76"/><stop offset="0.555" stop-color="#8dff61"/><stop offset="0.641" stop-color="#fffc50"/><stop offset="0.705" stop-color="#ffb42e"/><stop offset="0.805" stop-color="#ff7310"/><stop offset="0.936" stop-color="#ff4400"/><stop offset="1" stop-color="#ff3500"/></linearGradient><linearGradient id="c125" gradientUnits="userSpaceOnUse" x1="1243" x2="1684" y1="0" y2="0"><stop offset="0" stop-color="#00ffa0"/><stop offset="0.422" stop-color="#05ff78"/><stop offset="0.549" stop-color="#8eff65"/><stop offset="0.635" stop-color="#fffa53"/><stop offset="0.698" stop-color="#ffb231"/><stop offset="0.798" stop-color="#ff7112"/><stop offset="0.934" stop-color="#ff4100"/><stop offset="1" stop-color="#ff3200"/></linearGradient><linearGradient id="c126" gradientUnits="userSpaceOnUse" x1="1243" x2="1687" y1="0" y2="0"><stop offset="0" stop-color="#00ffa2"/><stop offset="0.414" stop-color="#02ff7c"/><stop offset="0.541" stop-color="#8cff69"/><stop offset="0.626" stop-color="#fffb58"/><stop offset="0.689" stop-color="#ffb234"/><stop offset="0.788" stop-color="#ff7115"/><stop offset="0.937" stop-color="#ff3d00"/><stop offset="1" stop-color="#ff2f00"/></linearGradient><linearGradient id="c127" gradientUnits="userSpaceOnUse" x1="1243" x2="1690" y1="0" y2="0"><stop offset="0" stop-color="#00ffa5"/><stop offset="0.412" stop-color="#03ff7f"/><stop offset="0.537" stop-color="#8fff6d"/><stop offset="0.617" stop-color="#fffd5d"/><stop offset="0.68" stop-color="#ffb338"/><stop offset="0.774" stop-color="#ff7318"/><stop offset="0.931" stop-color="#ff3c00"/><stop offset="1" stop-color="#ff2d00"/></linearGradient><linearGradient id="c128" gradientUnits="userSpaceOnUse" x1="1244" x2="1692" y1="0" y2="0"><stop offset="0" stop-color="#00ffa7"/><stop offset="0.406" stop-color="#03ff83"/><stop offset="0.531" stop-color="#90ff71"/><stop offset="0.612" stop-color="#fffb60"/><stop offset="0.674" stop-color="#ffb13a"/><stop offset="0.768" stop-color="#ff721a"/><stop offset="0.924" stop-color="#ff3b00"/><stop offset="1" stop-color="#ff2b00"/></linearGradient><linearGradient id="c129" gradientUnits="userSpaceOnUse" x1="1244" x2="1695" y1="0" y2="0"><stop offset="0" stop-color="#00ffaa"/><stop offset="0.404" stop-color="#05ff86"/><stop offset="0.523" stop-color="#8eff75"/><stop offset="0.603" stop-color="#fffc66"/><stop offset="0.665" stop-color="#ffb13e"/><stop offset="0.758" stop-color="#ff711c"/><stop offset="0.914" stop-color="#ff3a00"/><stop offset="1" stop-color="#ff2800"/></linearGradient><linearGradient id="c130" gradientUnits="userSpaceOnUse" x1="1244" x2="1697" y1="0" y2="0"><stop offset="0" stop-color="#00ffad"/><stop offset="0.397" stop-color="#02ff8a"/><stop offset="0.517" stop-color="#8cff7a"/><stop offset="0.596" stop-color="#fffd6b"/><stop offset="0.653" stop-color="#ffb644"/><stop offset="0.742" stop-color="#ff7621"/><stop offset="0.887" stop-color="#ff3e03"/><stop offset="1" stop-color="#ff2600"/></linearGradient><linearGradient id="c131" gradientUnits="userSpaceOnUse" x1="1245" x2="1700" y1="0" y2="0"><stop offset="0" stop-color="#00ffaf"/><stop offset="0.391" stop-color="#01ff8e"/><stop offset="0.51" stop-color="#8cff7e"/><stop offset="0.589" stop-color="#fffb6f"/><stop offset="0.646" stop-color="#ffb447"/><stop offset="0.734" stop-color="#ff7423"/><stop offset="0.879" stop-color="#ff3d04"/><stop offset="1" stop-color="#ff2400"/></linearGradient><linearGradient id="c132" gradientUnits="userSpaceOnUse" x1="1245" x2="1703" y1="0" y2="0"><stop offset="0" stop-color="#00ffb2"/><stop offset="0.389" stop-color="#03ff92"/><stop offset="0.507" stop-color="#90ff82"/><stop offset="0.581" stop-color="#fffd74"/><stop offset="0.638" stop-color="#ffb44b"/><stop offset="0.725" stop-color="#ff7426"/><stop offset="0.869" stop-color="#ff3d06"/><stop offset="1" stop-color="#ff2100"/></linearGradient><linearGradient id="c133" gradientUnits="userSpaceOnUse" x1="1246" x2="1705" y1="0" y2="0"><stop offset="0" stop-color="#00ffb5"/><stop offset="0.383" stop-color="#02ff96"/><stop offset="0.497" stop-color="#8bff87"/><stop offset="0.575" stop-color="#fffb78"/><stop offset="0.632" stop-color="#ffb24d"/><stop offset="0.719" stop-color="#ff7328"/><stop offset="0.863" stop-color="#ff3c07"/><stop offset="1" stop-color="#ff1f00"/></linearGradient><linearGradient id="c134" gradientUnits="userSpaceOnUse" x1="1246" x2="1708" y1="0" y2="0"><stop offset="0" stop-color="#00ffb8"/><stop offset="0.381" stop-color="#04ff9a"/><stop offset="0.494" stop-color="#8fff8b"/><stop offset="0.567" stop-color="#fffc7e"/><stop offset="0.623" stop-color="#ffb351"/><stop offset="0.71" stop-color="#ff722a"/><stop offset="0.853" stop-color="#ff3b09"/><stop offset="0.996" stop-color="#ff1e00"/><stop offset="1" stop-color="#ff1d00"/></linearGradient><linearGradient id="c135" gradientUnits="userSpaceOnUse" x1="1247" x2="1710" y1="0" y2="0"><stop offset="0" stop-color="#00ffba"/><stop offset="0.376" stop-color="#03ff9e"/><stop offset="0.488" stop-color="#8fff90"/><stop offset="0.562" stop-color="#fffa81"/><stop offset="0.618" stop-color="#ffb154"/><stop offset="0.704" stop-color="#ff712c"/><stop offset="0.847" stop-color="#ff3a0a"/><stop offset="0.985" stop-color="#ff1d00"/><stop offset="1" stop-color="#ff1b00"/></linearGradient><linearGradient id="c136" gradientUnits="userSpaceOnUse" x1="1247" x2="1713" y1="0" y2="0"><stop offset="0" stop-color="#00ffbd"/><stop offset="0.373" stop-color="#05ffa2"/><stop offset="0.485" stop-color="#93ff94"/><stop offset="0.554" stop-color="#fffc88"/><stop offset="0.609" stop-color="#ffb158"/><stop offset="0.695" stop-color="#ff712f"/><stop offset="0.837" stop-color="#ff3a0c"/><stop offset="0.979" stop-color="#ff1c00"/><stop offset="1" stop-color="#ff1900"/></linearGradient><linearGradient id="c137" gradientUnits="userSpaceOnUse" x1="1247" x2="1716" y1="0" y2="0"><stop offset="0" stop-color="#00ffc0"/><stop offset="0.367" stop-color="#02ffa6"/><stop offset="0.473" stop-color="#8bff9a"/><stop offset="0.546" stop-color="#fffd8e"/><stop offset="0.597" stop-color="#ffb660"/><stop offset="0.678" stop-color="#ff7535"/><stop offset="0.81" stop-color="#ff3e11"/><stop offset="0.964" stop-color="#ff1c00"/><stop offset="1" stop-color="#ff1700"/></linearGradient><linearGradient id="c138" gradientUnits="userSpaceOnUse" x1="1248" x2="1718" y1="0" y2="0"><stop offset="0" stop-color="#00ffc3"/><stop offset="0.362" stop-color="#01ffab"/><stop offset="0.468" stop-color="#8cff9f"/><stop offset="0.54" stop-color="#fffb92"/><stop offset="0.591" stop-color="#ffb462"/><stop offset="0.672" stop-color="#ff7437"/><stop offset="0.804" stop-color="#ff3d13"/><stop offset="0.966" stop-color="#ff1a00"/><stop offset="1" stop-color="#ff1500"/></linearGradient><linearGradient id="c139" gradientUnits="userSpaceOnUse" x1="1248" x2="1721" y1="0" y2="0"><stop offset="0" stop-color="#00ffc7"/><stop offset="0.359" stop-color="#03ffaf"/><stop offset="0.465" stop-color="#90ffa3"/><stop offset="0.533" stop-color="#fffc98"/><stop offset="0.584" stop-color="#ffb567"/><stop offset="0.664" stop-color="#ff733a"/><stop offset="0.795" stop-color="#ff3c14"/><stop offset="0.964" stop-color="#ff1800"/><stop offset="1" stop-color="#ff1300"/></linearGradient><linearGradient id="c140" gradientUnits="userSpaceOnUse" x1="1249" x2="1723" y1="0" y2="0"><stop offset="0" stop-color="#00ffca"/><stop offset="0.354" stop-color="#03ffb3"/><stop offset="0.46" stop-color="#90ffa8"/><stop offset="0.527" stop-color="#fffa9c"/><stop offset="0.578" stop-color="#ffb36a"/><stop offset="0.658" stop-color="#ff723c"/><stop offset="0.789" stop-color="#ff3b16"/><stop offset="0.966" stop-color="#ff1600"/><stop offset="1" stop-color="#ff1100"/></linearGradient><linearGradient id="c141" gradientUnits="userSpaceOnUse" x1="1249" x2="1726" y1="0" y2="0"><stop offset="0" stop-color="#00ffcd"/><stop offset="0.352" stop-color="#04ffb8"/><stop offset="0.453" stop-color="#8effae"/><stop offset="0.52" stop-color="#fffca3"/><stop offset="0.57" stop-color="#ffb36f"/><stop offset="0.646" stop-color="#ff7441"/><stop offset="0.771" stop-color="#ff3d1a"/><stop offset="0.964" stop-color="#ff1400"/><stop offset="1" stop-color="#ff0f00"/></linearGradient><linearGradient id="c142" gradientUnits="userSpaceOnUse" x1="1250" x2="1729" y1="0" y2="0"><stop offset="0" stop-color="#00ffd0"/><stop offset="0.347" stop-color="#04ffbc"/><stop offset="0.447" stop-color="#8fffb3"/><stop offset="0.509" stop-color="#fcffac"/><stop offset="0.564" stop-color="#ffb172"/><stop offset="0.643" stop-color="#ff7042"/><stop offset="0.772" stop-color="#ff3919"/><stop offset="0.965" stop-color="#ff1200"/><stop offset="1" stop-color="#ff0e00"/></linearGradient><linearGradient id="c143" gradientUnits="userSpaceOnUse" x1="1250" x2="1731" y1="0" y2="0"><stop offset="0" stop-color="#00ffd4"/><stop offset="0.341" stop-color="#00ffc1"/><stop offset="0.441" stop-color="#8cffb9"/><stop offset="0.507" stop-color="#fffbaf"/><stop offset="0.557" stop-color="#ffb177"/><stop offset="0.632" stop-color="#ff7247"/><stop offset="0.757" stop-color="#ff3b1d"/><stop offset="0.96" stop-color="#ff1100"/><stop offset="1" stop-color="#ff0c00"/></linearGradient><linearGradient id="c144" gradientUnits="userSpaceOnUse" x1="1251" x2="1734" y1="0" y2="0"><stop offset="0" stop-color="#00ffd7"/><stop offset="0.34" stop-color="#05ffc6"/><stop offset="0.435" stop-color="#8dffbe"/><stop offset="0.497" stop-color="#fdffb8"/><stop offset="0.551" stop-color="#ffaf7a"/><stop offset="0.625" stop-color="#ff7149"/><stop offset="0.749" stop-color="#ff3a1e"/><stop offset="0.961" stop-color="#ff0f00"/><stop offset="1" stop-color="#ff0a00"/></linearGradient><linearGradient id="c145" gradientUnits="userSpaceOnUse" x1="1251" x2="1737" y1="0" y2="0"><stop offset="0" stop-color="#00ffda"/><stop offset="0.333" stop-color="#02ffcb"/><stop offset="0.428" stop-color="#8affc4"/><stop offset="0.494" stop-color="#fffaba"/><stop offset="0.543" stop-color="#ffb07f"/><stop offset="0.617" stop-color="#ff704c"/><stop offset="0.741" stop-color="#ff3a20"/><stop offset="0.959" stop-color="#ff0e00"/><stop offset="1" stop-color="#ff0800"/></linearGradient><linearGradient id="c146" gradientUnits="userSpaceOnUse" x1="1252" x2="1739" y1="0" y2="0"><stop offset="0" stop-color="#00ffde"/><stop offset="0.329" stop-color="#01ffd0"/><stop offset="0.423" stop-color="#8bffca"/><stop offset="0.485" stop-color="#feffc4"/><stop offset="0.534" stop-color="#ffb386"/><stop offset="0.608" stop-color="#ff7151"/><stop offset="0.727" stop-color="#ff3b24"/><stop offset="0.945" stop-color="#ff0e00"/><stop offset="1" stop-color="#ff0700"/></linearGradient><linearGradient id="c147" gradientUnits="userSpaceOnUse" x1="1252" x2="1742" y1="0" y2="0"><stop offset="0" stop-color="#00ffe2"/><stop offset="0.327" stop-color="#03ffd5"/><stop offset="0.42" stop-color="#90ffd0"/><stop offset="0.482" stop-color="#fffac6"/><stop offset="0.527" stop-color="#ffb38b"/><stop offset="0.596" stop-color="#ff7456"/><stop offset="0.71" stop-color="#ff3d28"/><stop offset="0.918" stop-color="#ff0f02"/><stop offset="1" stop-color="#ff0500"/></linearGradient><linearGradient id="c148" gradientUnits="userSpaceOnUse" x1="1253" x2="1744" y1="0" y2="0"><stop offset="0" stop-color="#00ffe5"/><stop offset="0.322" stop-color="#02ffdb"/><stop offset="0.415" stop-color="#91ffd6"/><stop offset="0.473" stop-color="#feffd2"/><stop offset="0.517" stop-color="#ffb693"/><stop offset="0.587" stop-color="#ff755b"/><stop offset="0.701" stop-color="#ff3d2b"/><stop offset="0.908" stop-color="#ff0f04"/><stop offset="1" stop-color="#ff0400"/></linearGradient><linearGradient id="c149" gradientUnits="userSpaceOnUse" x1="1253" x2="1747" y1="0" y2="0"><stop offset="0" stop-color="#00ffe9"/><stop offset="0.32" stop-color="#04ffe0"/><stop offset="0.409" stop-color="#8effdc"/><stop offset="0.466" stop-color="#fcffd9"/><stop offset="0.514" stop-color="#ffb194"/><stop offset="0.583" stop-color="#ff725c"/><stop offset="0.696" stop-color="#ff3b2c"/><stop offset="0.903" stop-color="#ff0e05"/><stop offset="1" stop-color="#ff0200"/></linearGradient><linearGradient id="c150" gradientUnits="userSpaceOnUse" x1="1254" x2="1750" y1="0" y2="0"><stop offset="0" stop-color="#00ffed"/><stop offset="0.315" stop-color="#03ffe6"/><stop offset="0.403" stop-color="#8fffe2"/><stop offset="0.46" stop-color="#ffffe0"/><stop offset="0.504" stop-color="#ffb49c"/><stop offset="0.573" stop-color="#ff7361"/><stop offset="0.685" stop-color="#ff3b2f"/><stop offset="0.891" stop-color="#ff0e06"/><stop offset="1" stop-color="#ff0100"/></linearGradient><linearGradient id="c151" gradientUnits="userSpaceOnUse" x1="1254" x2="1752" y1="0" y2="0"><stop offset="0" stop-color="#00fff1"/><stop offset="0.309" stop-color="#00ffeb"/><stop offset="0.398" stop-color="#8cffe9"/><stop offset="0.454" stop-color="#fdffe7"/><stop offset="0.502" stop-color="#ffaf9d"/><stop offset="0.57" stop-color="#ff7062"/><stop offset="0.683" stop-color="#ff3930"/><stop offset="0.888" stop-color="#ff0d07"/><stop offset="1" stop-color="#ff0000"/></linearGradient><linearGradient id="c152" gradientUnits="userSpaceOnUse" x1="1255" x2="1755" y1="0" y2="0"><stop offset="0" stop-color="#00fff5"/><stop offset="0.308" stop-color="#05fff1"/><stop offset="0.392" stop-color="#8dfff0"/><stop offset="0.448" stop-color="#fffeee"/><stop offset="0.488" stop-color="#ffb8ab"/><stop offset="0.552" stop-color="#ff766d"/><stop offset="0.656" stop-color="#ff3f39"/><stop offset="0.844" stop-color="#ff110d"/><stop offset="1" stop-color="#ff0000"/></linearGradient><linearGradient id="c153" gradientUnits="userSpaceOnUse" x1="1255" x2="1758" y1="0" y2="0"><stop offset="0" stop-color="#00fff9"/><stop offset="0.302" stop-color="#01fff7"/><stop offset="0.386" stop-color="#8afff6"/><stop offset="0.441" stop-color="#fefff6"/><stop offset="0.485" stop-color="#ffb3ac"/><stop offset="0.549" stop-color="#ff736e"/><stop offset="0.652" stop-color="#ff3d3a"/><stop offset="0.843" stop-color="#ff0f0d"/><stop offset="1" stop-color="#ff0000"/></linearGradient><linearGradient id="c154" gradientUnits="userSpaceOnUse" x1="1256" x2="1760" y1="0" y2="0"><stop offset="0" stop-color="#00fffd"/><stop offset="0.298" stop-color="#00fffd"/><stop offset="0.381" stop-color="#8bfffd"/><stop offset="0.437" stop-color="#fffefc"/><stop offset="0.476" stop-color="#ffb6b5"/><stop offset="0.54" stop-color="#ff7474"/><stop offset="0.643" stop-color="#ff3d3d"/><stop offset="0.829" stop-color="#ff0f10"/><stop offset="1" stop-color="#ff0000"/></linearGradient><linearGradient id="c155" gradientUnits="userSpaceOnUse" x1="1256" x2="1763" y1="0" y2="0"><stop offset="0" stop-color="#00fdff"/><stop offset="0.296" stop-color="#03faff"/><stop offset="0.379" stop-color="#8df9ff"/><stop offset="0.434" stop-color="#fff6fd"/><stop offset="0.473" stop-color="#ffb1b6"/><stop offset="0.536" stop-color="#ff7175"/><stop offset="0.639" stop-color="#ff3b3e"/><stop offset="0.824" stop-color="#ff0e10"/><stop offset="0.994" stop-color="#ff0000"/><stop offset="1" stop-color="#ff0000"/></linearGradient><linearGradient id="c156" gradientUnits="userSpaceOnUse" x1="1257" x2="1765" y1="0" y2="0"><stop offset="0" stop-color="#00f8ff"/><stop offset="0.291" stop-color="#02f4ff"/><stop offset="0.374" stop-color="#8af3ff"/><stop offset="0.429" stop-color="#fcf1ff"/><stop offset="0.476" stop-color="#ffa4af"/><stop offset="0.543" stop-color="#ff676f"/><stop offset="0.654" stop-color="#ff3338"/><stop offset="0.854" stop-color="#ff080c"/><stop offset="1" stop-color="#ff0000"/></linearGradient><linearGradient id="c157" gradientUnits="userSpaceOnUse" x1="1257" x2="1768" y1="0" y2="0"><stop offset="0" stop-color="#00f4ff"/><stop offset="0.29" stop-color="#04eeff"/><stop offset="0.376" stop-color="#92ecff"/><stop offset="0.427" stop-color="#fceaff"/><stop offset="0.474" stop-color="#ffa0b0"/><stop offset="0.54" stop-color="#ff6470"/><stop offset="0.65" stop-color="#ff3139"/><stop offset="0.849" stop-color="#ff070d"/><stop offset="1" stop-color="#ff0000"/></linearGradient><linearGradient id="c158" gradientUnits="userSpaceOnUse" x1="1258" x2="1770" y1="0" y2="0"><stop offset="0" stop-color="#00f0ff"/><stop offset="0.285" stop-color="#03e9ff"/><stop offset="0.371" stop-color="#8fe5ff"/><stop offset="0.426" stop-color="#ffe2fe"/><stop offset="0.469" stop-color="#ff9db4"/><stop offset="0.535" stop-color="#ff6272"/><stop offset="0.645" stop-color="#ff2f3b"/><stop offset="0.844" stop-color="#ff060e"/><stop offset="1" stop-color="#ff0000"/></linearGradient><linearGradient id="c159" gradientUnits="userSpaceOnUse" x1="1258" x2="1773" y1="0" y2="0"><stop offset="0" stop-color="#00ecff"/><stop offset="0.283" stop-color="#05e3ff"/><stop offset="0.369" stop-color="#90dfff"/><stop offset="0.423" stop-color="#ffdbff"/><stop offset="0.466" stop-color="#ff99b5"/><stop offset="0.532" stop-color="#ff5f73"/><stop offset="0.641" stop-color="#ff2d3c"/><stop offset="0.839" stop-color="#ff050f"/><stop offset="1" stop-color="#ff0000"/></linearGradient><linearGradient id="c160" gradientUnits="userSpaceOnUse" x1="1259" x2="1776" y1="0" y2="0"><stop offset="0" stop-color="#00e8ff"/><stop offset="0.279" stop-color="#04ddff"/><stop offset="0.364" stop-color="#8dd8ff"/><stop offset="0.422" stop-color="#ffd1fb"/><stop offset="0.464" stop-color="#ff92b3"/><stop offset="0.53" stop-color="#ff5b73"/><stop offset="0.638" stop-color="#ff2b3c"/><stop offset="0.836" stop-color="#ff040f"/><stop offset="1" stop-color="#ff0000"/></linearGradient><linearGradient id="c161" gradientUnits="userSpaceOnUse" x1="1259" x2="1778" y1="0" y2="0"><stop offset="0" stop-color="#00e4ff"/><stop offset="0.274" stop-color="#01d8ff"/><stop offset="0.362" stop-color="#8ed2ff"/><stop offset="0.42" stop-color="#ffcbfc"/><stop offset="0.462" stop-color="#ff8eb4"/><stop offset="0.528" stop-color="#ff5874"/><stop offset="0.636" stop-color="#ff293d"/><stop offset="0.832" stop-color="#ff0210"/><stop offset="1" stop-color="#ff0000"/></linearGradient><linearGradient id="c162" gradientUnits="userSpaceOnUse" x1="1260" x2="1781" y1="0" y2="0"><stop offset="0" stop-color="#00e0ff"/><stop offset="0.269" stop-color="#00d3ff"/><stop offset="0.357" stop-color="#8bccff"/><stop offset="0.415" stop-color="#fdc7ff"/><stop offset="0.461" stop-color="#ff87b3"/><stop offset="0.526" stop-color="#ff5374"/><stop offset="0.637" stop-color="#ff253c"/><stop offset="0.837" stop-color="#ff000f"/><stop offset="1" stop-color="#ff0000"/></linearGradient><linearGradient id="c163" gradientUnits="userSpaceOnUse" x1="1260" x2="1784" y1="0" y2="0"><stop offset="0" stop-color="#00dcff"/><stop offset="0.267" stop-color="#02ceff"/><stop offset="0.355" stop-color="#8cc6ff"/><stop offset="0.412" stop-color="#fdc0ff"/><stop offset="0.462" stop-color="#ff7faf"/><stop offset="0.531" stop-color="#ff4c70"/><stop offset="0.645" stop-color="#ff2039"/><stop offset="0.844" stop-color="#ff000e"/><stop offset="1" stop-color="#ff0000"/></linearGradient><linearGradient id="c164" gradientUnits="userSpaceOnUse" x1="1261" x2="1786" y1="0" y2="0"><stop offset="0" stop-color="#00d8ff"/><stop offset="0.263" stop-color="#01c9ff"/><stop offset="0.354" stop-color="#90c0ff"/><stop offset="0.411" stop-color="#ffb8fd"/><stop offset="0.453" stop-color="#ff81b7"/><stop offset="0.518" stop-color="#ff4f77"/><stop offset="0.625" stop-color="#ff2340"/><stop offset="0.819" stop-color="#ff0012"/><stop offset="1" stop-color="#ff0000"/></linearGradient><linearGradient id="c165" gradientUnits="userSpaceOnUse" x1="1261" x2="1789" y1="0" y2="0"><stop offset="0" stop-color="#00d4ff"/><stop offset="0.261" stop-color="#03c4ff"/><stop offset="0.352" stop-color="#90bbff"/><stop offset="0.409" stop-color="#ffb3fe"/><stop offset="0.455" stop-color="#ff79b3"/><stop offset="0.523" stop-color="#ff4873"/><stop offset="0.636" stop-color="#ff1d3c"/><stop offset="0.822" stop-color="#ff0012"/><stop offset="1" stop-color="#ff0000"/></linearGradient><linearGradient id="c166" gradientUnits="userSpaceOnUse" x1="1262" x2="1791" y1="0" y2="0"><stop offset="0" stop-color="#00d1ff"/><stop offset="0.257" stop-color="#02bfff"/><stop offset="0.348" stop-color="#8eb5ff"/><stop offset="0.408" stop-color="#ffaafa"/><stop offset="0.454" stop-color="#ff73b1"/><stop offset="0.522" stop-color="#ff4473"/><stop offset="0.635" stop-color="#ff1b3c"/><stop offset="0.813" stop-color="#ff0013"/><stop offset="1" stop-color="#ff0000"/></linearGradient><linearGradient id="c167" gradientUnits="userSpaceOnUse" x1="1263" x2="1794" y1="0" y2="0"><stop offset="0" stop-color="#00cdff"/><stop offset="0.252" stop-color="#01baff"/><stop offset="0.343" stop-color="#8bb0ff"/><stop offset="0.403" stop-color="#ffa7ff"/><stop offset="0.448" stop-color="#ff71b5"/><stop offset="0.516" stop-color="#ff4275"/><stop offset="0.629" stop-color="#ff1a3e"/><stop offset="0.802" stop-color="#ff0015"/><stop offset="1" stop-color="#ff0000"/></linearGradient><linearGradient id="c168" gradientUnits="userSpaceOnUse" x1="1263" x2="1797" y1="0" y2="0"><stop offset="0" stop-color="#00c9ff"/><stop offset="0.251" stop-color="#03b6ff"/><stop offset="0.345" stop-color="#92aaff"/><stop offset="0.401" stop-color="#ffa2ff"/><stop offset="0.446" stop-color="#ff6db6"/><stop offset="0.513" stop-color="#ff4076"/><stop offset="0.625" stop-color="#ff183e"/><stop offset="0.79" stop-color="#ff0017"/><stop offset="1" stop-color="#ff0000"/></linearGradient><linearGradient id="c169" gradientUnits="userSpaceOnUse" x1="1264" x2="1799" y1="0" y2="0"><stop offset="0" stop-color="#00c5ff"/><stop offset="0.247" stop-color="#03b1ff"/><stop offset="0.34" stop-color="#90a5ff"/><stop offset="0.4" stop-color="#ff9afc"/><stop offset="0.445" stop-color="#ff68b4"/><stop offset="0.516" stop-color="#ff3b73"/><stop offset="0.632" stop-color="#ff143c"/><stop offset="0.781" stop-color="#ff0018"/><stop offset="1" stop-color="#ff0000"/></linearGradient><linearGradient id="c170" gradientUnits="userSpaceOnUse" x1="1264" x2="1802" y1="0" y2="0"><stop offset="0" stop-color="#00c2ff"/><stop offset="0.245" stop-color="#04acff"/><stop offset="0.338" stop-color="#90a0ff"/><stop offset="0.398" stop-color="#ff94fc"/><stop offset="0.442" stop-color="#ff64b5"/><stop offset="0.513" stop-color="#ff3874"/><stop offset="0.628" stop-color="#ff133d"/><stop offset="0.77" stop-color="#ff001a"/><stop offset="1" stop-color="#ff0000"/></linearGradient><linearGradient id="c171" gradientUnits="userSpaceOnUse" x1="1265" x2="1804" y1="0" y2="0"><stop offset="0" stop-color="#00beff"/><stop offset="0.241" stop-color="#04a8ff"/><stop offset="0.334" stop-color="#8e9bff"/><stop offset="0.393" stop-color="#fd91ff"/><stop offset="0.445" stop-color="#ff5caf"/><stop offset="0.519" stop-color="#ff316f"/><stop offset="0.642" stop-color="#ff0e38"/><stop offset="0.768" stop-color="#ff001b"/><stop offset="1" stop-color="#ff0000"/></linearGradient><linearGradient id="c172" gradientUnits="userSpaceOnUse" x1="1265" x2="1807" y1="0" y2="0"><stop offset="0" stop-color="#00bbff"/><stop offset="0.236" stop-color="#00a4ff"/><stop offset="0.332" stop-color="#8e96ff"/><stop offset="0.391" stop-color="#fd8cff"/><stop offset="0.443" stop-color="#ff58b0"/><stop offset="0.517" stop-color="#ff2f70"/><stop offset="0.638" stop-color="#ff0c39"/><stop offset="0.756" stop-color="#ff001d"/><stop offset="1" stop-color="#ff0000"/></linearGradient><linearGradient id="c173" gradientUnits="userSpaceOnUse" x1="1266" x2="1810" y1="0" y2="0"><stop offset="0" stop-color="#00b7ff"/><stop offset="0.235" stop-color="#05a0ff"/><stop offset="0.331" stop-color="#9291ff"/><stop offset="0.39" stop-color="#ff85fe"/><stop offset="0.438" stop-color="#ff56b3"/><stop offset="0.511" stop-color="#ff2d72"/><stop offset="0.632" stop-color="#ff0b3b"/><stop offset="0.746" stop-color="#ff001f"/><stop offset="1" stop-color="#ff0000"/></linearGradient><linearGradient id="c174" gradientUnits="userSpaceOnUse" x1="1267" x2="1810" y1="0" y2="0"><stop offset="0" stop-color="#00b4ff"/><stop offset="0.232" stop-color="#049cff"/><stop offset="0.328" stop-color="#908dff"/><stop offset="0.39" stop-color="#ff7efb"/><stop offset="0.438" stop-color="#ff52b2"/><stop offset="0.512" stop-color="#ff2a72"/><stop offset="0.634" stop-color="#ff093b"/><stop offset="0.751" stop-color="#ff001e"/><stop offset="1" stop-color="#ff0000"/></linearGradient><linearGradient id="c175" gradientUnits="userSpaceOnUse" x1="1267" x2="1804" y1="0" y2="0"><stop offset="0" stop-color="#00b0ff"/><stop offset="0.231" stop-color="#0198ff"/><stop offset="0.328" stop-color="#8a89ff"/><stop offset="0.395" stop-color="#ff79fb"/><stop offset="0.443" stop-color="#ff4eb3"/><stop offset="0.518" stop-color="#ff2873"/><stop offset="0.641" stop-color="#ff073c"/><stop offset="0.775" stop-color="#ff001c"/><stop offset="1" stop-color="#ff0000"/></linearGradient><linearGradient id="c176" gradientUnits="userSpaceOnUse" x1="1268" x2="1799" y1="0" y2="0"><stop offset="0" stop-color="#00adff"/><stop offset="0.234" stop-color="#0593ff"/><stop offset="0.335" stop-color="#9483ff"/><stop offset="0.395" stop-color="#ff77ff"/><stop offset="0.444" stop-color="#ff4cb6"/><stop offset="0.52" stop-color="#ff2675"/><stop offset="0.644" stop-color="#ff063d"/><stop offset="0.829" stop-color="#ff0015"/><stop offset="1" stop-color="#ff0001"/></linearGradient><linearGradient id="c177" gradientUnits="userSpaceOnUse" x1="1269" x2="1793" y1="0" y2="0"><stop offset="0" stop-color="#00a9ff"/><stop offset="0.233" stop-color="#0490ff"/><stop offset="0.336" stop-color="#917fff"/><stop offset="0.401" stop-color="#ff70fc"/><stop offset="0.45" stop-color="#ff48b4"/><stop offset="0.527" stop-color="#ff2474"/><stop offset="0.653" stop-color="#ff043d"/><stop offset="0.882" stop-color="#ff0010"/><stop offset="1" stop-color="#ff0003"/></linearGradient><linearGradient id="c178" gradientUnits="userSpaceOnUse" x1="1269" x2="1787" y1="0" y2="0"><stop offset="0" stop-color="#00a6ff"/><stop offset="0.232" stop-color="#018cff"/><stop offset="0.336" stop-color="#8c7bff"/><stop offset="0.405" stop-color="#ff6cfd"/><stop offset="0.456" stop-color="#ff44b5"/><stop offset="0.533" stop-color="#ff2175"/><stop offset="0.66" stop-color="#ff033e"/><stop offset="0.892" stop-color="#ff0011"/><stop offset="1" stop-color="#ff0005"/></linearGradient><linearGradient id="c179" gradientUnits="userSpaceOnUse" x1="1270" x2="1782" y1="0" y2="0"><stop offset="0" stop-color="#00a3ff"/><stop offset="0.234" stop-color="#0588ff"/><stop offset="0.34" stop-color="#9076ff"/><stop offset="0.406" stop-color="#fd69ff"/><stop offset="0.465" stop-color="#ff3eb0"/><stop offset="0.547" stop-color="#ff1c70"/><stop offset="0.684" stop-color="#ff003a"/><stop offset="0.934" stop-color="#ff000d"/><stop offset="1" stop-color="#ff0006"/></linearGradient><linearGradient id="c180" gradientUnits="userSpaceOnUse" x1="1270" x2="1776" y1="0" y2="0"><stop offset="0" stop-color="#009fff"/><stop offset="0.233" stop-color="#0285ff"/><stop offset="0.344" stop-color="#9072ff"/><stop offset="0.415" stop-color="#ff61fa"/><stop offset="0.47" stop-color="#ff3bb0"/><stop offset="0.553" stop-color="#ff1a71"/><stop offset="0.692" stop-color="#ff003b"/><stop offset="0.945" stop-color="#ff000e"/><stop offset="1" stop-color="#ff0008"/></linearGradient><linearGradient id="c181" gradientUnits="userSpaceOnUse" x1="1271" x2="1771" y1="0" y2="0"><stop offset="0" stop-color="#009cff"/><stop offset="0.232" stop-color="#0281ff"/><stop offset="0.344" stop-color="#8e6eff"/><stop offset="0.416" stop-color="#ff5ffe"/><stop offset="0.472" stop-color="#ff39b3"/><stop offset="0.556" stop-color="#ff1873"/><stop offset="0.696" stop-color="#ff003c"/><stop offset="0.952" stop-color="#ff000f"/><stop offset="1" stop-color="#ff0009"/></linearGradient><linearGradient id="c182" gradientUnits="userSpaceOnUse" x1="1272" x2="1765" y1="0" y2="0"><stop offset="0" stop-color="#0099ff"/><stop offset="0.231" stop-color="#017eff"/><stop offset="0.345" stop-color="#8c6bff"/><stop offset="0.422" stop-color="#ff59fb"/><stop offset="0.479" stop-color="#ff35b2"/><stop offset="0.568" stop-color="#ff1571"/><stop offset="0.698" stop-color="#ff003f"/><stop offset="0.949" stop-color="#ff0011"/><stop offset="1" stop-color="#ff000b"/></linearGradient><linearGradient id="c183" gradientUnits="userSpaceOnUse" x1="1272" x2="1759" y1="0" y2="0"><stop offset="0" stop-color="#0096ff"/><stop offset="0.234" stop-color="#037aff"/><stop offset="0.349" stop-color="#8c67ff"/><stop offset="0.427" stop-color="#ff55fb"/><stop offset="0.485" stop-color="#ff32b3"/><stop offset="0.575" stop-color="#ff1372"/><stop offset="0.698" stop-color="#ff0042"/><stop offset="0.945" stop-color="#ff0013"/><stop offset="1" stop-color="#ff000d"/></linearGradient><linearGradient id="c184" gradientUnits="userSpaceOnUse" x1="1273" x2="1754" y1="0" y2="0"><stop offset="0" stop-color="#0092ff"/><stop offset="0.233" stop-color="#0277ff"/><stop offset="0.353" stop-color="#9062ff"/><stop offset="0.428" stop-color="#ff52ff"/><stop offset="0.486" stop-color="#ff30b5"/><stop offset="0.574" stop-color="#ff1276"/><stop offset="0.694" stop-color="#ff0045"/><stop offset="0.936" stop-color="#ff0016"/><stop offset="1" stop-color="#ff000f"/></linearGradient><linearGradient id="c185" gradientUnits="userSpaceOnUse" x1="1274" x2="1748" y1="0" y2="0"><stop offset="0" stop-color="#008fff"/><stop offset="0.232" stop-color="#0174ff"/><stop offset="0.354" stop-color="#8d5fff"/><stop offset="0.435" stop-color="#ff4dfc"/><stop offset="0.494" stop-color="#ff2cb4"/><stop offset="0.586" stop-color="#ff0e73"/><stop offset="0.7" stop-color="#ff0047"/><stop offset="0.945" stop-color="#ff0017"/><stop offset="1" stop-color="#ff0011"/></linearGradient><linearGradient id="c186" gradientUnits="userSpaceOnUse" x1="1274" x2="1743" y1="0" y2="0"><stop offset="0" stop-color="#008cff"/><stop offset="0.235" stop-color="#0370ff"/><stop offset="0.358" stop-color="#8e5bff"/><stop offset="0.439" stop-color="#ff49fd"/><stop offset="0.499" stop-color="#ff29b5"/><stop offset="0.593" stop-color="#ff0c74"/><stop offset="0.699" stop-color="#ff004a"/><stop offset="0.938" stop-color="#ff001a"/><stop offset="1" stop-color="#ff0012"/></linearGradient><linearGradient id="c187" gradientUnits="userSpaceOnUse" x1="1275" x2="1737" y1="0" y2="0"><stop offset="0" stop-color="#0089ff"/><stop offset="0.234" stop-color="#026dff"/><stop offset="0.364" stop-color="#9157ff"/><stop offset="0.446" stop-color="#ff43fa"/><stop offset="0.511" stop-color="#ff24b0"/><stop offset="0.61" stop-color="#ff0870"/><stop offset="0.727" stop-color="#ff0045"/><stop offset="0.987" stop-color="#ff0016"/><stop offset="1" stop-color="#ff0014"/></linearGradient><linearGradient id="c188" gradientUnits="userSpaceOnUse" x1="1276" x2="1731" y1="0" y2="0"><stop offset="0" stop-color="#0086ff"/><stop offset="0.233" stop-color="#026aff"/><stop offset="0.365" stop-color="#8f53ff"/><stop offset="0.448" stop-color="#ff41fd"/><stop offset="0.514" stop-color="#ff22b3"/><stop offset="0.615" stop-color="#ff0772"/><stop offset="0.765" stop-color="#ff003f"/><stop offset="1" stop-color="#ff0017"/></linearGradient><linearGradient id="c189" gradientUnits="userSpaceOnUse" x1="1276" x2="1726" y1="0" y2="0"><stop offset="0" stop-color="#0083ff"/><stop offset="0.236" stop-color="#0367ff"/><stop offset="0.369" stop-color="#9050ff"/><stop offset="0.453" stop-color="#ff3dfe"/><stop offset="0.52" stop-color="#ff1fb3"/><stop offset="0.622" stop-color="#ff0572"/><stop offset="0.791" stop-color="#ff003b"/><stop offset="1" stop-color="#ff0019"/></linearGradient><linearGradient id="c190" gradientUnits="userSpaceOnUse" x1="1277" x2="1720" y1="0" y2="0"><stop offset="0" stop-color="#0080ff"/><stop offset="0.235" stop-color="#0364ff"/><stop offset="0.37" stop-color="#8d4dff"/><stop offset="0.46" stop-color="#ff38fb"/><stop offset="0.528" stop-color="#ff1cb2"/><stop offset="0.632" stop-color="#ff0372"/><stop offset="0.804" stop-color="#ff003b"/><stop offset="1" stop-color="#ff001b"/></linearGradient><linearGradient id="c191" gradientUnits="userSpaceOnUse" x1="1278" x2="1715" y1="0" y2="0"><stop offset="0" stop-color="#007dff"/><stop offset="0.233" stop-color="#0261ff"/><stop offset="0.375" stop-color="#9149ff"/><stop offset="0.462" stop-color="#ff36ff"/><stop offset="0.531" stop-color="#ff1ab5"/><stop offset="0.636" stop-color="#ff0174"/><stop offset="0.81" stop-color="#ff003d"/><stop offset="1" stop-color="#ff001d"/></linearGradient><linearGradient id="c192" gradientUnits="userSpaceOnUse" x1="1279" x2="1709" y1="0" y2="0"><stop offset="0" stop-color="#007aff"/><stop offset="0.233" stop-color="#015eff"/><stop offset="0.377" stop-color="#8f46ff"/><stop offset="0.47" stop-color="#ff31fc"/><stop offset="0.54" stop-color="#ff16b4"/><stop offset="0.647" stop-color="#ff0074"/><stop offset="0.823" stop-color="#ff003d"/><stop offset="1" stop-color="#ff001f"/></linearGradient><linearGradient id="c193" gradientUnits="userSpaceOnUse" x1="1279" x2="1703" y1="0" y2="0"><stop offset="0" stop-color="#0077ff"/><stop offset="0.236" stop-color="#035bff"/><stop offset="0.382" stop-color="#8f42ff"/><stop offset="0.476" stop-color="#ff2efc"/><stop offset="0.547" stop-color="#ff14b4"/><stop offset="0.656" stop-color="#ff0075"/><stop offset="0.835" stop-color="#ff003e"/><stop offset="1" stop-color="#ff0022"/></linearGradient><linearGradient id="c194" gradientUnits="userSpaceOnUse" x1="1280" x2="1698" y1="0" y2="0"><stop offset="0" stop-color="#0074ff"/><stop offset="0.234" stop-color="#0258ff"/><stop offset="0.383" stop-color="#8d3fff"/><stop offset="0.478" stop-color="#fe2bff"/><stop offset="0.555" stop-color="#ff11b3"/><stop offset="0.665" stop-color="#ff0074"/><stop offset="0.852" stop-color="#ff003d"/><stop offset="1" stop-color="#ff0024"/></linearGradient><linearGradient id="c195" gradientUnits="userSpaceOnUse" x1="1281" x2="1692" y1="0" y2="0"><stop offset="0" stop-color="#0071ff"/><stop offset="0.234" stop-color="#0255ff"/><stop offset="0.389" stop-color="#903bff"/><stop offset="0.487" stop-color="#ff27fd"/><stop offset="0.564" stop-color="#ff0eb2"/><stop offset="0.667" stop-color="#ff0078"/><stop offset="0.852" stop-color="#ff0040"/><stop offset="1" stop-color="#ff0026"/></linearGradient><linearGradient id="c196" gradientUnits="userSpaceOnUse" x1="1282" x2="1687" y1="0" y2="0"><stop offset="0" stop-color="#006eff"/><stop offset="0.237" stop-color="#0552ff"/><stop offset="0.395" stop-color="#9338ff"/><stop offset="0.494" stop-color="#ff22fb"/><stop offset="0.573" stop-color="#ff0bb1"/><stop offset="0.672" stop-color="#ff007a"/><stop offset="0.854" stop-color="#ff0042"/><stop offset="1" stop-color="#ff0029"/></linearGradient><linearGradient id="c197" gradientUnits="userSpaceOnUse" x1="1282" x2="1681" y1="0" y2="0"><stop offset="0" stop-color="#006cff"/><stop offset="0.236" stop-color="#0250ff"/><stop offset="0.396" stop-color="#8f35ff"/><stop offset="0.501" stop-color="#ff1ffb"/><stop offset="0.581" stop-color="#ff08b2"/><stop offset="0.692" stop-color="#ff0077"/><stop offset="0.887" stop-color="#ff003f"/><stop offset="1" stop-color="#ff002c"/></linearGradient><linearGradient id="c198" gradientUnits="userSpaceOnUse" x1="1283" x2="1675" y1="0" y2="0"><stop offset="0" stop-color="#0069ff"/><stop offset="0.235" stop-color="#024dff"/><stop offset="0.398" stop-color="#8d33ff"/><stop offset="0.505" stop-color="#ff1dfe"/><stop offset="0.587" stop-color="#ff06b4"/><stop offset="0.709" stop-color="#ff0074"/><stop offset="0.913" stop-color="#ff003d"/><stop offset="1" stop-color="#ff002e"/></linearGradient><linearGradient id="c199" gradientUnits="userSpaceOnUse" x1="1284" x2="1670" y1="0" y2="0"><stop offset="0" stop-color="#0066ff"/><stop offset="0.238" stop-color="#054aff"/><stop offset="0.409" stop-color="#952eff"/><stop offset="0.513" stop-color="#ff19fc"/><stop offset="0.596" stop-color="#ff03b3"/><stop offset="0.725" stop-color="#ff0072"/><stop offset="0.938" stop-color="#ff003b"/><stop offset="1" stop-color="#ff0031"/></linearGradient><linearGradient id="c200" gradientUnits="userSpaceOnUse" x1="1285" x2="1664" y1="0" y2="0"><stop offset="0" stop-color="#0063ff"/><stop offset="0.237" stop-color="#0547ff"/><stop offset="0.412" stop-color="#922cff"/><stop offset="0.517" stop-color="#ff16ff"/><stop offset="0.602" stop-color="#ff02b5"/><stop offset="0.734" stop-color="#ff0074"/><stop offset="0.95" stop-color="#ff003c"/><stop offset="1" stop-color="#ff0034"/></linearGradient><linearGradient id="c201" gradientUnits="userSpaceOnUse" x1="1286" x2="1659" y1="0" y2="0"><stop offset="0" stop-color="#0060ff"/><stop offset="0.236" stop-color="#0445ff"/><stop offset="0.413" stop-color="#9129ff"/><stop offset="0.525" stop-color="#ff13fc"/><stop offset="0.611" stop-color="#ff00b4"/><stop offset="0.745" stop-color="#ff0074"/><stop offset="0.965" stop-color="#ff003d"/><stop offset="1" stop-color="#ff0037"/></linearGradient><linearGradient id="c202" gradientUnits="userSpaceOnUse" x1="1286" x2="1653" y1="0" y2="0"><stop offset="0" stop-color="#005eff"/><stop offset="0.234" stop-color="#0243ff"/><stop offset="0.414" stop-color="#8c27ff"/><stop offset="0.534" stop-color="#ff0ffd"/><stop offset="0.621" stop-color="#ff00b5"/><stop offset="0.757" stop-color="#ff0074"/><stop offset="0.981" stop-color="#ff003d"/><stop offset="1" stop-color="#ff003a"/></linearGradient><linearGradient id="c203" gradientUnits="userSpaceOnUse" x1="1287" x2="1647" y1="0" y2="0"><stop offset="0" stop-color="#005bff"/><stop offset="0.239" stop-color="#0540ff"/><stop offset="0.428" stop-color="#9423ff"/><stop offset="0.544" stop-color="#ff0cfa"/><stop offset="0.639" stop-color="#ff00b0"/><stop offset="0.783" stop-color="#ff0070"/><stop offset="1" stop-color="#ff003d"/></linearGradient><linearGradient id="c204" gradientUnits="userSpaceOnUse" x1="1288" x2="1642" y1="0" y2="0"><stop offset="0" stop-color="#0058ff"/><stop offset="0.237" stop-color="#043dff"/><stop offset="0.429" stop-color="#9220ff"/><stop offset="0.548" stop-color="#ff09fe"/><stop offset="0.638" stop-color="#ff00b6"/><stop offset="0.78" stop-color="#ff0076"/><stop offset="1" stop-color="#ff0041"/></linearGradient><linearGradient id="c205" gradientUnits="userSpaceOnUse" x1="1289" x2="1636" y1="0" y2="0"><stop offset="0" stop-color="#0055ff"/><stop offset="0.236" stop-color="#043bff"/><stop offset="0.432" stop-color="#901eff"/><stop offset="0.559" stop-color="#ff06fb"/><stop offset="0.657" stop-color="#ff00b2"/><stop offset="0.807" stop-color="#ff0072"/><stop offset="1" stop-color="#ff0044"/></linearGradient><linearGradient id="c206" gradientUnits="userSpaceOnUse" x1="1290" x2="1631" y1="0" y2="0"><stop offset="0" stop-color="#0053ff"/><stop offset="0.235" stop-color="#0339ff"/><stop offset="0.434" stop-color="#8e1bff"/><stop offset="0.563" stop-color="#ff04fe"/><stop offset="0.663" stop-color="#ff00b4"/><stop offset="0.815" stop-color="#ff0073"/><stop offset="1" stop-color="#ff0047"/></linearGradient><linearGradient id="c207" gradientUnits="userSpaceOnUse" x1="1291" x2="1625" y1="0" y2="0"><stop offset="0" stop-color="#0050ff"/><stop offset="0.234" stop-color="#0336ff"/><stop offset="0.443" stop-color="#9118ff"/><stop offset="0.575" stop-color="#ff00fc"/><stop offset="0.677" stop-color="#ff00b3"/><stop offset="0.832" stop-color="#ff0073"/><stop offset="1" stop-color="#ff004b"/></linearGradient><linearGradient id="c208" gradientUnits="userSpaceOnUse" x1="1292" x2="1620" y1="0" y2="0"><stop offset="0" stop-color="#004dff"/><stop offset="0.232" stop-color="#0234ff"/><stop offset="0.445" stop-color="#8f16ff"/><stop offset="0.579" stop-color="#ff00ff"/><stop offset="0.683" stop-color="#ff00b5"/><stop offset="0.841" stop-color="#ff0075"/><stop offset="1" stop-color="#ff004f"/></linearGradient><linearGradient id="c209" gradientUnits="userSpaceOnUse" x1="1293" x2="1614" y1="0" y2="0"><stop offset="0" stop-color="#004bff"/><stop offset="0.237" stop-color="#0531ff"/><stop offset="0.455" stop-color="#9213ff"/><stop offset="0.592" stop-color="#ff00fd"/><stop offset="0.698" stop-color="#ff00b4"/><stop offset="0.866" stop-color="#ff0073"/><stop offset="1" stop-color="#ff0053"/></linearGradient><linearGradient id="c210" gradientUnits="userSpaceOnUse" x1="1294" x2="1608" y1="0" y2="0"><stop offset="0" stop-color="#0048ff"/><stop offset="0.236" stop-color="#052fff"/><stop offset="0.459" stop-color="#9011ff"/><stop offset="0.599" stop-color="#fe00ff"/><stop offset="0.713" stop-color="#ff00b3"/><stop offset="0.885" stop-color="#ff0073"/><stop offset="1" stop-color="#ff0057"/></linearGradient><linearGradient id="c211" gradientUnits="userSpaceOnUse" x1="1295" x2="1603" y1="0" y2="0"><stop offset="0" stop-color="#0045ff"/><stop offset="0.234" stop-color="#042dff"/><stop offset="0.468" stop-color="#930dff"/><stop offset="0.597" stop-color="#f600ff"/><stop offset="0.623" stop-color="#ff00f3"/><stop offset="0.747" stop-color="#ff00a9"/><stop offset="0.935" stop-color="#ff006a"/><stop offset="1" stop-color="#ff005b"/></linearGradient><linearGradient id="c212" gradientUnits="userSpaceOnUse" x1="1295" x2="1597" y1="0" y2="0"><stop offset="0" stop-color="#0043ff"/><stop offset="0.232" stop-color="#022bff"/><stop offset="0.47" stop-color="#8f0cff"/><stop offset="0.596" stop-color="#eb00ff"/><stop offset="0.629" stop-color="#ff00f8"/><stop offset="0.748" stop-color="#ff00b0"/><stop offset="0.934" stop-color="#ff0070"/><stop offset="1" stop-color="#ff0060"/></linearGradient><linearGradient id="c213" gradientUnits="userSpaceOnUse" x1="1296" x2="1592" y1="0" y2="0"><stop offset="0" stop-color="#0041ff"/><stop offset="0.236" stop-color="#0529ff"/><stop offset="0.48" stop-color="#9109ff"/><stop offset="0.615" stop-color="#f300ff"/><stop offset="0.642" stop-color="#ff00f6"/><stop offset="0.77" stop-color="#ff00ac"/><stop offset="0.966" stop-color="#ff006c"/><stop offset="1" stop-color="#ff0064"/></linearGradient><linearGradient id="c214" gradientUnits="userSpaceOnUse" x1="1297" x2="1586" y1="0" y2="0"><stop offset="0" stop-color="#003eff"/><stop offset="0.235" stop-color="#0427ff"/><stop offset="0.484" stop-color="#9007ff"/><stop offset="0.644" stop-color="#ff00fe"/><stop offset="0.768" stop-color="#ff00b4"/><stop offset="0.962" stop-color="#ff0073"/><stop offset="1" stop-color="#ff006a"/></linearGradient><linearGradient id="c215" gradientUnits="userSpaceOnUse" x1="1298" x2="1580" y1="0" y2="0"><stop offset="0" stop-color="#003bff"/><stop offset="0.234" stop-color="#0425ff"/><stop offset="0.496" stop-color="#9204ff"/><stop offset="0.66" stop-color="#ff00fc"/><stop offset="0.787" stop-color="#ff00b3"/><stop offset="0.986" stop-color="#ff0073"/><stop offset="1" stop-color="#ff006f"/></linearGradient><linearGradient id="c216" gradientUnits="userSpaceOnUse" x1="1299" x2="1575" y1="0" y2="0"><stop offset="0" stop-color="#0039ff"/><stop offset="0.232" stop-color="#0323ff"/><stop offset="0.5" stop-color="#9002ff"/><stop offset="0.674" stop-color="#ff00fa"/><stop offset="0.812" stop-color="#ff00af"/><stop offset="1" stop-color="#ff0074"/></linearGradient><linearGradient id="c217" gradientUnits="userSpaceOnUse" x1="1300" x2="1569" y1="0" y2="0"><stop offset="0" stop-color="#0036ff"/><stop offset="0.23" stop-color="#0321ff"/><stop offset="0.506" stop-color="#8f00ff"/><stop offset="0.684" stop-color="#ff00fd"/><stop offset="0.818" stop-color="#ff00b4"/><stop offset="1" stop-color="#ff007a"/></linearGradient><linearGradient id="c218" gradientUnits="userSpaceOnUse" x1="1301" x2="1564" y1="0" y2="0"><stop offset="0" stop-color="#0034ff"/><stop offset="0.228" stop-color="#021fff"/><stop offset="0.517" stop-color="#9100ff"/><stop offset="0.7" stop-color="#ff00fa"/><stop offset="0.844" stop-color="#ff00b0"/><stop offset="1" stop-color="#ff007f"/></linearGradient><linearGradient id="c219" gradientUnits="userSpaceOnUse" x1="1302" x2="1558" y1="0" y2="0"><stop offset="0" stop-color="#0032ff"/><stop offset="0.234" stop-color="#051cff"/><stop offset="0.531" stop-color="#9400ff"/><stop offset="0.711" stop-color="#ff00fd"/><stop offset="0.859" stop-color="#ff00b2"/><stop offset="1" stop-color="#ff0086"/></linearGradient><linearGradient id="c220" gradientUnits="userSpaceOnUse" x1="1303" x2="1552" y1="0" y2="0"><stop offset="0" stop-color="#002fff"/><stop offset="0.233" stop-color="#051aff"/><stop offset="0.53" stop-color="#8e00ff"/><stop offset="0.731" stop-color="#ff00fb"/><stop offset="0.884" stop-color="#ff00b2"/><stop offset="1" stop-color="#ff008d"/></linearGradient><linearGradient id="c221" gradientUnits="userSpaceOnUse" x1="1304" x2="1547" y1="0" y2="0"><stop offset="0" stop-color="#002dff"/><stop offset="0.23" stop-color="#0419ff"/><stop offset="0.519" stop-color="#8400ff"/><stop offset="0.741" stop-color="#ff00fe"/><stop offset="0.897" stop-color="#ff00b4"/><stop offset="1" stop-color="#ff0093"/></linearGradient><linearGradient id="c222" gradientUnits="userSpaceOnUse" x1="1305" x2="1541" y1="0" y2="0"><stop offset="0" stop-color="#002aff"/><stop offset="0.229" stop-color="#0417ff"/><stop offset="0.517" stop-color="#7e00ff"/><stop offset="0.763" stop-color="#ff00fc"/><stop offset="0.924" stop-color="#ff00b3"/><stop offset="1" stop-color="#ff009b"/></linearGradient><linearGradient id="c223" gradientUnits="userSpaceOnUse" x1="1306" x2="1536" y1="0" y2="0"><stop offset="0" stop-color="#0028ff"/><stop offset="0.226" stop-color="#0315ff"/><stop offset="0.504" stop-color="#7500ff"/><stop offset="0.774" stop-color="#ff00ff"/><stop offset="0.939" stop-color="#ff00b5"/><stop offset="1" stop-color="#ff00a1"/></linearGradient><linearGradient id="c224" gradientUnits="userSpaceOnUse" x1="1307" x2="1530" y1="0" y2="0"><stop offset="0" stop-color="#0025ff"/><stop offset="0.224" stop-color="#0313ff"/><stop offset="0.502" stop-color="#6f00ff"/><stop offset="0.798" stop-color="#ff00fc"/><stop offset="0.969" stop-color="#ff00b4"/><stop offset="1" stop-color="#ff00aa"/></linearGradient><linearGradient id="c225" gradientUnits="userSpaceOnUse" x1="1308" x2="1524" y1="0" y2="0"><stop offset="0" stop-color="#0023ff"/><stop offset="0.222" stop-color="#0212ff"/><stop offset="0.491" stop-color="#6600ff"/><stop offset="0.806" stop-color="#fa00ff"/><stop offset="1" stop-color="#ff00b3"/></linearGradient><linearGradient id="c226" gradientUnits="userSpaceOnUse" x1="1310" x2="1519" y1="0" y2="0"><stop offset="0" stop-color="#0020ff"/><stop offset="0.22" stop-color="#0410ff"/><stop offset="0.478" stop-color="#6000ff"/><stop offset="0.813" stop-color="#f500ff"/><stop offset="0.852" stop-color="#ff00f6"/><stop offset="1" stop-color="#ff00bb"/></linearGradient><linearGradient id="c227" gradientUnits="userSpaceOnUse" x1="1311" x2="1513" y1="0" y2="0"><stop offset="0" stop-color="#001eff"/><stop offset="0.218" stop-color="#030eff"/><stop offset="0.475" stop-color="#5b00ff"/><stop offset="0.822" stop-color="#ed00ff"/><stop offset="0.871" stop-color="#ff00f9"/><stop offset="1" stop-color="#ff00c5"/></linearGradient><linearGradient id="c228" gradientUnits="userSpaceOnUse" x1="1312" x2="1508" y1="0" y2="0"><stop offset="0" stop-color="#001cff"/><stop offset="0.214" stop-color="#030cff"/><stop offset="0.469" stop-color="#5600ff"/><stop offset="0.837" stop-color="#eb00ff"/><stop offset="0.888" stop-color="#ff00fb"/><stop offset="1" stop-color="#ff00ce"/></linearGradient><linearGradient id="c229" gradientUnits="userSpaceOnUse" x1="1313" x2="1502" y1="0" y2="0"><stop offset="0" stop-color="#0019ff"/><stop offset="0.222" stop-color="#050aff"/><stop offset="0.476" stop-color="#5500ff"/><stop offset="0.857" stop-color="#e800ff"/><stop offset="0.921" stop-color="#ff00f9"/><stop offset="1" stop-color="#ff00da"/></linearGradient><linearGradient id="c230" gradientUnits="userSpaceOnUse" x1="1314" x2="1496" y1="0" y2="0"><stop offset="0" stop-color="#0017ff"/><stop offset="0.22" stop-color="#0508ff"/><stop offset="0.505" stop-color="#5b00ff"/><stop offset="0.901" stop-color="#ef00ff"/><stop offset="0.956" stop-color="#ff00f7"/><stop offset="1" stop-color="#ff00e6"/></linearGradient><linearGradient id="c231" gradientUnits="userSpaceOnUse" x1="1315" x2="1491" y1="0" y2="0"><stop offset="0" stop-color="#0015ff"/><stop offset="0.216" stop-color="#0407ff"/><stop offset="0.602" stop-color="#7700ff"/><stop offset="0.977" stop-color="#ff00fa"/><stop offset="1" stop-color="#ff00f1"/></linearGradient><linearGradient id="c232" gradientUnits="userSpaceOnUse" x1="1317" x2="1485" y1="0" y2="0"><stop offset="0" stop-color="#0012ff"/><stop offset="0.214" stop-color="#0505ff"/><stop offset="0.702" stop-color="#9300ff"/><stop offset="1" stop-color="#ff00ff"/></linearGradient><linearGradient id="c233" gradientUnits="userSpaceOnUse" x1="1318" x2="1480" y1="0" y2="0"><stop offset="0" stop-color="#0010ff"/><stop offset="0.21" stop-color="#0503ff"/><stop offset="0.716" stop-color="#9100ff"/><stop offset="1" stop-color="#f300ff"/></linearGradient><linearGradient id="c234" gradientUnits="userSpaceOnUse" x1="1319" x2="1474" y1="0" y2="0"><stop offset="0" stop-color="#000eff"/><stop offset="0.206" stop-color="#0502ff"/><stop offset="0.748" stop-color="#9300ff"/><stop offset="1" stop-color="#e500ff"/></linearGradient><linearGradient id="c235" gradientUnits="userSpaceOnUse" x1="1321" x2="1468" y1="0" y2="0"><stop offset="0" stop-color="#000bff"/><stop offset="0.204" stop-color="#0600ff"/><stop offset="0.776" stop-color="#9400ff"/><stop offset="1" stop-color="#d800ff"/></linearGradient><linearGradient id="c236" gradientUnits="userSpaceOnUse" x1="1322" x2="1463" y1="0" y2="0"><stop offset="0" stop-color="#0009ff"/><stop offset="0.199" stop-color="#0500ff"/><stop offset="0.794" stop-color="#9200ff"/><stop offset="1" stop-color="#cd00ff"/></linearGradient><linearGradient id="c237" gradientUnits="userSpaceOnUse" x1="1323" x2="1457" y1="0" y2="0"><stop offset="0" stop-color="#0007ff"/><stop offset="0.194" stop-color="#0500ff"/><stop offset="0.821" stop-color="#9100ff"/><stop offset="1" stop-color="#c000ff"/></linearGradient><linearGradient id="c238" gradientUnits="userSpaceOnUse" x1="1325" x2="1452" y1="0" y2="0"><stop offset="0" stop-color="#0004ff"/><stop offset="0.189" stop-color="#0600ff"/><stop offset="0.866" stop-color="#9500ff"/><stop offset="1" stop-color="#b600ff"/></linearGradient><linearGradient id="c239" gradientUnits="userSpaceOnUse" x1="1326" x2="1446" y1="0" y2="0"><stop offset="0" stop-color="#0002ff"/><stop offset="0.183" stop-color="#0500ff"/><stop offset="0.9" stop-color="#9300ff"/><stop offset="1" stop-color="#aa00ff"/></linearGradient><linearGradient id="c240" gradientUnits="userSpaceOnUse" x1="1328" x2="1440" y1="0" y2="0"><stop offset="0" stop-color="#0000ff"/><stop offset="0.179" stop-color="#0600ff"/><stop offset="0.946" stop-color="#9400ff"/><stop offset="1" stop-color="#9f00ff"/></linearGradient><linearGradient id="c241" gradientUnits="userSpaceOnUse" x1="1330" x2="1435" y1="0" y2="0"><stop offset="0" stop-color="#0000ff"/><stop offset="0.171" stop-color="#0700ff"/><stop offset="1" stop-color="#9600ff"/></linearGradient><linearGradient id="c242" gradientUnits="userSpaceOnUse" x1="1331" x2="1429" y1="0" y2="0"><stop offset="0" stop-color="#0000ff"/><stop offset="0.163" stop-color="#0700ff"/><stop offset="1" stop-color="#8b00ff"/></linearGradient><linearGradient id="c243" gradientUnits="userSpaceOnUse" x1="1333" x2="1424" y1="0" y2="0"><stop offset="0" stop-color="#0000ff"/><stop offset="0.154" stop-color="#0800ff"/><stop offset="1" stop-color="#8200ff"/></linearGradient><linearGradient id="c244" gradientUnits="userSpaceOnUse" x1="1335" x2="1418" y1="0" y2="0"><stop offset="0" stop-color="#0000ff"/><stop offset="0.193" stop-color="#0f00ff"/><stop offset="1" stop-color="#7800ff"/></linearGradient><linearGradient id="c245" gradientUnits="userSpaceOnUse" x1="1338" x2="1413" y1="0" y2="0"><stop offset="0" stop-color="#0000ff"/><stop offset="1" stop-color="#7000ff"/></linearGradient><linearGradient id="c246" gradientUnits="userSpaceOnUse" x1="1340" x2="1407" y1="0" y2="0"><stop offset="0" stop-color="#0100ff"/><stop offset="1" stop-color="#6600ff"/></linearGradient><linearGradient id="c247" gradientUnits="userSpaceOnUse" x1="1343" x2="1401" y1="0" y2="0"><stop offset="0" stop-color="#0600ff"/><stop offset="1" stop-color="#5d00ff"/></linearGradient><linearGradient id="c248" gradientUnits="userSpaceOnUse" x1="1345" x2="1396" y1="0" y2="0"><stop offset="0" stop-color="#0a00ff"/><stop offset="1" stop-color="#5600ff"/></linearGradient><linearGradient id="c249" gradientUnits="userSpaceOnUse" x1="1348" x2="1390" y1="0" y2="0"><stop offset="0" stop-color="#0f00ff"/><stop offset="1" stop-color="#4d00ff"/></linearGradient><linearGradient id="c250" gradientUnits="userSpaceOnUse" x1="1351" x2="1385" y1="0" y2="0"><stop offset="0" stop-color="#1400ff"/><stop offset="1" stop-color="#4600ff"/></linearGradient><linearGradient id="c251" gradientUnits="userSpaceOnUse" x1="1354" x2="1379" y1="0" y2="0"><stop offset="0" stop-color="#1900ff"/><stop offset="1" stop-color="#3d00ff"/></linearGradient><linearGradient id="c252" gradientUnits="userSpaceOnUse" x1="1357" x2="1373" y1="0" y2="0"><stop offset="0" stop-color="#1e00ff"/><stop offset="1" stop-color="#3500ff"/></linearGradient><linearGradient id="c253" gradientUnits="userSpaceOnUse" x1="1360" x2="1368" y1="0" y2="0"><stop offset="0" stop-color="#2300ff"/><stop offset="1" stop-color="#2f00ff"/></linearGradient><linearGradient id="i0" gradientUnits="userSpaceOnUse" x1="1698" x2="1888" y1="0" y2="0"><stop offset="0" stop-color="#85ffcd"/><stop offset="0.774" stop-color="#f9ffc8"/><stop offset="0.837" stop-color="#fffac3"/><stop offset="1" stop-color="#ffe1af"/></linearGradient><linearGradient id="i1" gradientUnits="userSpaceOnUse" x1="1698" x2="1888" y1="0" y2="0"><stop offset="0" stop-color="#86ffce"/><stop offset="0.758" stop-color="#f8ffc9"/><stop offset="0.837" stop-color="#fff8c4"/><stop offset="1" stop-color="#ffe0af"/></linearGradient><linearGradient id="i2" gradientUnits="userSpaceOnUse" x1="1698" x2="1888" y1="0" y2="0"><stop offset="0" stop-color="#87ffd0"/><stop offset="0.758" stop-color="#faffcb"/><stop offset="0.837" stop-color="#fff7c4"/><stop offset="1" stop-color="#ffdfb0"/></linearGradient><linearGradient id="i3" gradientUnits="userSpaceOnUse" x1="1698" x2="1888" y1="0" y2="0"><stop offset="0" stop-color="#88ffd1"/><stop offset="0.758" stop-color="#fcffcd"/><stop offset="1" stop-color="#ffddb0"/></linearGradient><linearGradient id="i4" gradientUnits="userSpaceOnUse" x1="1698" x2="1888" y1="0" y2="0"><stop offset="0" stop-color="#89ffd3"/><stop offset="0.774" stop-color="#fffecd"/><stop offset="1" stop-color="#ffdcb0"/></linearGradient><linearGradient id="i5" gradientUnits="userSpaceOnUse" x1="1698" x2="1888" y1="0" y2="0"><stop offset="0" stop-color="#8affd4"/><stop offset="0.774" stop-color="#fffccd"/><stop offset="1" stop-color="#ffdab1"/></linearGradient><linearGradient id="i6" gradientUnits="userSpaceOnUse" x1="1698" x2="1888" y1="0" y2="0"><stop offset="0" stop-color="#8bffd6"/><stop offset="0.758" stop-color="#fffdd0"/><stop offset="1" stop-color="#ffd9b1"/></linearGradient><linearGradient id="i7" gradientUnits="userSpaceOnUse" x1="1698" x2="1888" y1="0" y2="0"><stop offset="0" stop-color="#8dffd7"/><stop offset="0.742" stop-color="#fffed3"/><stop offset="1" stop-color="#ffd7b1"/></linearGradient><linearGradient id="i8" gradientUnits="userSpaceOnUse" x1="1698" x2="1888" y1="0" y2="0"><stop offset="0" stop-color="#8effd9"/><stop offset="0.742" stop-color="#fffcd3"/><stop offset="1" stop-color="#ffd6b1"/></linearGradient><linearGradient id="i9" gradientUnits="userSpaceOnUse" x1="1698" x2="1888" y1="0" y2="0"><stop offset="0" stop-color="#8fffda"/><stop offset="0.726" stop-color="#fffdd5"/><stop offset="1" stop-color="#ffd5b2"/></linearGradient><linearGradient id="i10" gradientUnits="userSpaceOnUse" x1="1698" x2="1888" y1="0" y2="0"><stop offset="0" stop-color="#90ffdc"/><stop offset="0.711" stop-color="#fffed8"/><stop offset="1" stop-color="#ffd3b2"/></linearGradient><linearGradient id="i11" gradientUnits="userSpaceOnUse" x1="1698" x2="1888" y1="0" y2="0"><stop offset="0" stop-color="#91ffdd"/><stop offset="0.711" stop-color="#fffdd8"/><stop offset="1" stop-color="#ffd2b2"/></linearGradient><linearGradient id="i12" gradientUnits="userSpaceOnUse" x1="1698" x2="1888" y1="0" y2="0"><stop offset="0" stop-color="#92ffdf"/><stop offset="0.695" stop-color="#fffedb"/><stop offset="1" stop-color="#ffd0b3"/></linearGradient><linearGradient id="i13" gradientUnits="userSpaceOnUse" x1="1698" x2="1888" y1="0" y2="0"><stop offset="0" stop-color="#93ffe0"/><stop offset="0.695" stop-color="#fffcdb"/><stop offset="1" stop-color="#ffcfb3"/></linearGradient><linearGradient id="i14" gradientUnits="userSpaceOnUse" x1="1698" x2="1888" y1="0" y2="0"><stop offset="0" stop-color="#94ffe2"/><stop offset="0.679" stop-color="#fffdde"/><stop offset="1" stop-color="#ffceb3"/></linearGradient><linearGradient id="i15" gradientUnits="userSpaceOnUse" x1="1698" x2="1888" y1="0" y2="0"><stop offset="0" stop-color="#96ffe4"/><stop offset="0.663" stop-color="#fffee0"/><stop offset="1" stop-color="#ffccb3"/></linearGradient><linearGradient id="i16" gradientUnits="userSpaceOnUse" x1="1698" x2="1888" y1="0" y2="0"><stop offset="0" stop-color="#97ffe5"/><stop offset="0.663" stop-color="#fffce1"/><stop offset="1" stop-color="#ffcbb4"/></linearGradient><linearGradient id="i17" gradientUnits="userSpaceOnUse" x1="1698" x2="1888" y1="0" y2="0"><stop offset="0" stop-color="#98ffe7"/><stop offset="0.647" stop-color="#fffde3"/><stop offset="1" stop-color="#ffcab4"/></linearGradient><linearGradient id="i18" gradientUnits="userSpaceOnUse" x1="1698" x2="1888" y1="0" y2="0"><stop offset="0" stop-color="#99ffe9"/><stop offset="0.632" stop-color="#fffee6"/><stop offset="1" stop-color="#ffc8b4"/></linearGradient><linearGradient id="i19" gradientUnits="userSpaceOnUse" x1="1698" x2="1888" y1="0" y2="0"><stop offset="0" stop-color="#9affea"/><stop offset="0.632" stop-color="#fffde6"/><stop offset="1" stop-color="#ffc7b4"/></linearGradient><linearGradient id="i20" gradientUnits="userSpaceOnUse" x1="1698" x2="1888" y1="0" y2="0"><stop offset="0" stop-color="#9cffec"/><stop offset="0.616" stop-color="#fffee9"/><stop offset="1" stop-color="#ffc6b5"/></linearGradient><linearGradient id="i21" gradientUnits="userSpaceOnUse" x1="1698" x2="1888" y1="0" y2="0"><stop offset="0" stop-color="#9dffee"/><stop offset="0.616" stop-color="#fffce9"/><stop offset="1" stop-color="#ffc4b5"/></linearGradient><linearGradient id="i22" gradientUnits="userSpaceOnUse" x1="1698" x2="1888" y1="0" y2="0"><stop offset="0" stop-color="#9effef"/><stop offset="0.6" stop-color="#fffdec"/><stop offset="1" stop-color="#ffc3b5"/></linearGradient><linearGradient id="i23" gradientUnits="userSpaceOnUse" x1="1698" x2="1888" y1="0" y2="0"><stop offset="0" stop-color="#9ffff1"/><stop offset="0.584" stop-color="#fffeef"/><stop offset="0.979" stop-color="#ffc4b8"/><stop offset="1" stop-color="#ffc2b5"/></linearGradient><linearGradient id="i24" gradientUnits="userSpaceOnUse" x1="1698" x2="1888" y1="0" y2="0"><stop offset="0" stop-color="#a1fff3"/><stop offset="0.584" stop-color="#fffcef"/><stop offset="0.979" stop-color="#ffc3b8"/><stop offset="1" stop-color="#ffc0b6"/></linearGradient><linearGradient id="i25" gradientUnits="userSpaceOnUse" x1="1698" x2="1888" y1="0" y2="0"><stop offset="0" stop-color="#a2fff4"/><stop offset="0.568" stop-color="#fffdf2"/><stop offset="0.963" stop-color="#ffc3ba"/><stop offset="1" stop-color="#ffbfb6"/></linearGradient><linearGradient id="i26" gradientUnits="userSpaceOnUse" x1="1698" x2="1888" y1="0" y2="0"><stop offset="0" stop-color="#a3fff6"/><stop offset="0.553" stop-color="#fffef5"/><stop offset="0.947" stop-color="#ffc4bc"/><stop offset="1" stop-color="#ffbeb6"/></linearGradient><linearGradient id="i27" gradientUnits="userSpaceOnUse" x1="1698" x2="1888" y1="0" y2="0"><stop offset="0" stop-color="#a4fff8"/><stop offset="0.553" stop-color="#fffcf5"/><stop offset="0.947" stop-color="#ffc3bd"/><stop offset="1" stop-color="#ffbcb7"/></linearGradient><linearGradient id="i28" gradientUnits="userSpaceOnUse" x1="1698" x2="1888" y1="0" y2="0"><stop offset="0" stop-color="#a6fffa"/><stop offset="0.537" stop-color="#fffdf8"/><stop offset="0.932" stop-color="#ffc3bf"/><stop offset="1" stop-color="#ffbbb7"/></linearGradient><linearGradient id="i29" gradientUnits="userSpaceOnUse" x1="1698" x2="1888" y1="0" y2="0"><stop offset="0" stop-color="#a7fffc"/><stop offset="0.521" stop-color="#fffffb"/><stop offset="0.916" stop-color="#ffc4c1"/><stop offset="1" stop-color="#ffbab7"/></linearGradient><linearGradient id="i30" gradientUnits="userSpaceOnUse" x1="1698" x2="1888" y1="0" y2="0"><stop offset="0" stop-color="#a8fffd"/><stop offset="0.521" stop-color="#fffdfb"/><stop offset="0.916" stop-color="#ffc2c1"/><stop offset="1" stop-color="#ffb8b7"/></linearGradient><linearGradient id="i31" gradientUnits="userSpaceOnUse" x1="1698" x2="1888" y1="0" y2="0"><stop offset="0" stop-color="#aaffff"/><stop offset="0.505" stop-color="#fffefe"/><stop offset="0.9" stop-color="#ffc3c3"/><stop offset="1" stop-color="#ffb7b8"/></linearGradient><linearGradient id="i32" gradientUnits="userSpaceOnUse" x1="1698" x2="1888" y1="0" y2="0"><stop offset="0" stop-color="#aafdff"/><stop offset="0.505" stop-color="#fffcfe"/><stop offset="0.9" stop-color="#ffc1c3"/><stop offset="1" stop-color="#ffb6b8"/></linearGradient><linearGradient id="i33" gradientUnits="userSpaceOnUse" x1="1698" x2="1888" y1="0" y2="0"><stop offset="0" stop-color="#aafbff"/><stop offset="0.505" stop-color="#fffafe"/><stop offset="0.9" stop-color="#ffc0c4"/><stop offset="1" stop-color="#ffb5b8"/></linearGradient><linearGradient id="i34" gradientUnits="userSpaceOnUse" x1="1698" x2="1888" y1="0" y2="0"><stop offset="0" stop-color="#aaf9ff"/><stop offset="0.505" stop-color="#fff8ff"/><stop offset="0.9" stop-color="#ffbfc4"/><stop offset="1" stop-color="#ffb3b8"/></linearGradient><linearGradient id="i35" gradientUnits="userSpaceOnUse" x1="1698" x2="1888" y1="0" y2="0"><stop offset="0" stop-color="#aaf8ff"/><stop offset="0.521" stop-color="#fff4fc"/><stop offset="0.916" stop-color="#ffbcc2"/><stop offset="1" stop-color="#ffb2b9"/></linearGradient><linearGradient id="i36" gradientUnits="userSpaceOnUse" x1="1698" x2="1888" y1="0" y2="0"><stop offset="0" stop-color="#aaf6ff"/><stop offset="0.521" stop-color="#fff2fc"/><stop offset="0.916" stop-color="#ffbac3"/><stop offset="1" stop-color="#ffb1b9"/></linearGradient><linearGradient id="i37" gradientUnits="userSpaceOnUse" x1="1698" x2="1888" y1="0" y2="0"><stop offset="0" stop-color="#aaf4ff"/><stop offset="0.521" stop-color="#fff0fc"/><stop offset="0.916" stop-color="#ffb9c3"/><stop offset="1" stop-color="#ffb0b9"/></linearGradient><linearGradient id="i38" gradientUnits="userSpaceOnUse" x1="1698" x2="1888" y1="0" y2="0"><stop offset="0" stop-color="#aaf2ff"/><stop offset="0.521" stop-color="#ffeffc"/><stop offset="0.916" stop-color="#ffb8c3"/><stop offset="1" stop-color="#ffaeb9"/></linearGradient><linearGradient id="i39" gradientUnits="userSpaceOnUse" x1="1698" x2="1888" y1="0" y2="0"><stop offset="0" stop-color="#abf1ff"/><stop offset="0.521" stop-color="#ffedfc"/><stop offset="0.916" stop-color="#ffb6c3"/><stop offset="1" stop-color="#ffadba"/></linearGradient><linearGradient id="i40" gradientUnits="userSpaceOnUse" x1="1698" x2="1888" y1="0" y2="0"><stop offset="0" stop-color="#abefff"/><stop offset="0.521" stop-color="#ffebfd"/><stop offset="0.932" stop-color="#ffb3c2"/><stop offset="1" stop-color="#ffacba"/></linearGradient><linearGradient id="i41" gradientUnits="userSpaceOnUse" x1="1698" x2="1888" y1="0" y2="0"><stop offset="0" stop-color="#abedff"/><stop offset="0.521" stop-color="#ffe9fd"/><stop offset="0.932" stop-color="#ffb2c2"/><stop offset="1" stop-color="#ffabba"/></linearGradient><linearGradient id="i42" gradientUnits="userSpaceOnUse" x1="1698" x2="1888" y1="0" y2="0"><stop offset="0" stop-color="#abebff"/><stop offset="0.521" stop-color="#ffe8fd"/><stop offset="0.932" stop-color="#ffb1c2"/><stop offset="1" stop-color="#ffa9ba"/></linearGradient><linearGradient id="i43" gradientUnits="userSpaceOnUse" x1="1698" x2="1888" y1="0" y2="0"><stop offset="0" stop-color="#abeaff"/><stop offset="0.521" stop-color="#ffe6fd"/><stop offset="0.932" stop-color="#ffafc2"/><stop offset="1" stop-color="#ffa8bb"/></linearGradient><linearGradient id="i44" gradientUnits="userSpaceOnUse" x1="1698" x2="1888" y1="0" y2="0"><stop offset="0" stop-color="#abe8ff"/><stop offset="0.521" stop-color="#ffe4fd"/><stop offset="0.932" stop-color="#ffaec3"/><stop offset="1" stop-color="#ffa7bb"/></linearGradient><linearGradient id="i45" gradientUnits="userSpaceOnUse" x1="1698" x2="1888" y1="0" y2="0"><stop offset="0" stop-color="#abe6ff"/><stop offset="0.521" stop-color="#ffe3fd"/><stop offset="0.932" stop-color="#ffadc3"/><stop offset="1" stop-color="#ffa6bb"/></linearGradient><linearGradient id="i46" gradientUnits="userSpaceOnUse" x1="1698" x2="1888" y1="0" y2="0"><stop offset="0" stop-color="#abe5ff"/><stop offset="0.521" stop-color="#ffe1fd"/><stop offset="0.932" stop-color="#ffacc3"/><stop offset="1" stop-color="#ffa5bb"/></linearGradient><linearGradient id="i47" gradientUnits="userSpaceOnUse" x1="1698" x2="1888" y1="0" y2="0"><stop offset="0" stop-color="#abe3ff"/><stop offset="0.521" stop-color="#ffdffe"/><stop offset="0.932" stop-color="#ffaac3"/><stop offset="1" stop-color="#ffa3bb"/></linearGradient><linearGradient id="i48" gradientUnits="userSpaceOnUse" x1="1698" x2="1888" y1="0" y2="0"><stop offset="0" stop-color="#ace1ff"/><stop offset="0.521" stop-color="#ffdefe"/><stop offset="0.932" stop-color="#ffa9c3"/><stop offset="1" stop-color="#ffa2bc"/></linearGradient><linearGradient id="i49" gradientUnits="userSpaceOnUse" x1="1698" x2="1888" y1="0" y2="0"><stop offset="0" stop-color="#ace0ff"/><stop offset="0.521" stop-color="#ffdcfe"/><stop offset="0.932" stop-color="#ffa8c4"/><stop offset="1" stop-color="#ffa1bc"/></linearGradient><linearGradient id="i50" gradientUnits="userSpaceOnUse" x1="1698" x2="1888" y1="0" y2="0"><stop offset="0" stop-color="#acdeff"/><stop offset="0.521" stop-color="#ffdafe"/><stop offset="0.932" stop-color="#ffa7c4"/><stop offset="1" stop-color="#ffa0bc"/></linearGradient><linearGradient id="i51" gradientUnits="userSpaceOnUse" x1="1698" x2="1888" y1="0" y2="0"><stop offset="0" stop-color="#acdcff"/><stop offset="0.521" stop-color="#ffd9fe"/><stop offset="0.932" stop-color="#ffa5c4"/><stop offset="1" stop-color="#ff9fbc"/></linearGradient><linearGradient id="i52" gradientUnits="userSpaceOnUse" x1="1698" x2="1888" y1="0" y2="0"><stop offset="0" stop-color="#acdbff"/><stop offset="0.521" stop-color="#ffd7fe"/><stop offset="0.932" stop-color="#ffa4c4"/><stop offset="1" stop-color="#ff9dbd"/></linearGradient><linearGradient id="i53" gradientUnits="userSpaceOnUse" x1="1698" x2="1888" y1="0" y2="0"><stop offset="0" stop-color="#acd9ff"/><stop offset="0.521" stop-color="#ffd5fe"/><stop offset="0.932" stop-color="#ffa3c5"/><stop offset="1" stop-color="#ff9cbd"/></linearGradient><linearGradient id="i54" gradientUnits="userSpaceOnUse" x1="1698" x2="1888" y1="0" y2="0"><stop offset="0" stop-color="#acd7ff"/><stop offset="0.537" stop-color="#ffd2fc"/><stop offset="0.963" stop-color="#ff9fc1"/><stop offset="1" stop-color="#ff9bbd"/></linearGradient><linearGradient id="i55" gradientUnits="userSpaceOnUse" x1="1698" x2="1888" y1="0" y2="0"><stop offset="0" stop-color="#acd6ff"/><stop offset="0.537" stop-color="#ffd0fc"/><stop offset="0.963" stop-color="#ff9dc1"/><stop offset="1" stop-color="#ff9abd"/></linearGradient><linearGradient id="i56" gradientUnits="userSpaceOnUse" x1="1698" x2="1888" y1="0" y2="0"><stop offset="0" stop-color="#acd4ff"/><stop offset="0.537" stop-color="#ffcefc"/><stop offset="0.963" stop-color="#ff9cc2"/><stop offset="1" stop-color="#ff99be"/></linearGradient><linearGradient id="i57" gradientUnits="userSpaceOnUse" x1="1698" x2="1888" y1="0" y2="0"><stop offset="0" stop-color="#acd3ff"/><stop offset="0.537" stop-color="#ffcdfc"/><stop offset="0.963" stop-color="#ff9bc2"/><stop offset="1" stop-color="#ff98be"/></linearGradient><linearGradient id="i58" gradientUnits="userSpaceOnUse" x1="1698" x2="1888" y1="0" y2="0"><stop offset="0" stop-color="#add1ff"/><stop offset="0.537" stop-color="#ffcbfc"/><stop offset="0.963" stop-color="#ff9ac2"/><stop offset="1" stop-color="#ff96be"/></linearGradient><linearGradient id="i59" gradientUnits="userSpaceOnUse" x1="1698" x2="1888" y1="0" y2="0"><stop offset="0" stop-color="#adcfff"/><stop offset="0.537" stop-color="#ffcafd"/><stop offset="0.963" stop-color="#ff99c2"/><stop offset="1" stop-color="#ff95be"/></linearGradient><linearGradient id="i60" gradientUnits="userSpaceOnUse" x1="1698" x2="1888" y1="0" y2="0"><stop offset="0" stop-color="#adceff"/><stop offset="0.537" stop-color="#ffc8fd"/><stop offset="0.963" stop-color="#ff97c3"/><stop offset="1" stop-color="#ff94bf"/></linearGradient><linearGradient id="i61" gradientUnits="userSpaceOnUse" x1="1698" x2="1888" y1="0" y2="0"><stop offset="0" stop-color="#adccff"/><stop offset="0.537" stop-color="#ffc7fd"/><stop offset="0.963" stop-color="#ff96c3"/><stop offset="1" stop-color="#ff93bf"/></linearGradient><linearGradient id="i62" gradientUnits="userSpaceOnUse" x1="1698" x2="1888" y1="0" y2="0"><stop offset="0" stop-color="#adcbff"/><stop offset="0.537" stop-color="#ffc5fd"/><stop offset="0.963" stop-color="#ff95c3"/><stop offset="1" stop-color="#ff92bf"/></linearGradient></defs><rect x="1190" y="139" width="712.2" height="581.5" fill="#fff"/><rect x="1197" y="146" width="700.6" height="567.6" fill="#333"/><rect x="1226.5" y="169.5" width="667.5" height="514.5" fill="#242424"/><g clip-path="url(#loc)"><rect x="1282" y="173" width="19" height="2.6" fill="url(#c0)"/><rect x="1274" y="175" width="36" height="2.6" fill="url(#c1)"/><rect x="1268" y="177" width="50" height="2.6" fill="url(#c2)"/><rect x="1264" y="179" width="61" height="2.6" fill="url(#c3)"/><rect x="1261" y="181" width="70" height="2.6" fill="url(#c4)"/><rect x="1259" y="183" width="77" height="2.6" fill="url(#c5)"/><rect x="1256" y="185" width="85" height="2.6" fill="url(#c6)"/><rect x="1255" y="187" width="90" height="2.6" fill="url(#c7)"/><rect x="1253" y="189" width="97" height="2.6" fill="url(#c8)"/><rect x="1251" y="191" width="104" height="2.6" fill="url(#c9)"/><rect x="1250" y="193" width="109" height="2.6" fill="url(#c10)"/><rect x="1248" y="195" width="115" height="2.6" fill="url(#c11)"/><rect x="1247" y="197" width="120" height="2.6" fill="url(#c12)"/><rect x="1246" y="199" width="125" height="2.6" fill="url(#c13)"/><rect x="1245" y="201" width="130" height="2.6" fill="url(#c14)"/><rect x="1244" y="203" width="135" height="2.6" fill="url(#c15)"/><rect x="1243" y="205" width="140" height="2.6" fill="url(#c16)"/><rect x="1242" y="207" width="145" height="2.6" fill="url(#c17)"/><rect x="1241" y="209" width="149" height="2.6" fill="url(#c18)"/><rect x="1240" y="211" width="154" height="2.6" fill="url(#c19)"/><rect x="1239" y="213" width="158" height="2.6" fill="url(#c20)"/><rect x="1238" y="215" width="163" height="2.6" fill="url(#c21)"/><rect x="1238" y="217" width="166" height="2.6" fill="url(#c22)"/><rect x="1237" y="219" width="170" height="2.6" fill="url(#c23)"/><rect x="1236" y="221" width="175" height="2.6" fill="url(#c24)"/><rect x="1236" y="223" width="178" height="2.6" fill="url(#c25)"/><rect x="1235" y="225" width="182" height="2.6" fill="url(#c26)"/><rect x="1235" y="227" width="185" height="2.6" fill="url(#c27)"/><rect x="1234" y="229" width="190" height="2.6" fill="url(#c28)"/><rect x="1234" y="231" width="193" height="2.6" fill="url(#c29)"/><rect x="1233" y="233" width="197" height="2.6" fill="url(#c30)"/><rect x="1233" y="235" width="200" height="2.6" fill="url(#c31)"/><rect x="1232" y="237" width="204" height="2.6" fill="url(#c32)"/><rect x="1232" y="239" width="207" height="2.6" fill="url(#c33)"/><rect x="1232" y="241" width="210" height="2.6" fill="url(#c34)"/><rect x="1231" y="243" width="214" height="2.6" fill="url(#c35)"/><rect x="1231" y="245" width="217" height="2.6" fill="url(#c36)"/><rect x="1231" y="247" width="220" height="2.6" fill="url(#c37)"/><rect x="1230" y="249" width="224" height="2.6" fill="url(#c38)"/><rect x="1230" y="251" width="227" height="2.6" fill="url(#c39)"/><rect x="1230" y="253" width="230" height="2.6" fill="url(#c40)"/><rect x="1230" y="255" width="232" height="2.6" fill="url(#c41)"/><rect x="1229" y="257" width="236" height="2.6" fill="url(#c42)"/><rect x="1229" y="259" width="239" height="2.6" fill="url(#c43)"/><rect x="1229" y="261" width="242" height="2.6" fill="url(#c44)"/><rect x="1229" y="263" width="245" height="2.6" fill="url(#c45)"/><rect x="1229" y="265" width="248" height="2.6" fill="url(#c46)"/><rect x="1228" y="267" width="251" height="2.6" fill="url(#c47)"/><rect x="1228" y="269" width="254" height="2.6" fill="url(#c48)"/><rect x="1228" y="271" width="257" height="2.6" fill="url(#c49)"/><rect x="1228" y="273" width="260" height="2.6" fill="url(#c50)"/><rect x="1228" y="275" width="262" height="2.6" fill="url(#c51)"/><rect x="1228" y="277" width="265" height="2.6" fill="url(#c52)"/><rect x="1228" y="279" width="268" height="2.6" fill="url(#c53)"/><rect x="1228" y="281" width="271" height="2.6" fill="url(#c54)"/><rect x="1228" y="283" width="273" height="2.6" fill="url(#c55)"/><rect x="1228" y="285" width="276" height="2.6" fill="url(#c56)"/><rect x="1228" y="287" width="279" height="2.6" fill="url(#c57)"/><rect x="1227" y="289" width="282" height="2.6" fill="url(#c58)"/><rect x="1227" y="291" width="285" height="2.6" fill="url(#c59)"/><rect x="1227" y="293" width="288" height="2.6" fill="url(#c60)"/><rect x="1227" y="295" width="291" height="2.6" fill="url(#c61)"/><rect x="1227" y="297" width="293" height="2.6" fill="url(#c62)"/><rect x="1227" y="299" width="296" height="2.6" fill="url(#c63)"/><rect x="1227" y="301" width="299" height="2.6" fill="url(#c64)"/><rect x="1228" y="303" width="300" height="2.6" fill="url(#c65)"/><rect x="1228" y="305" width="303" height="2.6" fill="url(#c66)"/><rect x="1228" y="307" width="306" height="2.6" fill="url(#c67)"/><rect x="1228" y="309" width="308" height="2.6" fill="url(#c68)"/><rect x="1228" y="311" width="311" height="2.6" fill="url(#c69)"/><rect x="1228" y="313" width="314" height="2.6" fill="url(#c70)"/><rect x="1228" y="315" width="316" height="2.6" fill="url(#c71)"/><rect x="1228" y="317" width="319" height="2.6" fill="url(#c72)"/><rect x="1228" y="319" width="321" height="2.6" fill="url(#c73)"/><rect x="1228" y="321" width="324" height="2.6" fill="url(#c74)"/><rect x="1228" y="323" width="327" height="2.6" fill="url(#c75)"/><rect x="1228" y="325" width="329" height="2.6" fill="url(#c76)"/><rect x="1229" y="327" width="331" height="2.6" fill="url(#c77)"/><rect x="1229" y="329" width="334" height="2.6" fill="url(#c78)"/><rect x="1229" y="331" width="336" height="2.6" fill="url(#c79)"/><rect x="1229" y="333" width="339" height="2.6" fill="url(#c80)"/><rect x="1229" y="335" width="342" height="2.6" fill="url(#c81)"/><rect x="1229" y="337" width="344" height="2.6" fill="url(#c82)"/><rect x="1229" y="339" width="347" height="2.6" fill="url(#c83)"/><rect x="1230" y="341" width="348" height="2.6" fill="url(#c84)"/><rect x="1230" y="343" width="351" height="2.6" fill="url(#c85)"/><rect x="1230" y="345" width="354" height="2.6" fill="url(#c86)"/><rect x="1230" y="347" width="356" height="2.6" fill="url(#c87)"/><rect x="1230" y="349" width="359" height="2.6" fill="url(#c88)"/><rect x="1231" y="351" width="361" height="2.6" fill="url(#c89)"/><rect x="1231" y="353" width="363" height="2.6" fill="url(#c90)"/><rect x="1231" y="355" width="366" height="2.6" fill="url(#c91)"/><rect x="1231" y="357" width="368" height="2.6" fill="url(#c92)"/><rect x="1231" y="359" width="371" height="2.6" fill="url(#c93)"/><rect x="1232" y="361" width="373" height="2.6" fill="url(#c94)"/><rect x="1232" y="363" width="375" height="2.6" fill="url(#c95)"/><rect x="1232" y="365" width="378" height="2.6" fill="url(#c96)"/><rect x="1232" y="367" width="380" height="2.6" fill="url(#c97)"/><rect x="1233" y="369" width="382" height="2.6" fill="url(#c98)"/><rect x="1233" y="371" width="385" height="2.6" fill="url(#c99)"/><rect x="1233" y="373" width="387" height="2.6" fill="url(#c100)"/><rect x="1234" y="375" width="389" height="2.6" fill="url(#c101)"/><rect x="1234" y="377" width="391" height="2.6" fill="url(#c102)"/><rect x="1234" y="379" width="394" height="2.6" fill="url(#c103)"/><rect x="1234" y="381" width="397" height="2.6" fill="url(#c104)"/><rect x="1235" y="383" width="398" height="2.6" fill="url(#c105)"/><rect x="1235" y="385" width="401" height="2.6" fill="url(#c106)"/><rect x="1235" y="387" width="403" height="2.6" fill="url(#c107)"/><rect x="1236" y="389" width="405" height="2.6" fill="url(#c108)"/><rect x="1236" y="391" width="408" height="2.6" fill="url(#c109)"/><rect x="1236" y="393" width="410" height="2.6" fill="url(#c110)"/><rect x="1237" y="395" width="412" height="2.6" fill="url(#c111)"/><rect x="1237" y="397" width="414" height="2.6" fill="url(#c112)"/><rect x="1237" y="399" width="417" height="2.6" fill="url(#c113)"/><rect x="1238" y="401" width="419" height="2.6" fill="url(#c114)"/><rect x="1238" y="403" width="421" height="2.6" fill="url(#c115)"/><rect x="1238" y="405" width="424" height="2.6" fill="url(#c116)"/><rect x="1239" y="407" width="426" height="2.6" fill="url(#c117)"/><rect x="1239" y="409" width="428" height="2.6" fill="url(#c118)"/><rect x="1239" y="411" width="431" height="2.6" fill="url(#c119)"/><rect x="1240" y="413" width="432" height="2.6" fill="url(#c120)"/><rect x="1240" y="415" width="435" height="2.6" fill="url(#c121)"/><rect x="1240" y="417" width="438" height="2.6" fill="url(#c122)"/><rect x="1241" y="419" width="439" height="2.6" fill="url(#c123)"/><rect x="1241" y="421" width="442" height="2.6" fill="url(#c124)"/><rect x="1242" y="423" width="443" height="2.6" fill="url(#c125)"/><rect x="1242" y="425" width="446" height="2.6" fill="url(#c126)"/><rect x="1242" y="427" width="449" height="2.6" fill="url(#c127)"/><rect x="1243" y="429" width="450" height="2.6" fill="url(#c128)"/><rect x="1243" y="431" width="453" height="2.6" fill="url(#c129)"/><rect x="1243" y="433" width="455" height="2.6" fill="url(#c130)"/><rect x="1244" y="435" width="457" height="2.6" fill="url(#c131)"/><rect x="1244" y="437" width="460" height="2.6" fill="url(#c132)"/><rect x="1245" y="439" width="461" height="2.6" fill="url(#c133)"/><rect x="1245" y="441" width="464" height="2.6" fill="url(#c134)"/><rect x="1246" y="443" width="465" height="2.6" fill="url(#c135)"/><rect x="1246" y="445" width="468" height="2.6" fill="url(#c136)"/><rect x="1246" y="447" width="471" height="2.6" fill="url(#c137)"/><rect x="1247" y="449" width="472" height="2.6" fill="url(#c138)"/><rect x="1247" y="451" width="475" height="2.6" fill="url(#c139)"/><rect x="1248" y="453" width="476" height="2.6" fill="url(#c140)"/><rect x="1248" y="455" width="479" height="2.6" fill="url(#c141)"/><rect x="1249" y="457" width="481" height="2.6" fill="url(#c142)"/><rect x="1249" y="459" width="483" height="2.6" fill="url(#c143)"/><rect x="1250" y="461" width="485" height="2.6" fill="url(#c144)"/><rect x="1250" y="463" width="488" height="2.6" fill="url(#c145)"/><rect x="1251" y="465" width="489" height="2.6" fill="url(#c146)"/><rect x="1251" y="467" width="492" height="2.6" fill="url(#c147)"/><rect x="1252" y="469" width="493" height="2.6" fill="url(#c148)"/><rect x="1252" y="471" width="496" height="2.6" fill="url(#c149)"/><rect x="1253" y="473" width="498" height="2.6" fill="url(#c150)"/><rect x="1253" y="475" width="500" height="2.6" fill="url(#c151)"/><rect x="1254" y="477" width="502" height="2.6" fill="url(#c152)"/><rect x="1254" y="479" width="505" height="2.6" fill="url(#c153)"/><rect x="1255" y="481" width="506" height="2.6" fill="url(#c154)"/><rect x="1255" y="483" width="509" height="2.6" fill="url(#c155)"/><rect x="1256" y="485" width="510" height="2.6" fill="url(#c156)"/><rect x="1256" y="487" width="513" height="2.6" fill="url(#c157)"/><rect x="1257" y="489" width="514" height="2.6" fill="url(#c158)"/><rect x="1257" y="491" width="517" height="2.6" fill="url(#c159)"/><rect x="1258" y="493" width="519" height="2.6" fill="url(#c160)"/><rect x="1258" y="495" width="521" height="2.6" fill="url(#c161)"/><rect x="1259" y="497" width="523" height="2.6" fill="url(#c162)"/><rect x="1259" y="499" width="526" height="2.6" fill="url(#c163)"/><rect x="1260" y="501" width="527" height="2.6" fill="url(#c164)"/><rect x="1260" y="503" width="530" height="2.6" fill="url(#c165)"/><rect x="1261" y="505" width="531" height="2.6" fill="url(#c166)"/><rect x="1262" y="507" width="533" height="2.6" fill="url(#c167)"/><rect x="1262" y="509" width="536" height="2.6" fill="url(#c168)"/><rect x="1263" y="511" width="537" height="2.6" fill="url(#c169)"/><rect x="1263" y="513" width="540" height="2.6" fill="url(#c170)"/><rect x="1264" y="515" width="541" height="2.6" fill="url(#c171)"/><rect x="1264" y="517" width="544" height="2.6" fill="url(#c172)"/><rect x="1265" y="519" width="546" height="2.6" fill="url(#c173)"/><rect x="1266" y="521" width="545" height="2.6" fill="url(#c174)"/><rect x="1266" y="523" width="539" height="2.6" fill="url(#c175)"/><rect x="1267" y="525" width="533" height="2.6" fill="url(#c176)"/><rect x="1268" y="527" width="526" height="2.6" fill="url(#c177)"/><rect x="1268" y="529" width="520" height="2.6" fill="url(#c178)"/><rect x="1269" y="531" width="514" height="2.6" fill="url(#c179)"/><rect x="1269" y="533" width="508" height="2.6" fill="url(#c180)"/><rect x="1270" y="535" width="502" height="2.6" fill="url(#c181)"/><rect x="1271" y="537" width="495" height="2.6" fill="url(#c182)"/><rect x="1271" y="539" width="489" height="2.6" fill="url(#c183)"/><rect x="1272" y="541" width="483" height="2.6" fill="url(#c184)"/><rect x="1273" y="543" width="476" height="2.6" fill="url(#c185)"/><rect x="1273" y="545" width="471" height="2.6" fill="url(#c186)"/><rect x="1274" y="547" width="464" height="2.6" fill="url(#c187)"/><rect x="1275" y="549" width="457" height="2.6" fill="url(#c188)"/><rect x="1275" y="551" width="452" height="2.6" fill="url(#c189)"/><rect x="1276" y="553" width="445" height="2.6" fill="url(#c190)"/><rect x="1277" y="555" width="439" height="2.6" fill="url(#c191)"/><rect x="1278" y="557" width="432" height="2.6" fill="url(#c192)"/><rect x="1278" y="559" width="426" height="2.6" fill="url(#c193)"/><rect x="1279" y="561" width="420" height="2.6" fill="url(#c194)"/><rect x="1280" y="563" width="413" height="2.6" fill="url(#c195)"/><rect x="1281" y="565" width="407" height="2.6" fill="url(#c196)"/><rect x="1281" y="567" width="401" height="2.6" fill="url(#c197)"/><rect x="1282" y="569" width="394" height="2.6" fill="url(#c198)"/><rect x="1283" y="571" width="388" height="2.6" fill="url(#c199)"/><rect x="1284" y="573" width="381" height="2.6" fill="url(#c200)"/><rect x="1285" y="575" width="375" height="2.6" fill="url(#c201)"/><rect x="1285" y="577" width="369" height="2.6" fill="url(#c202)"/><rect x="1286" y="579" width="362" height="2.6" fill="url(#c203)"/><rect x="1287" y="581" width="356" height="2.6" fill="url(#c204)"/><rect x="1288" y="583" width="349" height="2.6" fill="url(#c205)"/><rect x="1289" y="585" width="343" height="2.6" fill="url(#c206)"/><rect x="1290" y="587" width="336" height="2.6" fill="url(#c207)"/><rect x="1291" y="589" width="330" height="2.6" fill="url(#c208)"/><rect x="1292" y="591" width="323" height="2.6" fill="url(#c209)"/><rect x="1293" y="593" width="316" height="2.6" fill="url(#c210)"/><rect x="1294" y="595" width="310" height="2.6" fill="url(#c211)"/><rect x="1294" y="597" width="304" height="2.6" fill="url(#c212)"/><rect x="1295" y="599" width="298" height="2.6" fill="url(#c213)"/><rect x="1296" y="601" width="291" height="2.6" fill="url(#c214)"/><rect x="1297" y="603" width="284" height="2.6" fill="url(#c215)"/><rect x="1298" y="605" width="278" height="2.6" fill="url(#c216)"/><rect x="1299" y="607" width="271" height="2.6" fill="url(#c217)"/><rect x="1300" y="609" width="265" height="2.6" fill="url(#c218)"/><rect x="1301" y="611" width="258" height="2.6" fill="url(#c219)"/><rect x="1302" y="613" width="251" height="2.6" fill="url(#c220)"/><rect x="1303" y="615" width="245" height="2.6" fill="url(#c221)"/><rect x="1304" y="617" width="238" height="2.6" fill="url(#c222)"/><rect x="1305" y="619" width="232" height="2.6" fill="url(#c223)"/><rect x="1306" y="621" width="225" height="2.6" fill="url(#c224)"/><rect x="1307" y="623" width="218" height="2.6" fill="url(#c225)"/><rect x="1309" y="625" width="211" height="2.6" fill="url(#c226)"/><rect x="1310" y="627" width="204" height="2.6" fill="url(#c227)"/><rect x="1311" y="629" width="198" height="2.6" fill="url(#c228)"/><rect x="1312" y="631" width="191" height="2.6" fill="url(#c229)"/><rect x="1313" y="633" width="184" height="2.6" fill="url(#c230)"/><rect x="1314" y="635" width="178" height="2.6" fill="url(#c231)"/><rect x="1316" y="637" width="170" height="2.6" fill="url(#c232)"/><rect x="1317" y="639" width="164" height="2.6" fill="url(#c233)"/><rect x="1318" y="641" width="157" height="2.6" fill="url(#c234)"/><rect x="1320" y="643" width="149" height="2.6" fill="url(#c235)"/><rect x="1321" y="645" width="143" height="2.6" fill="url(#c236)"/><rect x="1322" y="647" width="136" height="2.6" fill="url(#c237)"/><rect x="1324" y="649" width="129" height="2.6" fill="url(#c238)"/><rect x="1325" y="651" width="122" height="2.6" fill="url(#c239)"/><rect x="1327" y="653" width="114" height="2.6" fill="url(#c240)"/><rect x="1329" y="655" width="107" height="2.6" fill="url(#c241)"/><rect x="1330" y="657" width="100" height="2.6" fill="url(#c242)"/><rect x="1332" y="659" width="93" height="2.6" fill="url(#c243)"/><rect x="1334" y="661" width="85" height="2.6" fill="url(#c244)"/><rect x="1337" y="663" width="77" height="2.6" fill="url(#c245)"/><rect x="1339" y="665" width="69" height="2.6" fill="url(#c246)"/><rect x="1342" y="667" width="60" height="2.6" fill="url(#c247)"/><rect x="1344" y="669" width="53" height="2.6" fill="url(#c248)"/><rect x="1347" y="671" width="44" height="2.6" fill="url(#c249)"/><rect x="1350" y="673" width="36" height="2.6" fill="url(#c250)"/><rect x="1353" y="675" width="27" height="2.6" fill="url(#c251)"/><rect x="1356" y="677" width="18" height="2.6" fill="url(#c252)"/><rect x="1359" y="679" width="10" height="2" fill="url(#c253)"/><path d="M1223 168 H1815 V686 H1223 Z M1734.6,481.8 L1394.0,250.9 L1346.5,645.8 Z" fill="#000" fill-opacity="0.375" fill-rule="evenodd"/></g><path d="M1226.7 684.2 V169.7 H1894 V684.2 Z" fill="none" stroke="#9a9a9a" stroke-width="1.3"/><path d="M1220.5 684.2 H1894.6" fill="none" stroke="#b8b8b8" stroke-width="1.6"/><path d="M1226.7 169.5 V690" fill="none" stroke="#b8b8b8" stroke-width="1.6"/><text class="ct" x="1226.3" y="706.2" text-anchor="middle">0</text><text class="ct" x="1220.3" y="690.3" text-anchor="end">0</text><path d="M1305.5 684 V690" stroke="#d0d0d0" stroke-width="1.5"/><path d="M1220.5 624.1 H1226.5" stroke="#d0d0d0" stroke-width="1.5"/><text class="ct" x="1305.8" y="706.2" text-anchor="middle">0,1</text><text class="ct" x="1220.3" y="629.9" text-anchor="end">0,1</text><path d="M1385.1 684 V690" stroke="#d0d0d0" stroke-width="1.5"/><path d="M1220.5 562.8 H1226.5" stroke="#d0d0d0" stroke-width="1.5"/><text class="ct" x="1385.4" y="706.2" text-anchor="middle">0,2</text><text class="ct" x="1220.3" y="568.6" text-anchor="end">0,2</text><path d="M1464.7 684 V690" stroke="#d0d0d0" stroke-width="1.5"/><path d="M1220.5 501.5 H1226.5" stroke="#d0d0d0" stroke-width="1.5"/><text class="ct" x="1465.0" y="706.2" text-anchor="middle">0,3</text><text class="ct" x="1220.3" y="507.3" text-anchor="end">0,3</text><path d="M1544.2 684 V690" stroke="#d0d0d0" stroke-width="1.5"/><path d="M1220.5 440.2 H1226.5" stroke="#d0d0d0" stroke-width="1.5"/><text class="ct" x="1544.5" y="706.2" text-anchor="middle">0,4</text><text class="ct" x="1220.3" y="446.0" text-anchor="end">0,4</text><path d="M1623.8 684 V690" stroke="#d0d0d0" stroke-width="1.5"/><path d="M1220.5 378.9 H1226.5" stroke="#d0d0d0" stroke-width="1.5"/><text class="ct" x="1624.0" y="706.2" text-anchor="middle">0,5</text><text class="ct" x="1220.3" y="384.7" text-anchor="end">0,5</text><path d="M1703.3 684 V690" stroke="#d0d0d0" stroke-width="1.5"/><path d="M1220.5 317.6 H1226.5" stroke="#d0d0d0" stroke-width="1.5"/><text class="ct" x="1703.6" y="706.2" text-anchor="middle">0,6</text><text class="ct" x="1220.3" y="323.4" text-anchor="end">0,6</text><path d="M1782.8 684 V690" stroke="#d0d0d0" stroke-width="1.5"/><path d="M1220.5 256.3 H1226.5" stroke="#d0d0d0" stroke-width="1.5"/><text class="ct" x="1783.1" y="706.2" text-anchor="middle">0,7</text><text class="ct" x="1220.3" y="262.1" text-anchor="end">0,7</text><path d="M1862.4 684 V690" stroke="#d0d0d0" stroke-width="1.5"/><path d="M1220.5 195.0 H1226.5" stroke="#d0d0d0" stroke-width="1.5"/><text class="ct" x="1862.7" y="706.2" text-anchor="middle">0,8</text><text class="ct" x="1220.3" y="200.8" text-anchor="end">0,8</text><text class="ct" x="1547" y="164" text-anchor="middle" style="font-size:14.8px">CIE 1931 xy</text><rect x="1385.5" y="241.6" width="14" height="14" fill="none" stroke="#f2f2f2" stroke-width="1.6"/><rect x="1558.0" y="359.0" width="14" height="14" fill="none" stroke="#f2f2f2" stroke-width="1.6"/><rect x="1728.0" y="474.0" width="14" height="14" fill="none" stroke="#f2f2f2" stroke-width="1.6"/><rect x="1500.0" y="571.0" width="14" height="14" fill="none" stroke="#f2f2f2" stroke-width="1.6"/><rect x="1338.0" y="639.4" width="14" height="14" fill="none" stroke="#f2f2f2" stroke-width="1.6"/><rect x="1359.0" y="475.0" width="14" height="14" fill="none" stroke="#f2f2f2" stroke-width="1.6"/><rect x="1468.8" y="475.8" width="13.3" height="13.3" fill="none" stroke="#000" stroke-width="1.7"/><circle cx="1471" cy="482.9" r="4.3" fill="#fff" stroke="#000" stroke-width="1.4"/><rect x="1695" y="175" width="196" height="194" fill="#1c1c1c"/><rect x="1697" y="177" width="192" height="190" fill="#8a8a8a"/><g><rect x="1698" y="178" width="190" height="3.6" fill="url(#i0)"/><rect x="1698" y="181" width="190" height="3.6" fill="url(#i1)"/><rect x="1698" y="184" width="190" height="3.6" fill="url(#i2)"/><rect x="1698" y="187" width="190" height="3.6" fill="url(#i3)"/><rect x="1698" y="190" width="190" height="3.6" fill="url(#i4)"/><rect x="1698" y="193" width="190" height="3.6" fill="url(#i5)"/><rect x="1698" y="196" width="190" height="3.6" fill="url(#i6)"/><rect x="1698" y="199" width="190" height="3.6" fill="url(#i7)"/><rect x="1698" y="202" width="190" height="3.6" fill="url(#i8)"/><rect x="1698" y="205" width="190" height="3.6" fill="url(#i9)"/><rect x="1698" y="208" width="190" height="3.6" fill="url(#i10)"/><rect x="1698" y="211" width="190" height="3.6" fill="url(#i11)"/><rect x="1698" y="214" width="190" height="3.6" fill="url(#i12)"/><rect x="1698" y="217" width="190" height="3.6" fill="url(#i13)"/><rect x="1698" y="220" width="190" height="3.6" fill="url(#i14)"/><rect x="1698" y="223" width="190" height="3.6" fill="url(#i15)"/><rect x="1698" y="226" width="190" height="3.6" fill="url(#i16)"/><rect x="1698" y="229" width="190" height="3.6" fill="url(#i17)"/><rect x="1698" y="232" width="190" height="3.6" fill="url(#i18)"/><rect x="1698" y="235" width="190" height="3.6" fill="url(#i19)"/><rect x="1698" y="238" width="190" height="3.6" fill="url(#i20)"/><rect x="1698" y="241" width="190" height="3.6" fill="url(#i21)"/><rect x="1698" y="244" width="190" height="3.6" fill="url(#i22)"/><rect x="1698" y="247" width="190" height="3.6" fill="url(#i23)"/><rect x="1698" y="250" width="190" height="3.6" fill="url(#i24)"/><rect x="1698" y="253" width="190" height="3.6" fill="url(#i25)"/><rect x="1698" y="256" width="190" height="3.6" fill="url(#i26)"/><rect x="1698" y="259" width="190" height="3.6" fill="url(#i27)"/><rect x="1698" y="262" width="190" height="3.6" fill="url(#i28)"/><rect x="1698" y="265" width="190" height="3.6" fill="url(#i29)"/><rect x="1698" y="268" width="190" height="3.6" fill="url(#i30)"/><rect x="1698" y="271" width="190" height="3.6" fill="url(#i31)"/><rect x="1698" y="274" width="190" height="3.6" fill="url(#i32)"/><rect x="1698" y="277" width="190" height="3.6" fill="url(#i33)"/><rect x="1698" y="280" width="190" height="3.6" fill="url(#i34)"/><rect x="1698" y="283" width="190" height="3.6" fill="url(#i35)"/><rect x="1698" y="286" width="190" height="3.6" fill="url(#i36)"/><rect x="1698" y="289" width="190" height="3.6" fill="url(#i37)"/><rect x="1698" y="292" width="190" height="3.6" fill="url(#i38)"/><rect x="1698" y="295" width="190" height="3.6" fill="url(#i39)"/><rect x="1698" y="298" width="190" height="3.6" fill="url(#i40)"/><rect x="1698" y="301" width="190" height="3.6" fill="url(#i41)"/><rect x="1698" y="304" width="190" height="3.6" fill="url(#i42)"/><rect x="1698" y="307" width="190" height="3.6" fill="url(#i43)"/><rect x="1698" y="310" width="190" height="3.6" fill="url(#i44)"/><rect x="1698" y="313" width="190" height="3.6" fill="url(#i45)"/><rect x="1698" y="316" width="190" height="3.6" fill="url(#i46)"/><rect x="1698" y="319" width="190" height="3.6" fill="url(#i47)"/><rect x="1698" y="322" width="190" height="3.6" fill="url(#i48)"/><rect x="1698" y="325" width="190" height="3.6" fill="url(#i49)"/><rect x="1698" y="328" width="190" height="3.6" fill="url(#i50)"/><rect x="1698" y="331" width="190" height="3.6" fill="url(#i51)"/><rect x="1698" y="334" width="190" height="3.6" fill="url(#i52)"/><rect x="1698" y="337" width="190" height="3.6" fill="url(#i53)"/><rect x="1698" y="340" width="190" height="3.6" fill="url(#i54)"/><rect x="1698" y="343" width="190" height="3.6" fill="url(#i55)"/><rect x="1698" y="346" width="190" height="3.6" fill="url(#i56)"/><rect x="1698" y="349" width="190" height="3.6" fill="url(#i57)"/><rect x="1698" y="352" width="190" height="3.6" fill="url(#i58)"/><rect x="1698" y="355" width="190" height="3.6" fill="url(#i59)"/><rect x="1698" y="358" width="190" height="3.6" fill="url(#i60)"/><rect x="1698" y="361" width="190" height="3.6" fill="url(#i61)"/><rect x="1698" y="364" width="190" height="2" fill="url(#i62)"/></g><rect x="1785.4" y="264.6" width="13.6" height="13.6" fill="none" stroke="#000" stroke-width="1.7"/><circle cx="1772.4" cy="278.1" r="3.9" fill="none" stroke="#000" stroke-width="1.3"/></svg>
<svg class="abs" style="left:0;top:0" width="1190" height="1050" viewBox="0 0 1190 1050"><rect x="209" y="905.5" width="192" height="51" fill="none" stroke="#fa0000" stroke-width="4.6"/><path d="M445.2 955.4 L554.6 955.4 L551.9 970.1 L653.9 999.4 L645.7 1028.6 L543.1 1000 L538.3 1015 Z" fill="none" stroke="#fa0000" stroke-width="5" stroke-linejoin="miter" stroke-miterlimit="10"/></svg><div class="abs" style="left:1597px;top:988px;width:49px;height:62px;border-radius:5px 0 0 0;background:linear-gradient(180deg,#989898 0,#858585 50%,#6a6a6a 100%)"></div><div class="abs" style="left:1597px;top:1006px;width:49px;height:1.5px;background:#4a4a4a"></div><div class="abs" style="left:1612.5px;top:988px;width:17px;height:17px;border-radius:50%;background:radial-gradient(circle at 50% 60%,#6e6e6e,#858585 70%,rgba(140,140,140,0))"></div><svg class="abs" style="left:1616px;top:992px" width="10" height="7"><path d="M1 6L5 1.4L9 6Z" fill="#333"/></svg><div class="abs" style="left:1605px;top:1012.5px;width:32px;height:31px;border:3px solid #2c2c2c;border-radius:5px;background:linear-gradient(180deg,#9c9c9c 50%,#7e7e7e 50%)"></div><div class="abs" style="left:1614.5px;top:1021.5px;width:13px;height:13px;background:linear-gradient(180deg,#1c1c1c 50%,#000 50%)"></div><div class="abs" style="left:1646.5px;top:988px;width:44.7px;height:30px;background:linear-gradient(180deg,#949494 0,#828282 50%,#666 100%)"></div><div class="abs" style="left:1658.75px;top:993px;width:20px;height:20px;border-radius:50%;background:linear-gradient(180deg,#6e6e6e,#8a8a8a 60%,#9a9a9a)"></div><div class="abs" style="left:1664.75px;top:999px;width:8px;height:8px;background:#383838"></div><div class="abs" style="left:1692px;top:988px;width:44.7px;height:30px;background:linear-gradient(180deg,#949494 0,#828282 50%,#666 100%)"></div><div class="abs" style="left:1704.25px;top:993px;width:20px;height:20px;border-radius:50%;background:linear-gradient(180deg,#6e6e6e,#8a8a8a 60%,#9a9a9a)"></div><svg class="abs" style="left:1710.25px;top:998px" width="10" height="10"><path d="M1.5 0.5V9.5L9.5 5Z" fill="#333"/></svg><div class="abs" style="left:1737.5px;top:988px;width:44.2px;height:30px;background:linear-gradient(180deg,#949494 0,#828282 50%,#666 100%)"></div><div class="abs" style="left:1749.5px;top:993px;width:20px;height:20px;border-radius:50%;background:linear-gradient(180deg,#6e6e6e,#8a8a8a 60%,#9a9a9a)"></div><svg class="abs" style="left:1752.5px;top:998px" width="14" height="10"><path d="M4 0.8H1.5V9.2H4M10 0.8H12.500V9.2H10" fill="none" stroke="#333" stroke-width="1.6"/><path d="M5 5H6.300M7.700 5H9" stroke="#333" stroke-width="1.4"/></svg><div class="abs" style="left:1782.5px;top:988px;width:44.2px;height:30px;background:linear-gradient(180deg,#949494 0,#828282 50%,#666 100%)"></div><div class="abs" style="left:1794.5px;top:993px;width:20px;height:20px;border-radius:50%;background:linear-gradient(180deg,#6e6e6e,#8a8a8a 60%,#9a9a9a)"></div><svg class="abs" style="left:1796.5px;top:999px" width="16" height="8"><path d="M8 4C6.500 1.800 5.200 1 3.800 1C2.200 1 1 2.300 1 4C1 5.700 2.200 7 3.800 7C5.200 7 6.500 6.200 8 4C9.500 1.800 10.800 1 12.200 1C13.800 1 15 2.300 15 4C15 5.700 13.800 7 12.200 7C10.800 7 9.500 6.200 8 4Z" fill="none" stroke="#333" stroke-width="1.5"/></svg><div class="abs" style="left:1827.5px;top:988px;width:44.2px;height:30px;background:linear-gradient(180deg,#3e3e3e,#2e2e2e)"></div><div class="abs" style="left:1839.5px;top:993px;width:20px;height:20px;border-radius:50%;background:linear-gradient(180deg,#2c2c2c,#444)"></div><svg class="abs" style="left:1842.5px;top:996px" width="14" height="14" viewBox="-7 -7 14 14"><path d="M-4.600 -1.500A4.800 4.800 0 0 1 3.600 -3.200M4.600 1.500A4.800 4.800 0 0 1 -3.600 3.200" fill="none" stroke="#222" stroke-width="1.9"/><path d="M5.600 -5.600V-1.400H1.400ZM-5.600 5.600V1.400H-1.400Z" fill="#222"/></svg><div class="abs" style="left:1872.5px;top:988px;width:44.7px;height:30px;background:linear-gradient(180deg,#949494 0,#828282 50%,#666 100%)"></div><div class="abs" style="left:1884.75px;top:993px;width:20px;height:20px;border-radius:50%;background:linear-gradient(180deg,#8a8a8a,#9c9c9c)"></div><div class="abs" style="left:1646.5px;top:1019.5px;width:135.3px;height:31px;border-radius:5px 0 0 0;background:linear-gradient(180deg,#9c9c9c 0,#868686 50%,#6a6a6a 100%)"></div><div class="abs" style="left:1782.5px;top:1019.5px;width:130px;height:31px;background:linear-gradient(180deg,#9c9c9c 0,#868686 50%,#6a6a6a 100%)"></div><div class="abs" style="left:1667px;top:1025px;width:19px;height:19px;border-radius:50%;background:linear-gradient(180deg,#747474,#909090 60%,#a0a0a0)"></div><div class="t" style="left:1476.5px;width:400px;top:1023.6px;font-size:17px;line-height:20px;color:#2e2e2e;text-align:center;font-weight:bold;">«</div><div class="abs" style="left:1881px;top:1025px;width:19px;height:19px;border-radius:50%;background:linear-gradient(180deg,#747474,#909090 60%,#a0a0a0)"></div><div class="t" style="left:1690.5px;width:400px;top:1023.6px;font-size:17px;line-height:20px;color:#2e2e2e;text-align:center;font-weight:bold;">»</div><div class="t" style="left:1528.5px;width:400px;top:1021.3px;font-size:22.6px;line-height:27px;color:#2e2e2e;text-align:center;letter-spacing:-0.061px;-webkit-text-stroke:0.3px #2e2e2e;">Back</div><div class="t" style="left:1636.0px;width:400px;top:1021.3px;font-size:22.6px;line-height:27px;color:#2e2e2e;text-align:center;letter-spacing:1.133px;-webkit-text-stroke:0.3px #2e2e2e;">Next</div>
</body></html>
